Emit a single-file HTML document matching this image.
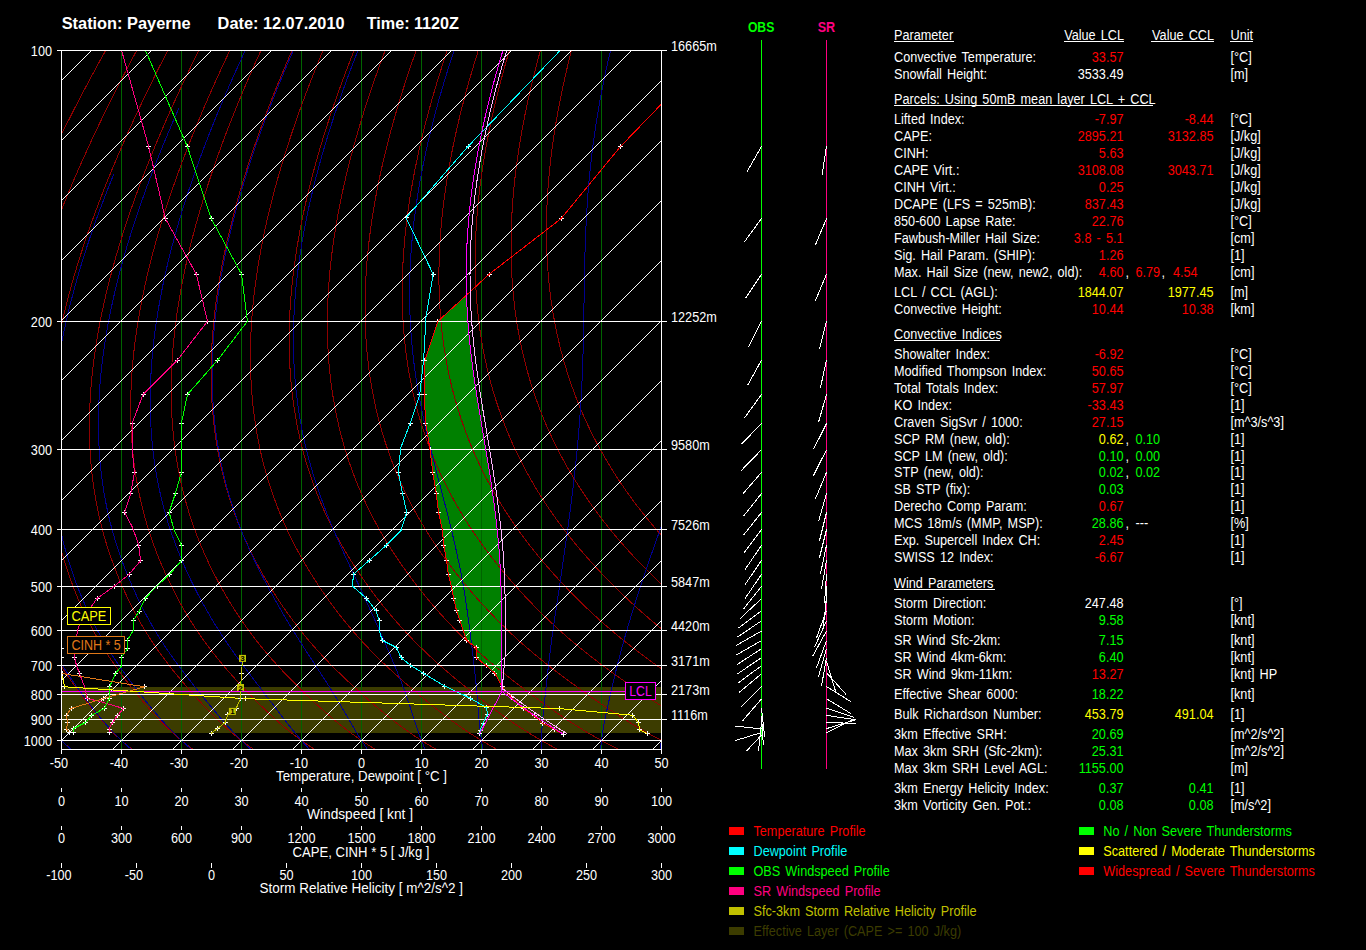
<!DOCTYPE html>
<html><head><meta charset="utf-8"><style>
html,body{margin:0;padding:0;background:#000;width:1366px;height:950px;overflow:hidden}
svg{position:absolute;left:0;top:0}
path{shape-rendering:crispEdges}
text{font-family:"Liberation Sans",sans-serif}
</style></head><body>
<svg width="1366" height="950" viewBox="0 0 1366 950">
<defs><clipPath id="pc"><rect x="62" y="51" width="599" height="698"/></clipPath></defs>

<g clip-path="url(#pc)" fill="none" stroke-width="1">
<rect x="62" y="687" width="599" height="46" fill="#3c3c00" stroke="none"/>
<path d="M466.00 295.50 L464.91 296.50 L463.82 297.50 L462.73 298.50 L461.64 299.50 L460.55 300.50 L459.47 301.50 L458.38 302.50 L457.29 303.50 L456.20 304.50 L455.11 305.50 L454.02 306.50 L452.93 307.50 L451.84 308.50 L450.75 309.50 L449.66 310.50 L448.57 311.50 L447.48 312.50 L446.40 313.50 L445.31 314.50 L444.22 315.50 L443.13 316.50 L442.04 317.50 L440.95 318.50 L439.86 319.50 L438.77 320.50 L437.83 321.50 L437.50 322.50 L437.16 323.50 L436.83 324.50 L436.49 325.50 L436.16 326.50 L435.82 327.50 L435.49 328.50 L435.15 329.50 L434.82 330.50 L434.48 331.50 L434.15 332.50 L433.81 333.50 L433.48 334.50 L433.14 335.50 L432.81 336.50 L432.47 337.50 L432.14 338.50 L431.80 339.50 L431.47 340.50 L431.13 341.50 L430.80 342.50 L430.46 343.50 L430.13 344.50 L429.79 345.50 L429.46 346.50 L429.12 347.50 L428.79 348.50 L428.45 349.50 L428.12 350.50 L427.78 351.50 L427.45 352.50 L427.11 353.50 L426.78 354.50 L426.44 355.50 L426.11 356.50 L425.77 357.50 L425.44 358.50 L425.10 359.50 L424.89 360.50 L424.87 361.50 L424.85 362.50 L424.83 363.50 L424.81 364.50 L424.79 365.50 L424.77 366.50 L424.75 367.50 L424.73 368.50 L424.71 369.50 L424.69 370.50 L424.67 371.50 L424.65 372.50 L424.63 373.50 L424.61 374.50 L424.59 375.50 L424.57 376.50 L424.54 377.50 L424.52 378.50 L424.50 379.50 L424.48 380.50 L424.46 381.50 L424.44 382.50 L424.42 383.50 L424.40 384.50 L424.38 385.50 L424.36 386.50 L424.34 387.50 L424.32 388.50 L424.30 389.50 L424.28 390.50 L424.26 391.50 L424.24 392.50 L424.22 393.50 L424.21 394.50 L424.26 395.50 L424.31 396.50 L424.36 397.50 L424.41 398.50 L424.47 399.50 L424.52 400.50 L424.57 401.50 L424.62 402.50 L424.67 403.50 L424.73 404.50 L424.78 405.50 L424.83 406.50 L424.88 407.50 L424.93 408.50 L424.99 409.50 L425.04 410.50 L425.09 411.50 L425.14 412.50 L425.19 413.50 L425.25 414.50 L425.30 415.50 L425.35 416.50 L425.40 417.50 L425.46 418.50 L425.51 419.50 L425.56 420.50 L425.61 421.50 L425.66 422.50 L425.75 423.50 L425.91 424.50 L426.07 425.50 L426.24 426.50 L426.40 427.50 L426.56 428.50 L426.73 429.50 L426.89 430.50 L427.05 431.50 L427.21 432.50 L427.38 433.50 L427.54 434.50 L427.70 435.50 L427.87 436.50 L428.03 437.50 L428.19 438.50 L428.35 439.50 L428.52 440.50 L428.68 441.50 L428.84 442.50 L429.01 443.50 L429.17 444.50 L429.33 445.50 L429.50 446.50 L429.66 447.50 L429.82 448.50 L429.98 449.50 L430.11 450.50 L430.23 451.50 L430.36 452.50 L430.48 453.50 L430.60 454.50 L430.72 455.50 L430.85 456.50 L430.97 457.50 L431.09 458.50 L431.22 459.50 L431.34 460.50 L431.46 461.50 L431.58 462.50 L431.71 463.50 L431.83 464.50 L431.95 465.50 L432.08 466.50 L432.20 467.50 L432.32 468.50 L432.44 469.50 L432.57 470.50 L432.69 471.50 L432.82 472.50 L432.98 473.50 L433.14 474.50 L433.30 475.50 L433.46 476.50 L433.62 477.50 L433.78 478.50 L433.94 479.50 L434.10 480.50 L434.26 481.50 L434.42 482.50 L434.58 483.50 L434.74 484.50 L434.90 485.50 L435.06 486.50 L435.22 487.50 L435.38 488.50 L435.54 489.50 L435.70 490.50 L435.86 491.50 L436.02 492.50 L436.18 493.50 L436.31 494.50 L436.44 495.50 L436.56 496.50 L436.68 497.50 L436.81 498.50 L436.93 499.50 L437.06 500.50 L437.18 501.50 L437.31 502.50 L437.43 503.50 L437.56 504.50 L437.68 505.50 L437.80 506.50 L437.93 507.50 L438.05 508.50 L438.18 509.50 L438.30 510.50 L438.43 511.50 L438.59 512.50 L438.81 513.50 L439.02 514.50 L439.24 515.50 L439.46 516.50 L439.68 517.50 L439.90 518.50 L440.12 519.50 L440.33 520.50 L440.55 521.50 L440.77 522.50 L440.99 523.50 L441.21 524.50 L441.43 525.50 L441.64 526.50 L441.86 527.50 L442.08 528.50 L442.30 529.50 L442.39 530.50 L442.49 531.50 L442.58 532.50 L442.68 533.50 L442.77 534.50 L442.87 535.50 L442.96 536.50 L443.06 537.50 L443.15 538.50 L443.25 539.50 L443.34 540.50 L443.44 541.50 L443.53 542.50 L443.63 543.50 L443.72 544.50 L443.84 545.50 L444.02 546.50 L444.20 547.50 L444.38 548.50 L444.56 549.50 L444.74 550.50 L444.92 551.50 L445.10 552.50 L445.28 553.50 L445.46 554.50 L445.64 555.50 L445.82 556.50 L446.00 557.50 L446.18 558.50 L446.36 559.50 L446.53 560.50 L446.66 561.50 L446.79 562.50 L446.93 563.50 L447.06 564.50 L447.20 565.50 L447.33 566.50 L447.46 567.50 L447.60 568.50 L447.73 569.50 L447.86 570.50 L448.00 571.50 L448.13 572.50 L448.27 573.50 L448.40 574.50 L448.65 575.50 L448.91 576.50 L449.16 577.50 L449.42 578.50 L449.67 579.50 L449.93 580.50 L450.18 581.50 L450.43 582.50 L450.69 583.50 L450.94 584.50 L451.20 585.50 L451.44 586.50 L451.63 587.50 L451.82 588.50 L452.01 589.50 L452.20 590.50 L452.39 591.50 L452.58 592.50 L452.77 593.50 L452.96 594.50 L453.15 595.50 L453.34 596.50 L453.53 597.50 L453.72 598.50 L453.95 599.50 L454.18 600.50 L454.41 601.50 L454.63 602.50 L454.86 603.50 L455.09 604.50 L455.32 605.50 L455.54 606.50 L455.77 607.50 L456.00 608.50 L456.23 609.50 L456.45 610.50 L456.77 611.50 L457.11 612.50 L457.45 613.50 L457.79 614.50 L458.13 615.50 L458.47 616.50 L458.81 617.50 L459.15 618.50 L459.49 619.50 L459.83 620.50 L460.17 621.50 L460.50 622.50 L460.84 623.50 L461.18 624.50 L461.51 625.50 L461.85 626.50 L462.18 627.50 L462.52 628.50 L462.85 629.50 L463.19 630.50 L463.52 631.50 L463.86 632.50 L464.20 633.50 L464.53 634.50 L464.88 635.50 L465.26 636.50 L465.64 637.50 L466.02 638.50 L466.40 639.50 L466.96 640.50 L468.26 641.50 L469.56 642.50 L470.86 643.50 L472.17 644.50 L473.47 645.50 L474.77 646.50 L476.07 647.50 L476.20 648.50 L476.20 649.50 L476.20 650.50 L476.20 651.50 L476.20 652.50 L476.20 653.50 L476.20 654.50 L476.20 655.50 L476.20 656.50 L476.20 657.50 L477.22 658.50 L478.48 659.50 L479.75 660.50 L481.02 661.50 L482.29 662.50 L483.56 663.50 L484.83 664.50 L486.10 665.50 L487.21 666.50 L488.33 667.50 L489.44 668.50 L490.56 669.50 L491.67 670.50 L492.78 671.50 L493.90 672.50 L494.96 673.50 L495.51 674.50 L496.06 675.50 L496.61 676.50 L497.17 677.50 L497.72 678.50 L498.27 679.50 L498.83 680.50 L499.38 681.50 L499.93 682.50 L500.49 683.50 L501.04 684.50 L501.59 685.50 L501.90 686.00 L501.90 685.00 L501.90 684.00 L501.90 683.00 L501.90 682.00 L501.89 681.00 L501.89 680.00 L501.88 679.00 L501.88 678.00 L501.87 677.00 L501.87 676.00 L501.86 675.00 L501.86 674.00 L501.85 673.00 L501.84 672.00 L501.84 671.00 L501.83 670.00 L501.82 669.00 L501.82 668.00 L501.81 667.00 L501.80 666.00 L501.80 665.00 L501.79 664.00 L501.78 663.00 L501.78 662.00 L501.77 661.00 L501.76 660.00 L501.76 659.00 L501.75 658.00 L501.75 657.00 L501.74 656.00 L501.73 655.00 L501.73 654.00 L501.72 653.00 L501.72 652.00 L501.71 651.00 L501.71 650.00 L501.70 649.00 L501.69 648.00 L501.69 647.00 L501.68 646.00 L501.68 645.00 L501.67 644.00 L501.67 643.00 L501.66 642.00 L501.66 641.00 L501.65 640.00 L501.65 639.00 L501.64 638.00 L501.64 637.00 L501.63 636.00 L501.63 635.00 L501.62 634.00 L501.62 633.00 L501.61 632.00 L501.61 631.00 L501.60 630.00 L501.60 629.00 L501.59 628.00 L501.59 627.00 L501.58 626.00 L501.58 625.00 L501.57 624.00 L501.57 623.00 L501.56 622.00 L501.55 621.00 L501.55 620.00 L501.54 619.00 L501.53 618.00 L501.53 617.00 L501.52 616.00 L501.51 615.00 L501.50 614.00 L501.49 613.00 L501.48 612.00 L501.47 611.00 L501.46 610.00 L501.45 609.00 L501.44 608.00 L501.43 607.00 L501.41 606.00 L501.40 605.00 L501.38 604.00 L501.37 603.00 L501.35 602.00 L501.34 601.00 L501.32 600.00 L501.30 599.00 L501.28 598.00 L501.26 597.00 L501.24 596.00 L501.22 595.00 L501.20 594.00 L501.17 593.00 L501.15 592.00 L501.12 591.00 L501.10 590.00 L501.07 589.00 L501.04 588.00 L501.01 587.00 L500.98 586.00 L500.95 585.00 L500.91 584.00 L500.88 583.00 L500.84 582.00 L500.81 581.00 L500.77 580.00 L500.73 579.00 L500.69 578.00 L500.65 577.00 L500.61 576.00 L500.56 575.00 L500.52 574.00 L500.47 573.00 L500.43 572.00 L500.38 571.00 L500.33 570.00 L500.28 569.00 L500.23 568.00 L500.18 567.00 L500.12 566.00 L500.07 565.00 L500.01 564.00 L499.96 563.00 L499.90 562.00 L499.84 561.00 L499.78 560.00 L499.72 559.00 L499.66 558.00 L499.59 557.00 L499.53 556.00 L499.46 555.00 L499.39 554.00 L499.33 553.00 L499.26 552.00 L499.18 551.00 L499.10 550.00 L499.01 549.00 L498.93 548.00 L498.84 547.00 L498.75 546.00 L498.66 545.00 L498.57 544.00 L498.48 543.00 L498.39 542.00 L498.29 541.00 L498.20 540.00 L498.10 539.00 L498.00 538.00 L497.91 537.00 L497.81 536.00 L497.71 535.00 L497.61 534.00 L497.50 533.00 L497.40 532.00 L497.30 531.00 L497.19 530.00 L497.08 529.00 L496.98 528.00 L496.87 527.00 L496.76 526.00 L496.65 525.00 L496.54 524.00 L496.43 523.00 L496.31 522.00 L496.20 521.00 L496.08 520.00 L495.97 519.00 L495.85 518.00 L495.73 517.00 L495.61 516.00 L495.49 515.00 L495.37 514.00 L495.25 513.00 L495.13 512.00 L495.00 511.00 L494.88 510.00 L494.75 509.00 L494.62 508.00 L494.50 507.00 L494.37 506.00 L494.24 505.00 L494.11 504.00 L493.98 503.00 L493.84 502.00 L493.71 501.00 L493.58 500.00 L493.44 499.00 L493.30 498.00 L493.17 497.00 L493.03 496.00 L492.89 495.00 L492.75 494.00 L492.61 493.00 L492.47 492.00 L492.33 491.00 L492.18 490.00 L492.04 489.00 L491.89 488.00 L491.75 487.00 L491.60 486.00 L491.45 485.00 L491.31 484.00 L491.16 483.00 L491.01 482.00 L490.86 481.00 L490.71 480.00 L490.55 479.00 L490.40 478.00 L490.25 477.00 L490.10 476.00 L489.94 475.00 L489.79 474.00 L489.63 473.00 L489.47 472.00 L489.32 471.00 L489.16 470.00 L489.00 469.00 L488.84 468.00 L488.68 467.00 L488.52 466.00 L488.36 465.00 L488.20 464.00 L488.04 463.00 L487.87 462.00 L487.71 461.00 L487.55 460.00 L487.38 459.00 L487.22 458.00 L487.06 457.00 L486.89 456.00 L486.73 455.00 L486.56 454.00 L486.39 453.00 L486.23 452.00 L486.06 451.00 L485.89 450.00 L485.72 449.00 L485.56 448.00 L485.39 447.00 L485.22 446.00 L485.05 445.00 L484.88 444.00 L484.71 443.00 L484.54 442.00 L484.38 441.00 L484.21 440.00 L484.04 439.00 L483.87 438.00 L483.70 437.00 L483.53 436.00 L483.36 435.00 L483.19 434.00 L483.02 433.00 L482.85 432.00 L482.68 431.00 L482.51 430.00 L482.33 429.00 L482.16 428.00 L482.00 427.00 L481.83 426.00 L481.66 425.00 L481.49 424.00 L481.32 423.00 L481.15 422.00 L480.98 421.00 L480.81 420.00 L480.64 419.00 L480.47 418.00 L480.30 417.00 L480.14 416.00 L479.97 415.00 L479.80 414.00 L479.64 413.00 L479.47 412.00 L479.30 411.00 L479.14 410.00 L478.97 409.00 L478.81 408.00 L478.64 407.00 L478.48 406.00 L478.31 405.00 L478.15 404.00 L477.99 403.00 L477.83 402.00 L477.67 401.00 L477.51 400.00 L477.35 399.00 L477.19 398.00 L477.03 397.00 L476.87 396.00 L476.71 395.00 L476.55 394.00 L476.40 393.00 L476.24 392.00 L476.09 391.00 L475.93 390.00 L475.78 389.00 L475.63 388.00 L475.48 387.00 L475.33 386.00 L475.18 385.00 L475.03 384.00 L474.88 383.00 L474.73 382.00 L474.58 381.00 L474.44 380.00 L474.29 379.00 L474.15 378.00 L474.01 377.00 L473.86 376.00 L473.72 375.00 L473.58 374.00 L473.44 373.00 L473.31 372.00 L473.17 371.00 L473.03 370.00 L472.90 369.00 L472.76 368.00 L472.63 367.00 L472.50 366.00 L472.37 365.00 L472.24 364.00 L472.11 363.00 L471.98 362.00 L471.86 361.00 L471.73 360.00 L471.61 359.00 L471.49 358.00 L471.37 357.00 L471.25 356.00 L471.13 355.00 L471.01 354.00 L470.89 353.00 L470.78 352.00 L470.66 351.00 L470.55 350.00 L470.44 349.00 L470.33 348.00 L470.22 347.00 L470.11 346.00 L470.01 345.00 L469.90 344.00 L469.80 343.00 L469.70 342.00 L469.60 341.00 L469.50 340.00 L469.40 339.00 L469.30 338.00 L469.21 337.00 L469.11 336.00 L469.02 335.00 L468.93 334.00 L468.84 333.00 L468.75 332.00 L468.66 331.00 L468.58 330.00 L468.49 329.00 L468.41 328.00 L468.33 327.00 L468.25 326.00 L468.17 325.00 L468.09 324.00 L468.02 323.00 L467.95 322.00 L467.87 321.00 L467.80 320.00 L467.73 319.00 L467.67 318.00 L467.60 317.00 L467.53 316.00 L467.47 315.00 L467.41 314.00 L467.35 313.00 L467.29 312.00 L467.23 311.00 L467.18 310.00 L467.12 309.00 L467.07 308.00 L467.02 307.00 L466.97 306.00 L466.92 305.00 L466.88 304.00 L466.83 303.00 L466.79 302.00 L466.75 301.00 L466.70 300.00 L466.67 299.00 L466.63 298.00 L466.59 297.00 L466.56 296.00Z" fill="#008000" stroke="none"/>
<g stroke="#006400"><path d="M121.5 50.5 V749.5"/><path d="M181.5 50.5 V749.5"/><path d="M241.5 50.5 V749.5"/><path d="M301.5 50.5 V749.5"/><path d="M361.5 50.5 V749.5"/><path d="M421.5 50.5 V749.5"/><path d="M481.5 50.5 V749.5"/><path d="M541.5 50.5 V749.5"/><path d="M601.5 50.5 V749.5"/></g>
<g stroke="#900000"><path d="M115.95 32.13 L113.87 35.80 L111.81 39.45 L109.76 43.09 L107.73 46.72 L105.71 50.34 L103.71 53.95 L101.72 57.55 L99.75 61.14 L97.79 64.71 L95.85 68.27 L93.92 71.83 L92.01 75.37 L90.11 78.90 L88.23 82.41 L86.36 85.92 L84.51 89.42 L82.67 92.90 L80.85 96.38 L79.04 99.84 L77.25 103.29 L75.47 106.73 L73.71 110.16 L71.96 113.58 L70.23 116.99 L68.51 120.39 L66.80 123.77 L65.11 127.15 L63.44 130.51 L61.78 133.87 L60.13 137.21 L58.50 140.55 L56.88 143.87 L55.28 147.18 L53.69 150.48 L52.12 153.78 L50.56 157.06 L49.01 160.33 L47.48 163.59 L45.97 166.84 L44.47 170.08 L42.98 173.31 L41.51 176.52 L40.05 179.73 L38.60 182.93 L37.17 186.12 L35.75 189.30 L34.35 192.47 L32.96 195.63 L31.59 198.77 L30.23 201.91 L28.88 205.04 L27.55 208.16 L26.23 211.27 L24.93 214.37 L23.64 217.46 L22.36 220.53 L21.10 223.60 L19.85 226.66 L18.62 229.71 L17.40 232.75 L16.19 235.78 L15.00 238.81 L13.82 241.82 L12.66 244.82 L11.51 247.81 L10.37 250.80 L9.24 253.77 L8.13 256.73 L7.04 259.69 L5.95 262.64 L4.88 265.57 L3.83 268.50 L2.78 271.42 L1.76 274.33 L0.74 277.23 L-0.26 280.12 L-1.25 283.00 L-2.23 285.87 L-3.19 288.73 L-4.14 291.59 L-5.07 294.43 L-5.99 297.27 L-6.90 300.10 L-7.80 302.92 L-8.68 305.73 L-9.55 308.53 L-10.40 311.32 L-11.24 314.11 L-12.07 316.88 L-12.89 319.65 L-13.69 322.41 L-14.48 325.16 L-15.26 327.90 L-16.02 330.63 L-16.77 333.35 L-17.51 336.07 L-18.23 338.78 L-18.94 341.48 L-19.64 344.17 L-20.33 346.85 L-21.00 349.52 L-21.66 352.19 L-22.31 354.84 L-22.94 357.49 L-23.56 360.13 L-24.17 362.77 L-24.76 365.39 L-25.35 368.01 L-25.92 370.62 L-26.47 373.22 L-27.02 375.81 L-27.55 378.40 L-28.07 380.97 L-28.58 383.54 L-29.07 386.10 L-29.55 388.66 L-30.02 391.20 L-30.48 393.74 L-30.92 396.27 L-31.36 398.80 L-31.77 401.31 L-32.18 403.82 L-32.58 406.32 L-32.96 408.81 L-33.33 411.30 L-33.68 413.77 L-34.03 416.24 L-34.36 418.71 L-34.68 421.16 L-34.99 423.61 L-35.29 426.05 L-35.57 428.49 L-35.84 430.91 L-36.10 433.33 L-36.35 435.74 L-36.58 438.15 L-36.80 440.55 L-37.02 442.94 L-37.21 445.32 L-37.40 447.70 L-37.57 450.07 L-37.74 452.43 L-37.89 454.79 L-38.03 457.14 L-38.15 459.48 L-38.27 461.82 L-38.37 464.14 L-38.46 466.47 L-38.54 468.78 L-38.61 471.09 L-38.66 473.39 L-38.71 475.69 L-38.74 477.98 L-38.76 480.26 L-38.77 482.53 L-38.76 484.80 L-38.75 487.07 L-38.72 489.32 L-38.68 491.57 L-38.63 493.82 L-38.57 496.05 L-38.49 498.28 L-38.41 500.51 L-38.31 502.73 L-38.20 504.94 L-38.08 507.14 L-37.95 509.34 L-37.80 511.54 L-37.65 513.72 L-37.48 515.90 L-37.30 518.08 L-37.11 520.25 L-36.91 522.41 L-36.70 524.57 L-36.47 526.72 L-36.24 528.86 L-35.99 531.00 L-35.73 533.13 L-35.46 535.26 L-35.18 537.38 L-34.88 539.50 L-34.58 541.61 L-34.26 543.71 L-33.94 545.81 L-33.60 547.90 L-33.25 549.99 L-32.89 552.07 L-32.52 554.15 L-32.14 556.23 L-31.75 558.29 L-31.35 560.36 L-30.94 562.42 L-30.52 564.47 L-30.08 566.52 L-29.64 568.56 L-29.19 570.60 L-28.72 572.64 L-28.25 574.67 L-27.77 576.70 L-27.27 578.72 L-26.77 580.74 L-26.25 582.75 L-25.73 584.76 L-25.20 586.77 L-24.65 588.77 L-24.10 590.77 L-23.54 592.77 L-22.97 594.76 L-22.38 596.75 L-21.79 598.73 L-21.19 600.71 L-20.57 602.68 L-19.95 604.65 L-19.31 606.61 L-18.66 608.57 L-18.01 610.52 L-17.34 612.47 L-16.66 614.42 L-15.96 616.35 L-15.26 618.29 L-14.55 620.21 L-13.82 622.14 L-13.08 624.05 L-12.33 625.96 L-11.57 627.87 L-10.79 629.77 L-10.01 631.66 L-9.21 633.54 L-8.40 635.42 L-7.57 637.30 L-6.74 639.17 L-5.89 641.03 L-5.03 642.88 L-4.16 644.73 L-3.27 646.58 L-2.37 648.42 L-1.47 650.25 L-0.55 652.08 L0.39 653.90 L1.33 655.72 L2.28 657.53 L3.25 659.34 L4.23 661.14 L5.22 662.94 L6.22 664.73 L7.23 666.52 L8.26 668.30 L9.29 670.08 L10.34 671.85 L11.39 673.62 L12.46 675.38 L13.54 677.15 L14.63 678.90 L15.72 680.66 L16.83 682.41 L17.94 684.16 L19.07 685.91 L20.20 687.66 L21.34 689.40 L22.49 691.14 L23.64 692.89 L24.81 694.63 L25.98 696.37 L27.16 698.11 L28.35 699.84 L29.55 701.58 L30.75 703.31 L31.97 705.04 L33.20 706.77 L34.43 708.49 L35.68 710.20 L36.95 711.91 L38.22 713.62 L39.51 715.32 L40.81 717.01 L42.12 718.70 L43.45 720.38 L44.80 722.05 L46.16 723.71 L47.54 725.36 L48.93 727.00 L50.34 728.64 L51.77 730.26 L53.21 731.87 L54.68 733.47 L56.16 735.06 L57.66 736.63 L59.19 738.19 L60.73 739.74 L62.30 741.28 L63.88 742.80 L65.49 744.30 L67.12 745.79 L68.78 747.26 L70.46 748.72 L72.16 750.16 L73.89 751.58 L75.64 752.99 L77.42 754.38"/><path d="M146.65 32.13 L144.64 35.80 L142.65 39.45 L140.67 43.09 L138.71 46.72 L136.76 50.34 L134.83 53.95 L132.92 57.55 L131.02 61.14 L129.13 64.71 L127.26 68.27 L125.41 71.83 L123.57 75.37 L121.75 78.90 L119.94 82.41 L118.14 85.92 L116.37 89.42 L114.60 92.90 L112.85 96.38 L111.12 99.84 L109.40 103.29 L107.70 106.73 L106.01 110.16 L104.34 113.58 L102.68 116.99 L101.03 120.39 L99.40 123.77 L97.79 127.15 L96.19 130.51 L94.61 133.87 L93.04 137.21 L91.48 140.55 L89.94 143.87 L88.41 147.18 L86.90 150.48 L85.41 153.78 L83.92 157.06 L82.46 160.33 L81.00 163.59 L79.56 166.84 L78.14 170.08 L76.73 173.31 L75.34 176.52 L73.96 179.73 L72.59 182.93 L71.24 186.12 L69.90 189.30 L68.58 192.47 L67.27 195.63 L65.97 198.77 L64.69 201.91 L63.43 205.04 L62.18 208.16 L60.94 211.27 L59.71 214.37 L58.51 217.46 L57.31 220.53 L56.13 223.60 L54.96 226.66 L53.81 229.71 L52.67 232.75 L51.55 235.78 L50.43 238.81 L49.34 241.82 L48.26 244.82 L47.19 247.81 L46.13 250.80 L45.09 253.77 L44.06 256.73 L43.05 259.69 L42.05 262.64 L41.06 265.57 L40.09 268.50 L39.13 271.42 L38.19 274.33 L37.26 277.23 L36.34 280.12 L35.44 283.00 L34.55 285.87 L33.67 288.73 L32.81 291.59 L31.96 294.43 L31.12 297.27 L30.30 300.10 L29.49 302.92 L28.69 305.73 L27.91 308.53 L27.14 311.32 L26.39 314.11 L25.65 316.88 L24.92 319.65 L24.20 322.41 L23.50 325.16 L22.81 327.90 L22.14 330.63 L21.48 333.35 L20.83 336.07 L20.19 338.78 L19.57 341.48 L18.96 344.17 L18.37 346.85 L17.78 349.52 L17.21 352.19 L16.66 354.84 L16.11 357.49 L15.58 360.13 L15.06 362.77 L14.56 365.39 L14.07 368.01 L13.59 370.62 L13.12 373.22 L12.67 375.81 L12.23 378.40 L11.80 380.97 L11.39 383.54 L10.99 386.10 L10.60 388.66 L10.22 391.20 L9.86 393.74 L9.51 396.27 L9.17 398.80 L8.85 401.31 L8.53 403.82 L8.23 406.32 L7.95 408.81 L7.67 411.30 L7.41 413.77 L7.16 416.24 L6.92 418.71 L6.70 421.16 L6.49 423.61 L6.29 426.05 L6.10 428.49 L5.92 430.91 L5.76 433.33 L5.61 435.74 L5.47 438.15 L5.35 440.55 L5.24 442.94 L5.13 445.32 L5.05 447.70 L4.97 450.07 L4.91 452.43 L4.85 454.79 L4.81 457.14 L4.79 459.48 L4.77 461.82 L4.77 464.14 L4.78 466.47 L4.80 468.78 L4.83 471.09 L4.88 473.39 L4.94 475.69 L5.01 477.98 L5.09 480.26 L5.18 482.53 L5.29 484.80 L5.40 487.07 L5.53 489.32 L5.68 491.57 L5.83 493.82 L5.99 496.05 L6.17 498.28 L6.36 500.51 L6.56 502.73 L6.78 504.94 L7.00 507.14 L7.24 509.34 L7.49 511.54 L7.75 513.72 L8.02 515.90 L8.30 518.08 L8.60 520.25 L8.91 522.41 L9.23 524.57 L9.56 526.72 L9.90 528.86 L10.26 531.00 L10.62 533.13 L11.00 535.26 L11.39 537.38 L11.79 539.50 L12.20 541.61 L12.63 543.71 L13.06 545.81 L13.51 547.90 L13.96 549.99 L14.43 552.07 L14.91 554.15 L15.40 556.23 L15.90 558.29 L16.41 560.36 L16.94 562.42 L17.47 564.47 L18.01 566.52 L18.57 568.56 L19.13 570.60 L19.71 572.64 L20.30 574.67 L20.89 576.70 L21.50 578.72 L22.12 580.74 L22.74 582.75 L23.38 584.76 L24.03 586.77 L24.69 588.77 L25.35 590.77 L26.03 592.77 L26.72 594.76 L27.42 596.75 L28.13 598.73 L28.84 600.71 L29.58 602.68 L30.32 604.65 L31.07 606.61 L31.83 608.57 L32.61 610.52 L33.39 612.47 L34.19 614.42 L35.00 616.35 L35.82 618.29 L36.66 620.21 L37.50 622.14 L38.36 624.05 L39.23 625.96 L40.11 627.87 L41.00 629.77 L41.91 631.66 L42.83 633.54 L43.76 635.42 L44.71 637.30 L45.66 639.17 L46.63 641.03 L47.62 642.88 L48.61 644.73 L49.62 646.58 L50.64 648.42 L51.67 650.25 L52.71 652.08 L53.77 653.90 L54.83 655.72 L55.91 657.53 L57.00 659.34 L58.11 661.14 L59.22 662.94 L60.35 664.73 L61.49 666.52 L62.64 668.30 L63.80 670.08 L64.97 671.85 L66.15 673.62 L67.35 675.38 L68.55 677.15 L69.76 678.90 L70.99 680.66 L72.22 682.41 L73.47 684.16 L74.72 685.91 L75.98 687.66 L77.25 689.40 L78.53 691.14 L79.81 692.89 L81.11 694.63 L82.41 696.37 L83.72 698.11 L85.04 699.84 L86.37 701.58 L87.71 703.31 L89.06 705.04 L90.42 706.77 L91.79 708.49 L93.17 710.20 L94.56 711.91 L95.97 713.62 L97.39 715.32 L98.83 717.01 L100.28 718.70 L101.74 720.38 L103.22 722.05 L104.72 723.71 L106.23 725.36 L107.76 727.00 L109.31 728.64 L110.87 730.26 L112.45 731.87 L114.06 733.47 L115.68 735.06 L117.32 736.63 L118.98 738.19 L120.66 739.74 L122.37 741.28 L124.09 742.80 L125.84 744.30 L127.61 745.79 L129.41 747.26 L131.23 748.72 L133.07 750.16 L134.94 751.58 L136.84 752.99 L138.76 754.38"/><path d="M177.34 32.13 L175.41 35.80 L173.48 39.45 L171.58 43.09 L169.69 46.72 L167.82 50.34 L165.96 53.95 L164.12 57.55 L162.29 61.14 L160.48 64.71 L158.68 68.27 L156.90 71.83 L155.13 75.37 L153.38 78.90 L151.65 82.41 L149.93 85.92 L148.22 89.42 L146.53 92.90 L144.86 96.38 L143.20 99.84 L141.55 103.29 L139.92 106.73 L138.31 110.16 L136.71 113.58 L135.13 116.99 L133.56 120.39 L132.00 123.77 L130.47 127.15 L128.94 130.51 L127.43 133.87 L125.94 137.21 L124.46 140.55 L123.00 143.87 L121.55 147.18 L120.11 150.48 L118.69 153.78 L117.29 157.06 L115.90 160.33 L114.52 163.59 L113.16 166.84 L111.81 170.08 L110.48 173.31 L109.17 176.52 L107.86 179.73 L106.58 182.93 L105.30 186.12 L104.05 189.30 L102.80 192.47 L101.57 195.63 L100.36 198.77 L99.16 201.91 L97.97 205.04 L96.80 208.16 L95.64 211.27 L94.50 214.37 L93.37 217.46 L92.26 220.53 L91.16 223.60 L90.07 226.66 L89.00 229.71 L87.94 232.75 L86.90 235.78 L85.87 238.81 L84.85 241.82 L83.85 244.82 L82.87 247.81 L81.89 250.80 L80.94 253.77 L79.99 256.73 L79.06 259.69 L78.15 262.64 L77.24 265.57 L76.35 268.50 L75.48 271.42 L74.62 274.33 L73.77 277.23 L72.94 280.12 L72.12 283.00 L71.32 285.87 L70.53 288.73 L69.75 291.59 L68.98 294.43 L68.23 297.27 L67.50 300.10 L66.78 302.92 L66.07 305.73 L65.37 308.53 L64.69 311.32 L64.02 314.11 L63.37 316.88 L62.73 319.65 L62.10 322.41 L61.49 325.16 L60.88 327.90 L60.30 330.63 L59.72 333.35 L59.16 336.07 L58.62 338.78 L58.08 341.48 L57.56 344.17 L57.06 346.85 L56.57 349.52 L56.09 352.19 L55.62 354.84 L55.17 357.49 L54.73 360.13 L54.30 362.77 L53.88 365.39 L53.48 368.01 L53.10 370.62 L52.72 373.22 L52.36 375.81 L52.01 378.40 L51.68 380.97 L51.36 383.54 L51.05 386.10 L50.75 388.66 L50.47 391.20 L50.20 393.74 L49.94 396.27 L49.70 398.80 L49.47 401.31 L49.25 403.82 L49.04 406.32 L48.85 408.81 L48.67 411.30 L48.50 413.77 L48.35 416.24 L48.21 418.71 L48.08 421.16 L47.96 423.61 L47.86 426.05 L47.77 428.49 L47.69 430.91 L47.62 433.33 L47.57 435.74 L47.53 438.15 L47.50 440.55 L47.49 442.94 L47.48 445.32 L47.49 447.70 L47.52 450.07 L47.55 452.43 L47.60 454.79 L47.66 457.14 L47.73 459.48 L47.81 461.82 L47.91 464.14 L48.02 466.47 L48.14 468.78 L48.27 471.09 L48.42 473.39 L48.58 475.69 L48.75 477.98 L48.93 480.26 L49.13 482.53 L49.34 484.80 L49.55 487.07 L49.79 489.32 L50.03 491.57 L50.29 493.82 L50.56 496.05 L50.84 498.28 L51.13 500.51 L51.43 502.73 L51.75 504.94 L52.08 507.14 L52.42 509.34 L52.78 511.54 L53.14 513.72 L53.52 515.90 L53.91 518.08 L54.31 520.25 L54.72 522.41 L55.15 524.57 L55.59 526.72 L56.04 528.86 L56.50 531.00 L56.97 533.13 L57.46 535.26 L57.95 537.38 L58.46 539.50 L58.98 541.61 L59.51 543.71 L60.06 545.81 L60.61 547.90 L61.18 549.99 L61.76 552.07 L62.35 554.15 L62.95 556.23 L63.56 558.29 L64.18 560.36 L64.81 562.42 L65.46 564.47 L66.11 566.52 L66.78 568.56 L67.46 570.60 L68.14 572.64 L68.84 574.67 L69.55 576.70 L70.27 578.72 L71.00 580.74 L71.74 582.75 L72.49 584.76 L73.25 586.77 L74.03 588.77 L74.81 590.77 L75.60 592.77 L76.40 594.76 L77.22 596.75 L78.04 598.73 L78.87 600.71 L79.72 602.68 L80.58 604.65 L81.45 606.61 L82.33 608.57 L83.22 610.52 L84.12 612.47 L85.04 614.42 L85.97 616.35 L86.91 618.29 L87.86 620.21 L88.82 622.14 L89.80 624.05 L90.79 625.96 L91.79 627.87 L92.80 629.77 L93.83 631.66 L94.87 633.54 L95.92 635.42 L96.99 637.30 L98.07 639.17 L99.16 641.03 L100.26 642.88 L101.38 644.73 L102.51 646.58 L103.65 648.42 L104.80 650.25 L105.97 652.08 L107.15 653.90 L108.34 655.72 L109.54 657.53 L110.76 659.34 L111.98 661.14 L113.22 662.94 L114.47 664.73 L115.74 666.52 L117.01 668.30 L118.30 670.08 L119.60 671.85 L120.91 673.62 L122.23 675.38 L123.56 677.15 L124.90 678.90 L126.26 680.66 L127.62 682.41 L128.99 684.16 L130.37 685.91 L131.76 687.66 L133.16 689.40 L134.57 691.14 L135.98 692.89 L137.41 694.63 L138.84 696.37 L140.28 698.11 L141.73 699.84 L143.19 701.58 L144.66 703.31 L146.14 705.04 L147.64 706.77 L149.14 708.49 L150.66 710.20 L152.18 711.91 L153.73 713.62 L155.28 715.32 L156.85 717.01 L158.43 718.70 L160.03 720.38 L161.65 722.05 L163.28 723.71 L164.93 725.36 L166.59 727.00 L168.28 728.64 L169.98 730.26 L171.70 731.87 L173.44 733.47 L175.19 735.06 L176.97 736.63 L178.77 738.19 L180.59 739.74 L182.44 741.28 L184.30 742.80 L186.19 744.30 L188.10 745.79 L190.04 747.26 L192.00 748.72 L193.98 750.16 L195.99 751.58 L198.03 752.99 L200.09 754.38"/><path d="M208.04 32.13 L206.17 35.80 L204.32 39.45 L202.49 43.09 L200.67 46.72 L198.87 50.34 L197.08 53.95 L195.31 57.55 L193.56 61.14 L191.82 64.71 L190.09 68.27 L188.39 71.83 L186.69 75.37 L185.01 78.90 L183.35 82.41 L181.71 85.92 L180.07 89.42 L178.46 92.90 L176.86 96.38 L175.27 99.84 L173.70 103.29 L172.15 106.73 L170.61 110.16 L169.09 113.58 L167.58 116.99 L166.08 120.39 L164.60 123.77 L163.14 127.15 L161.69 130.51 L160.26 133.87 L158.84 137.21 L157.44 140.55 L156.05 143.87 L154.68 147.18 L153.32 150.48 L151.98 153.78 L150.65 157.06 L149.34 160.33 L148.04 163.59 L146.76 166.84 L145.49 170.08 L144.24 173.31 L143.00 176.52 L141.77 179.73 L140.56 182.93 L139.37 186.12 L138.19 189.30 L137.03 192.47 L135.88 195.63 L134.74 198.77 L133.62 201.91 L132.51 205.04 L131.42 208.16 L130.34 211.27 L129.28 214.37 L128.23 217.46 L127.20 220.53 L126.18 223.60 L125.18 226.66 L124.19 229.71 L123.21 232.75 L122.25 235.78 L121.30 238.81 L120.37 241.82 L119.45 244.82 L118.55 247.81 L117.66 250.80 L116.78 253.77 L115.92 256.73 L115.07 259.69 L114.24 262.64 L113.42 265.57 L112.62 268.50 L111.83 271.42 L111.05 274.33 L110.29 277.23 L109.54 280.12 L108.81 283.00 L108.09 285.87 L107.38 288.73 L106.69 291.59 L106.01 294.43 L105.35 297.27 L104.70 300.10 L104.06 302.92 L103.44 305.73 L102.83 308.53 L102.24 311.32 L101.65 314.11 L101.09 316.88 L100.53 319.65 L99.99 322.41 L99.47 325.16 L98.96 327.90 L98.46 330.63 L97.97 333.35 L97.50 336.07 L97.04 338.78 L96.60 341.48 L96.17 344.17 L95.75 346.85 L95.35 349.52 L94.96 352.19 L94.58 354.84 L94.22 357.49 L93.87 360.13 L93.53 362.77 L93.21 365.39 L92.90 368.01 L92.60 370.62 L92.32 373.22 L92.05 375.81 L91.80 378.40 L91.55 380.97 L91.32 383.54 L91.11 386.10 L90.90 388.66 L90.71 391.20 L90.54 393.74 L90.37 396.27 L90.22 398.80 L90.09 401.31 L89.96 403.82 L89.85 406.32 L89.75 408.81 L89.67 411.30 L89.59 413.77 L89.54 416.24 L89.49 418.71 L89.46 421.16 L89.44 423.61 L89.43 426.05 L89.43 428.49 L89.45 430.91 L89.48 433.33 L89.53 435.74 L89.58 438.15 L89.65 440.55 L89.74 442.94 L89.83 445.32 L89.94 447.70 L90.06 450.07 L90.19 452.43 L90.34 454.79 L90.50 457.14 L90.67 459.48 L90.85 461.82 L91.05 464.14 L91.26 466.47 L91.48 468.78 L91.71 471.09 L91.96 473.39 L92.22 475.69 L92.49 477.98 L92.78 480.26 L93.07 482.53 L93.38 484.80 L93.71 487.07 L94.04 489.32 L94.39 491.57 L94.75 493.82 L95.12 496.05 L95.50 498.28 L95.90 500.51 L96.31 502.73 L96.73 504.94 L97.16 507.14 L97.61 509.34 L98.07 511.54 L98.54 513.72 L99.02 515.90 L99.51 518.08 L100.02 520.25 L100.54 522.41 L101.07 524.57 L101.62 526.72 L102.17 528.86 L102.74 531.00 L103.32 533.13 L103.91 535.26 L104.52 537.38 L105.14 539.50 L105.76 541.61 L106.40 543.71 L107.06 545.81 L107.72 547.90 L108.40 549.99 L109.08 552.07 L109.78 554.15 L110.49 556.23 L111.21 558.29 L111.95 560.36 L112.69 562.42 L113.45 564.47 L114.21 566.52 L114.99 568.56 L115.78 570.60 L116.58 572.64 L117.39 574.67 L118.21 576.70 L119.04 578.72 L119.89 580.74 L120.74 582.75 L121.60 584.76 L122.48 586.77 L123.36 588.77 L124.26 590.77 L125.17 592.77 L126.09 594.76 L127.01 596.75 L127.95 598.73 L128.90 600.71 L129.87 602.68 L130.84 604.65 L131.83 606.61 L132.82 608.57 L133.83 610.52 L134.85 612.47 L135.89 614.42 L136.93 616.35 L137.99 618.29 L139.06 620.21 L140.14 622.14 L141.24 624.05 L142.34 625.96 L143.47 627.87 L144.60 629.77 L145.75 631.66 L146.91 633.54 L148.08 635.42 L149.27 637.30 L150.47 639.17 L151.68 641.03 L152.90 642.88 L154.14 644.73 L155.39 646.58 L156.66 648.42 L157.94 650.25 L159.22 652.08 L160.53 653.90 L161.84 655.72 L163.17 657.53 L164.51 659.34 L165.86 661.14 L167.23 662.94 L168.60 664.73 L169.99 666.52 L171.39 668.30 L172.81 670.08 L174.23 671.85 L175.67 673.62 L177.11 675.38 L178.57 677.15 L180.04 678.90 L181.52 680.66 L183.01 682.41 L184.51 684.16 L186.02 685.91 L187.54 687.66 L189.07 689.40 L190.61 691.14 L192.15 692.89 L193.71 694.63 L195.27 696.37 L196.84 698.11 L198.43 699.84 L200.02 701.58 L201.62 703.31 L203.23 705.04 L204.86 706.77 L206.49 708.49 L208.14 710.20 L209.80 711.91 L211.48 713.62 L213.17 715.32 L214.87 717.01 L216.59 718.70 L218.32 720.38 L220.07 722.05 L221.84 723.71 L223.62 725.36 L225.42 727.00 L227.24 728.64 L229.08 730.26 L230.94 731.87 L232.81 733.47 L234.71 735.06 L236.63 736.63 L238.57 738.19 L240.53 739.74 L242.51 741.28 L244.51 742.80 L246.54 744.30 L248.59 745.79 L250.67 747.26 L252.77 748.72 L254.89 750.16 L257.05 751.58 L259.22 752.99 L261.43 754.38"/><path d="M238.73 32.13 L236.94 35.80 L235.16 39.45 L233.40 43.09 L231.65 46.72 L229.92 50.34 L228.21 53.95 L226.51 57.55 L224.83 61.14 L223.16 64.71 L221.51 68.27 L219.87 71.83 L218.25 75.37 L216.65 78.90 L215.06 82.41 L213.49 85.92 L211.93 89.42 L210.39 92.90 L208.86 96.38 L207.35 99.84 L205.85 103.29 L204.37 106.73 L202.91 110.16 L201.46 113.58 L200.03 116.99 L198.61 120.39 L197.21 123.77 L195.82 127.15 L194.45 130.51 L193.09 133.87 L191.75 137.21 L190.42 140.55 L189.11 143.87 L187.81 147.18 L186.53 150.48 L185.27 153.78 L184.02 157.06 L182.78 160.33 L181.56 163.59 L180.35 166.84 L179.16 170.08 L177.99 173.31 L176.83 176.52 L175.68 179.73 L174.55 182.93 L173.44 186.12 L172.34 189.30 L171.25 192.47 L170.18 195.63 L169.12 198.77 L168.08 201.91 L167.06 205.04 L166.04 208.16 L165.05 211.27 L164.07 214.37 L163.10 217.46 L162.15 220.53 L161.21 223.60 L160.28 226.66 L159.38 229.71 L158.48 232.75 L157.60 235.78 L156.74 238.81 L155.89 241.82 L155.05 244.82 L154.23 247.81 L153.42 250.80 L152.63 253.77 L151.85 256.73 L151.09 259.69 L150.34 262.64 L149.60 265.57 L148.88 268.50 L148.18 271.42 L147.48 274.33 L146.81 277.23 L146.14 280.12 L145.49 283.00 L144.86 285.87 L144.24 288.73 L143.63 291.59 L143.04 294.43 L142.46 297.27 L141.90 300.10 L141.35 302.92 L140.81 305.73 L140.29 308.53 L139.78 311.32 L139.29 314.11 L138.81 316.88 L138.34 319.65 L137.89 322.41 L137.45 325.16 L137.03 327.90 L136.62 330.63 L136.22 333.35 L135.84 336.07 L135.47 338.78 L135.11 341.48 L134.77 344.17 L134.44 346.85 L134.13 349.52 L133.83 352.19 L133.54 354.84 L133.27 357.49 L133.01 360.13 L132.77 362.77 L132.53 365.39 L132.32 368.01 L132.11 370.62 L131.92 373.22 L131.74 375.81 L131.58 378.40 L131.43 380.97 L131.29 383.54 L131.17 386.10 L131.06 388.66 L130.96 391.20 L130.88 393.74 L130.81 396.27 L130.75 398.80 L130.71 401.31 L130.68 403.82 L130.66 406.32 L130.66 408.81 L130.66 411.30 L130.69 413.77 L130.72 416.24 L130.77 418.71 L130.84 421.16 L130.91 423.61 L131.00 426.05 L131.10 428.49 L131.22 430.91 L131.34 433.33 L131.49 435.74 L131.64 438.15 L131.81 440.55 L131.99 442.94 L132.18 445.32 L132.39 447.70 L132.61 450.07 L132.84 452.43 L133.08 454.79 L133.34 457.14 L133.61 459.48 L133.89 461.82 L134.19 464.14 L134.50 466.47 L134.82 468.78 L135.16 471.09 L135.50 473.39 L135.86 475.69 L136.24 477.98 L136.62 480.26 L137.02 482.53 L137.43 484.80 L137.86 487.07 L138.29 489.32 L138.74 491.57 L139.20 493.82 L139.68 496.05 L140.17 498.28 L140.67 500.51 L141.18 502.73 L141.70 504.94 L142.24 507.14 L142.79 509.34 L143.35 511.54 L143.93 513.72 L144.52 515.90 L145.12 518.08 L145.73 520.25 L146.36 522.41 L147.00 524.57 L147.65 526.72 L148.31 528.86 L148.98 531.00 L149.67 533.13 L150.37 535.26 L151.08 537.38 L151.81 539.50 L152.55 541.61 L153.29 543.71 L154.06 545.81 L154.83 547.90 L155.61 549.99 L156.41 552.07 L157.22 554.15 L158.04 556.23 L158.87 558.29 L159.71 560.36 L160.57 562.42 L161.43 564.47 L162.31 566.52 L163.20 568.56 L164.10 570.60 L165.01 572.64 L165.94 574.67 L166.87 576.70 L167.82 578.72 L168.77 580.74 L169.74 582.75 L170.72 584.76 L171.71 586.77 L172.70 588.77 L173.72 590.77 L174.74 592.77 L175.77 594.76 L176.81 596.75 L177.87 598.73 L178.93 600.71 L180.01 602.68 L181.10 604.65 L182.21 606.61 L183.32 608.57 L184.44 610.52 L185.58 612.47 L186.73 614.42 L187.90 616.35 L189.07 618.29 L190.26 620.21 L191.46 622.14 L192.68 624.05 L193.90 625.96 L195.14 627.87 L196.40 629.77 L197.66 631.66 L198.95 633.54 L200.24 635.42 L201.55 637.30 L202.87 639.17 L204.20 641.03 L205.55 642.88 L206.91 644.73 L208.28 646.58 L209.67 648.42 L211.07 650.25 L212.48 652.08 L213.91 653.90 L215.35 655.72 L216.80 657.53 L218.26 659.34 L219.74 661.14 L221.23 662.94 L222.73 664.73 L224.24 666.52 L225.77 668.30 L227.31 670.08 L228.86 671.85 L230.42 673.62 L232.00 675.38 L233.59 677.15 L235.18 678.90 L236.79 680.66 L238.41 682.41 L240.04 684.16 L241.67 685.91 L243.32 687.66 L244.98 689.40 L246.65 691.14 L248.32 692.89 L250.01 694.63 L251.70 696.37 L253.40 698.11 L255.12 699.84 L256.84 701.58 L258.57 703.31 L260.32 705.04 L262.08 706.77 L263.84 708.49 L265.63 710.20 L267.42 711.91 L269.23 713.62 L271.05 715.32 L272.89 717.01 L274.74 718.70 L276.61 720.38 L278.50 722.05 L280.40 723.71 L282.32 725.36 L284.26 727.00 L286.21 728.64 L288.19 730.26 L290.18 731.87 L292.19 733.47 L294.23 735.06 L296.28 736.63 L298.36 738.19 L300.46 739.74 L302.58 741.28 L304.72 742.80 L306.89 744.30 L309.08 745.79 L311.30 747.26 L313.54 748.72 L315.80 750.16 L318.10 751.58 L320.42 752.99 L322.76 754.38"/><path d="M269.43 32.13 L267.71 35.80 L266.00 39.45 L264.31 43.09 L262.64 46.72 L260.98 50.34 L259.33 53.95 L257.71 57.55 L256.10 61.14 L254.50 64.71 L252.92 68.27 L251.36 71.83 L249.81 75.37 L248.28 78.90 L246.77 82.41 L245.27 85.92 L243.78 89.42 L242.32 92.90 L240.86 96.38 L239.43 99.84 L238.00 103.29 L236.60 106.73 L235.21 110.16 L233.84 113.58 L232.48 116.99 L231.13 120.39 L229.81 123.77 L228.49 127.15 L227.20 130.51 L225.92 133.87 L224.65 137.21 L223.40 140.55 L222.16 143.87 L220.95 147.18 L219.74 150.48 L218.55 153.78 L217.38 157.06 L216.22 160.33 L215.08 163.59 L213.95 166.84 L212.84 170.08 L211.74 173.31 L210.66 176.52 L209.59 179.73 L208.54 182.93 L207.50 186.12 L206.48 189.30 L205.47 192.47 L204.48 195.63 L203.51 198.77 L202.55 201.91 L201.60 205.04 L200.67 208.16 L199.75 211.27 L198.85 214.37 L197.96 217.46 L197.09 220.53 L196.23 223.60 L195.39 226.66 L194.56 229.71 L193.75 232.75 L192.95 235.78 L192.17 238.81 L191.40 241.82 L190.65 244.82 L189.91 247.81 L189.19 250.80 L188.48 253.77 L187.78 256.73 L187.10 259.69 L186.43 262.64 L185.78 265.57 L185.15 268.50 L184.52 271.42 L183.92 274.33 L183.32 277.23 L182.74 280.12 L182.18 283.00 L181.63 285.87 L181.09 288.73 L180.57 291.59 L180.07 294.43 L179.57 297.27 L179.10 300.10 L178.63 302.92 L178.18 305.73 L177.75 308.53 L177.33 311.32 L176.92 314.11 L176.53 316.88 L176.15 319.65 L175.78 322.41 L175.43 325.16 L175.10 327.90 L174.77 330.63 L174.47 333.35 L174.17 336.07 L173.89 338.78 L173.63 341.48 L173.37 344.17 L173.14 346.85 L172.91 349.52 L172.70 352.19 L172.51 354.84 L172.32 357.49 L172.15 360.13 L172.00 362.77 L171.86 365.39 L171.73 368.01 L171.62 370.62 L171.52 373.22 L171.43 375.81 L171.36 378.40 L171.30 380.97 L171.26 383.54 L171.23 386.10 L171.21 388.66 L171.20 391.20 L171.21 393.74 L171.24 396.27 L171.28 398.80 L171.33 401.31 L171.39 403.82 L171.47 406.32 L171.56 408.81 L171.66 411.30 L171.78 413.77 L171.91 416.24 L172.06 418.71 L172.21 421.16 L172.39 423.61 L172.57 426.05 L172.77 428.49 L172.98 430.91 L173.21 433.33 L173.44 435.74 L173.70 438.15 L173.96 440.55 L174.24 442.94 L174.53 445.32 L174.83 447.70 L175.15 450.07 L175.48 452.43 L175.82 454.79 L176.18 457.14 L176.55 459.48 L176.93 461.82 L177.33 464.14 L177.74 466.47 L178.16 468.78 L178.60 471.09 L179.04 473.39 L179.51 475.69 L179.98 477.98 L180.47 480.26 L180.97 482.53 L181.48 484.80 L182.01 487.07 L182.55 489.32 L183.10 491.57 L183.66 493.82 L184.24 496.05 L184.83 498.28 L185.43 500.51 L186.05 502.73 L186.68 504.94 L187.32 507.14 L187.98 509.34 L188.64 511.54 L189.32 513.72 L190.02 515.90 L190.72 518.08 L191.44 520.25 L192.17 522.41 L192.92 524.57 L193.68 526.72 L194.44 528.86 L195.23 531.00 L196.02 533.13 L196.83 535.26 L197.65 537.38 L198.48 539.50 L199.33 541.61 L200.18 543.71 L201.05 545.81 L201.94 547.90 L202.83 549.99 L203.74 552.07 L204.65 554.15 L205.58 556.23 L206.53 558.29 L207.48 560.36 L208.45 562.42 L209.42 564.47 L210.41 566.52 L211.41 568.56 L212.42 570.60 L213.45 572.64 L214.48 574.67 L215.53 576.70 L216.59 578.72 L217.66 580.74 L218.74 582.75 L219.83 584.76 L220.93 586.77 L222.04 588.77 L223.17 590.77 L224.31 592.77 L225.45 594.76 L226.61 596.75 L227.78 598.73 L228.96 600.71 L230.16 602.68 L231.37 604.65 L232.58 606.61 L233.81 608.57 L235.06 610.52 L236.31 612.47 L237.58 614.42 L238.86 616.35 L240.16 618.29 L241.46 620.21 L242.78 622.14 L244.12 624.05 L245.46 625.96 L246.82 627.87 L248.20 629.77 L249.58 631.66 L250.98 633.54 L252.40 635.42 L253.83 637.30 L255.27 639.17 L256.72 641.03 L258.19 642.88 L259.68 644.73 L261.17 646.58 L262.68 648.42 L264.20 650.25 L265.74 652.08 L267.29 653.90 L268.85 655.72 L270.43 657.53 L272.01 659.34 L273.62 661.14 L275.23 662.94 L276.86 664.73 L278.50 666.52 L280.15 668.30 L281.82 670.08 L283.49 671.85 L285.18 673.62 L286.88 675.38 L288.60 677.15 L290.32 678.90 L292.06 680.66 L293.80 682.41 L295.56 684.16 L297.33 685.91 L299.10 687.66 L300.89 689.40 L302.69 691.14 L304.49 692.89 L306.31 694.63 L308.13 696.37 L309.97 698.11 L311.81 699.84 L313.66 701.58 L315.53 703.31 L317.41 705.04 L319.30 706.77 L321.20 708.49 L323.11 710.20 L325.04 711.91 L326.98 713.62 L328.94 715.32 L330.91 717.01 L332.90 718.70 L334.90 720.38 L336.92 722.05 L338.96 723.71 L341.01 725.36 L343.09 727.00 L345.18 728.64 L347.29 730.26 L349.42 731.87 L351.57 733.47 L353.74 735.06 L355.94 736.63 L358.15 738.19 L360.39 739.74 L362.65 741.28 L364.93 742.80 L367.24 744.30 L369.57 745.79 L371.93 747.26 L374.31 748.72 L376.72 750.16 L379.15 751.58 L381.61 752.99 L384.10 754.38"/><path d="M300.13 32.13 L298.47 35.80 L296.84 39.45 L295.22 43.09 L293.62 46.72 L292.03 50.34 L290.46 53.95 L288.91 57.55 L287.37 61.14 L285.84 64.71 L284.34 68.27 L282.85 71.83 L281.37 75.37 L279.92 78.90 L278.47 82.41 L277.05 85.92 L275.64 89.42 L274.24 92.90 L272.86 96.38 L271.50 99.84 L270.16 103.29 L268.82 106.73 L267.51 110.16 L266.21 113.58 L264.93 116.99 L263.66 120.39 L262.41 123.77 L261.17 127.15 L259.95 130.51 L258.74 133.87 L257.55 137.21 L256.38 140.55 L255.22 143.87 L254.08 147.18 L252.95 150.48 L251.84 153.78 L250.74 157.06 L249.66 160.33 L248.60 163.59 L247.55 166.84 L246.51 170.08 L245.49 173.31 L244.49 176.52 L243.50 179.73 L242.53 182.93 L241.57 186.12 L240.63 189.30 L239.70 192.47 L238.79 195.63 L237.89 198.77 L237.01 201.91 L236.14 205.04 L235.29 208.16 L234.45 211.27 L233.63 214.37 L232.83 217.46 L232.04 220.53 L231.26 223.60 L230.50 226.66 L229.75 229.71 L229.02 232.75 L228.31 235.78 L227.60 238.81 L226.92 241.82 L226.25 244.82 L225.59 247.81 L224.95 250.80 L224.32 253.77 L223.71 256.73 L223.11 259.69 L222.53 262.64 L221.96 265.57 L221.41 268.50 L220.87 271.42 L220.35 274.33 L219.84 277.23 L219.35 280.12 L218.87 283.00 L218.40 285.87 L217.95 288.73 L217.51 291.59 L217.09 294.43 L216.69 297.27 L216.29 300.10 L215.92 302.92 L215.55 305.73 L215.21 308.53 L214.87 311.32 L214.55 314.11 L214.25 316.88 L213.95 319.65 L213.68 322.41 L213.41 325.16 L213.17 327.90 L212.93 330.63 L212.71 333.35 L212.51 336.07 L212.32 338.78 L212.14 341.48 L211.98 344.17 L211.83 346.85 L211.69 349.52 L211.57 352.19 L211.47 354.84 L211.37 357.49 L211.30 360.13 L211.23 362.77 L211.18 365.39 L211.15 368.01 L211.12 370.62 L211.12 373.22 L211.12 375.81 L211.14 378.40 L211.18 380.97 L211.22 383.54 L211.29 386.10 L211.36 388.66 L211.45 391.20 L211.55 393.74 L211.67 396.27 L211.80 398.80 L211.95 401.31 L212.10 403.82 L212.28 406.32 L212.46 408.81 L212.66 411.30 L212.87 413.77 L213.10 416.24 L213.34 418.71 L213.59 421.16 L213.86 423.61 L214.14 426.05 L214.44 428.49 L214.75 430.91 L215.07 433.33 L215.40 435.74 L215.75 438.15 L216.11 440.55 L216.49 442.94 L216.88 445.32 L217.28 447.70 L217.70 450.07 L218.12 452.43 L218.57 454.79 L219.02 457.14 L219.49 459.48 L219.97 461.82 L220.47 464.14 L220.98 466.47 L221.50 468.78 L222.04 471.09 L222.59 473.39 L223.15 475.69 L223.72 477.98 L224.31 480.26 L224.91 482.53 L225.53 484.80 L226.16 487.07 L226.80 489.32 L227.45 491.57 L228.12 493.82 L228.80 496.05 L229.50 498.28 L230.20 500.51 L230.92 502.73 L231.66 504.94 L232.40 507.14 L233.16 509.34 L233.93 511.54 L234.72 513.72 L235.52 515.90 L236.33 518.08 L237.15 520.25 L237.99 522.41 L238.84 524.57 L239.70 526.72 L240.58 528.86 L241.47 531.00 L242.37 533.13 L243.29 535.26 L244.21 537.38 L245.16 539.50 L246.11 541.61 L247.07 543.71 L248.05 545.81 L249.04 547.90 L250.05 549.99 L251.06 552.07 L252.09 554.15 L253.13 556.23 L254.18 558.29 L255.25 560.36 L256.32 562.42 L257.41 564.47 L258.51 566.52 L259.62 568.56 L260.75 570.60 L261.88 572.64 L263.03 574.67 L264.19 576.70 L265.36 578.72 L266.54 580.74 L267.74 582.75 L268.94 584.76 L270.16 586.77 L271.38 588.77 L272.62 590.77 L273.87 592.77 L275.14 594.76 L276.41 596.75 L277.70 598.73 L278.99 600.71 L280.31 602.68 L281.63 604.65 L282.96 606.61 L284.31 608.57 L285.67 610.52 L287.04 612.47 L288.43 614.42 L289.83 616.35 L291.24 618.29 L292.66 620.21 L294.10 622.14 L295.56 624.05 L297.02 625.96 L298.50 627.87 L299.99 629.77 L301.50 631.66 L303.02 633.54 L304.56 635.42 L306.11 637.30 L307.67 639.17 L309.25 641.03 L310.84 642.88 L312.44 644.73 L314.06 646.58 L315.69 648.42 L317.34 650.25 L319.00 652.08 L320.67 653.90 L322.35 655.72 L324.05 657.53 L325.77 659.34 L327.49 661.14 L329.23 662.94 L330.98 664.73 L332.75 666.52 L334.53 668.30 L336.32 670.08 L338.12 671.85 L339.94 673.62 L341.77 675.38 L343.61 677.15 L345.46 678.90 L347.32 680.66 L349.20 682.41 L351.08 684.16 L352.98 685.91 L354.88 687.66 L356.80 689.40 L358.73 691.14 L360.66 692.89 L362.61 694.63 L364.56 696.37 L366.53 698.11 L368.50 699.84 L370.49 701.58 L372.49 703.31 L374.49 705.04 L376.52 706.77 L378.55 708.49 L380.60 710.20 L382.66 711.91 L384.73 713.62 L386.82 715.32 L388.93 717.01 L391.05 718.70 L393.19 720.38 L395.35 722.05 L397.52 723.71 L399.71 725.36 L401.92 727.00 L404.15 728.64 L406.40 730.26 L408.66 731.87 L410.95 733.47 L413.26 735.06 L415.59 736.63 L417.95 738.19 L420.32 739.74 L422.72 741.28 L425.14 742.80 L427.59 744.30 L430.06 745.79 L432.56 747.26 L435.08 748.72 L437.63 750.16 L440.20 751.58 L442.80 752.99 L445.43 754.38"/><path d="M330.82 32.13 L329.24 35.80 L327.68 39.45 L326.13 43.09 L324.60 46.72 L323.08 50.34 L321.58 53.95 L320.10 57.55 L318.64 61.14 L317.19 64.71 L315.75 68.27 L314.34 71.83 L312.93 75.37 L311.55 78.90 L310.18 82.41 L308.83 85.92 L307.49 89.42 L306.17 92.90 L304.87 96.38 L303.58 99.84 L302.31 103.29 L301.05 106.73 L299.81 110.16 L298.58 113.58 L297.38 116.99 L296.18 120.39 L295.01 123.77 L293.85 127.15 L292.70 130.51 L291.57 133.87 L290.46 137.21 L289.36 140.55 L288.28 143.87 L287.21 147.18 L286.16 150.48 L285.13 153.78 L284.11 157.06 L283.10 160.33 L282.12 163.59 L281.14 166.84 L280.19 170.08 L279.25 173.31 L278.32 176.52 L277.41 179.73 L276.51 182.93 L275.64 186.12 L274.77 189.30 L273.92 192.47 L273.09 195.63 L272.27 198.77 L271.47 201.91 L270.68 205.04 L269.91 208.16 L269.16 211.27 L268.42 214.37 L267.69 217.46 L266.98 220.53 L266.29 223.60 L265.61 226.66 L264.94 229.71 L264.29 232.75 L263.66 235.78 L263.04 238.81 L262.43 241.82 L261.85 244.82 L261.27 247.81 L260.71 250.80 L260.17 253.77 L259.64 256.73 L259.13 259.69 L258.63 262.64 L258.14 265.57 L257.67 268.50 L257.22 271.42 L256.78 274.33 L256.36 277.23 L255.95 280.12 L255.55 283.00 L255.17 285.87 L254.81 288.73 L254.46 291.59 L254.12 294.43 L253.80 297.27 L253.49 300.10 L253.20 302.92 L252.93 305.73 L252.66 308.53 L252.42 311.32 L252.18 314.11 L251.96 316.88 L251.76 319.65 L251.57 322.41 L251.40 325.16 L251.24 327.90 L251.09 330.63 L250.96 333.35 L250.84 336.07 L250.74 338.78 L250.65 341.48 L250.58 344.17 L250.52 346.85 L250.48 349.52 L250.45 352.19 L250.43 354.84 L250.43 357.49 L250.44 360.13 L250.47 362.77 L250.51 365.39 L250.56 368.01 L250.63 370.62 L250.72 373.22 L250.81 375.81 L250.93 378.40 L251.05 380.97 L251.19 383.54 L251.35 386.10 L251.51 388.66 L251.70 391.20 L251.89 393.74 L252.10 396.27 L252.33 398.80 L252.57 401.31 L252.82 403.82 L253.08 406.32 L253.36 408.81 L253.66 411.30 L253.97 413.77 L254.29 416.24 L254.62 418.71 L254.97 421.16 L255.34 423.61 L255.71 426.05 L256.11 428.49 L256.51 430.91 L256.93 433.33 L257.36 435.74 L257.81 438.15 L258.27 440.55 L258.74 442.94 L259.23 445.32 L259.73 447.70 L260.24 450.07 L260.77 452.43 L261.31 454.79 L261.86 457.14 L262.43 459.48 L263.01 461.82 L263.61 464.14 L264.22 466.47 L264.84 468.78 L265.48 471.09 L266.13 473.39 L266.79 475.69 L267.47 477.98 L268.16 480.26 L268.86 482.53 L269.58 484.80 L270.31 487.07 L271.05 489.32 L271.81 491.57 L272.58 493.82 L273.36 496.05 L274.16 498.28 L274.97 500.51 L275.79 502.73 L276.63 504.94 L277.48 507.14 L278.35 509.34 L279.22 511.54 L280.11 513.72 L281.02 515.90 L281.93 518.08 L282.86 520.25 L283.81 522.41 L284.76 524.57 L285.73 526.72 L286.72 528.86 L287.71 531.00 L288.72 533.13 L289.74 535.26 L290.78 537.38 L291.83 539.50 L292.89 541.61 L293.96 543.71 L295.05 545.81 L296.15 547.90 L297.26 549.99 L298.39 552.07 L299.53 554.15 L300.68 556.23 L301.84 558.29 L303.01 560.36 L304.20 562.42 L305.40 564.47 L306.61 566.52 L307.83 568.56 L309.07 570.60 L310.32 572.64 L311.58 574.67 L312.85 576.70 L314.13 578.72 L315.43 580.74 L316.73 582.75 L318.05 584.76 L319.38 586.77 L320.72 588.77 L322.08 590.77 L323.44 592.77 L324.82 594.76 L326.21 596.75 L327.61 598.73 L329.02 600.71 L330.45 602.68 L331.89 604.65 L333.34 606.61 L334.81 608.57 L336.28 610.52 L337.77 612.47 L339.28 614.42 L340.79 616.35 L342.32 618.29 L343.87 620.21 L345.42 622.14 L346.99 624.05 L348.58 625.96 L350.18 627.87 L351.79 629.77 L353.42 631.66 L355.06 633.54 L356.72 635.42 L358.39 637.30 L360.07 639.17 L361.77 641.03 L363.48 642.88 L365.21 644.73 L366.95 646.58 L368.70 648.42 L370.47 650.25 L372.25 652.08 L374.05 653.90 L375.86 655.72 L377.68 657.53 L379.52 659.34 L381.37 661.14 L383.23 662.94 L385.11 664.73 L387.00 666.52 L388.91 668.30 L390.82 670.08 L392.75 671.85 L394.70 673.62 L396.65 675.38 L398.62 677.15 L400.60 678.90 L402.59 680.66 L404.59 682.41 L406.61 684.16 L408.63 685.91 L410.67 687.66 L412.71 689.40 L414.77 691.14 L416.83 692.89 L418.91 694.63 L420.99 696.37 L423.09 698.11 L425.19 699.84 L427.31 701.58 L429.44 703.31 L431.58 705.04 L433.74 706.77 L435.90 708.49 L438.08 710.20 L440.28 711.91 L442.49 713.62 L444.71 715.32 L446.95 717.01 L449.21 718.70 L451.48 720.38 L453.77 722.05 L456.08 723.71 L458.41 725.36 L460.75 727.00 L463.12 728.64 L465.50 730.26 L467.91 731.87 L470.33 733.47 L472.78 735.06 L475.25 736.63 L477.74 738.19 L480.25 739.74 L482.79 741.28 L485.35 742.80 L487.94 744.30 L490.55 745.79 L493.19 747.26 L495.85 748.72 L498.54 750.16 L501.25 751.58 L504.00 752.99 L506.77 754.38"/><path d="M361.52 32.13 L360.01 35.80 L358.52 39.45 L357.04 43.09 L355.58 46.72 L354.14 50.34 L352.71 53.95 L351.30 57.55 L349.91 61.14 L348.53 64.71 L347.17 68.27 L345.82 71.83 L344.50 75.37 L343.18 78.90 L341.89 82.41 L340.61 85.92 L339.35 89.42 L338.10 92.90 L336.87 96.38 L335.65 99.84 L334.46 103.29 L333.27 106.73 L332.11 110.16 L330.96 113.58 L329.83 116.99 L328.71 120.39 L327.61 123.77 L326.52 127.15 L325.45 130.51 L324.40 133.87 L323.36 137.21 L322.34 140.55 L321.33 143.87 L320.34 147.18 L319.37 150.48 L318.41 153.78 L317.47 157.06 L316.54 160.33 L315.63 163.59 L314.74 166.84 L313.86 170.08 L313.00 173.31 L312.15 176.52 L311.32 179.73 L310.50 182.93 L309.70 186.12 L308.92 189.30 L308.15 192.47 L307.39 195.63 L306.66 198.77 L305.93 201.91 L305.23 205.04 L304.54 208.16 L303.86 211.27 L303.20 214.37 L302.56 217.46 L301.93 220.53 L301.31 223.60 L300.71 226.66 L300.13 229.71 L299.56 232.75 L299.01 235.78 L298.47 238.81 L297.95 241.82 L297.44 244.82 L296.95 247.81 L296.48 250.80 L296.01 253.77 L295.57 256.73 L295.14 259.69 L294.72 262.64 L294.32 265.57 L293.94 268.50 L293.57 271.42 L293.21 274.33 L292.87 277.23 L292.55 280.12 L292.24 283.00 L291.94 285.87 L291.66 288.73 L291.40 291.59 L291.15 294.43 L290.91 297.27 L290.69 300.10 L290.49 302.92 L290.30 305.73 L290.12 308.53 L289.96 311.32 L289.82 314.11 L289.68 316.88 L289.57 319.65 L289.47 322.41 L289.38 325.16 L289.31 327.90 L289.25 330.63 L289.21 333.35 L289.18 336.07 L289.17 338.78 L289.17 341.48 L289.18 344.17 L289.21 346.85 L289.26 349.52 L289.32 352.19 L289.39 354.84 L289.48 357.49 L289.58 360.13 L289.70 362.77 L289.83 365.39 L289.98 368.01 L290.14 370.62 L290.31 373.22 L290.50 375.81 L290.71 378.40 L290.93 380.97 L291.16 383.54 L291.41 386.10 L291.67 388.66 L291.94 391.20 L292.23 393.74 L292.54 396.27 L292.85 398.80 L293.19 401.31 L293.53 403.82 L293.89 406.32 L294.27 408.81 L294.66 411.30 L295.06 413.77 L295.48 416.24 L295.91 418.71 L296.35 421.16 L296.81 423.61 L297.29 426.05 L297.77 428.49 L298.27 430.91 L298.79 433.33 L299.32 435.74 L299.86 438.15 L300.42 440.55 L300.99 442.94 L301.57 445.32 L302.17 447.70 L302.79 450.07 L303.41 452.43 L304.05 454.79 L304.71 457.14 L305.37 459.48 L306.06 461.82 L306.75 464.14 L307.46 466.47 L308.18 468.78 L308.92 471.09 L309.67 473.39 L310.43 475.69 L311.21 477.98 L312.00 480.26 L312.81 482.53 L313.63 484.80 L314.46 487.07 L315.30 489.32 L316.16 491.57 L317.04 493.82 L317.92 496.05 L318.82 498.28 L319.74 500.51 L320.67 502.73 L321.61 504.94 L322.56 507.14 L323.53 509.34 L324.51 511.54 L325.51 513.72 L326.52 515.90 L327.54 518.08 L328.57 520.25 L329.62 522.41 L330.69 524.57 L331.76 526.72 L332.85 528.86 L333.96 531.00 L335.07 533.13 L336.20 535.26 L337.35 537.38 L338.50 539.50 L339.67 541.61 L340.85 543.71 L342.05 545.81 L343.26 547.90 L344.48 549.99 L345.71 552.07 L346.96 554.15 L348.22 556.23 L349.49 558.29 L350.78 560.36 L352.08 562.42 L353.39 564.47 L354.71 566.52 L356.04 568.56 L357.39 570.60 L358.75 572.64 L360.12 574.67 L361.51 576.70 L362.90 578.72 L364.31 580.74 L365.73 582.75 L367.16 584.76 L368.61 586.77 L370.06 588.77 L371.53 590.77 L373.01 592.77 L374.50 594.76 L376.01 596.75 L377.53 598.73 L379.05 600.71 L380.60 602.68 L382.15 604.65 L383.72 606.61 L385.30 608.57 L386.90 610.52 L388.50 612.47 L390.12 614.42 L391.76 616.35 L393.41 618.29 L395.07 620.21 L396.74 622.14 L398.43 624.05 L400.14 625.96 L401.86 627.87 L403.59 629.77 L405.34 631.66 L407.10 633.54 L408.88 635.42 L410.67 637.30 L412.47 639.17 L414.29 641.03 L416.13 642.88 L417.97 644.73 L419.84 646.58 L421.71 648.42 L423.61 650.25 L425.51 652.08 L427.43 653.90 L429.36 655.72 L431.31 657.53 L433.27 659.34 L435.25 661.14 L437.24 662.94 L439.24 664.73 L441.26 666.52 L443.29 668.30 L445.33 670.08 L447.39 671.85 L449.45 673.62 L451.54 675.38 L453.63 677.15 L455.74 678.90 L457.86 680.66 L459.99 682.41 L462.13 684.16 L464.28 685.91 L466.45 687.66 L468.62 689.40 L470.81 691.14 L473.00 692.89 L475.21 694.63 L477.42 696.37 L479.65 698.11 L481.89 699.84 L484.14 701.58 L486.40 703.31 L488.67 705.04 L490.96 706.77 L493.25 708.49 L495.57 710.20 L497.90 711.91 L500.24 713.62 L502.60 715.32 L504.97 717.01 L507.36 718.70 L509.77 720.38 L512.20 722.05 L514.64 723.71 L517.10 725.36 L519.58 727.00 L522.08 728.64 L524.61 730.26 L527.15 731.87 L529.71 733.47 L532.30 735.06 L534.90 736.63 L537.53 738.19 L540.18 739.74 L542.86 741.28 L545.56 742.80 L548.29 744.30 L551.04 745.79 L553.82 747.26 L556.62 748.72 L559.45 750.16 L562.31 751.58 L565.19 752.99 L568.10 754.38"/><path d="M392.21 32.13 L390.78 35.80 L389.35 39.45 L387.95 43.09 L386.56 46.72 L385.19 50.34 L383.84 53.95 L382.50 57.55 L381.18 61.14 L379.87 64.71 L378.58 68.27 L377.31 71.83 L376.06 75.37 L374.82 78.90 L373.60 82.41 L372.39 85.92 L371.20 89.42 L370.03 92.90 L368.87 96.38 L367.73 99.84 L366.61 103.29 L365.50 106.73 L364.41 110.16 L363.33 113.58 L362.28 116.99 L361.23 120.39 L360.21 123.77 L359.20 127.15 L358.20 130.51 L357.23 133.87 L356.26 137.21 L355.32 140.55 L354.39 143.87 L353.48 147.18 L352.58 150.48 L351.70 153.78 L350.83 157.06 L349.99 160.33 L349.15 163.59 L348.34 166.84 L347.53 170.08 L346.75 173.31 L345.98 176.52 L345.23 179.73 L344.49 182.93 L343.77 186.12 L343.06 189.30 L342.37 192.47 L341.70 195.63 L341.04 198.77 L340.40 201.91 L339.77 205.04 L339.16 208.16 L338.56 211.27 L337.98 214.37 L337.42 217.46 L336.87 220.53 L336.34 223.60 L335.82 226.66 L335.32 229.71 L334.83 232.75 L334.36 235.78 L333.91 238.81 L333.47 241.82 L333.04 244.82 L332.63 247.81 L332.24 250.80 L331.86 253.77 L331.50 256.73 L331.15 259.69 L330.82 262.64 L330.50 265.57 L330.20 268.50 L329.92 271.42 L329.64 274.33 L329.39 277.23 L329.15 280.12 L328.92 283.00 L328.71 285.87 L328.52 288.73 L328.34 291.59 L328.18 294.43 L328.03 297.27 L327.89 300.10 L327.77 302.92 L327.67 305.73 L327.58 308.53 L327.51 311.32 L327.45 314.11 L327.40 316.88 L327.37 319.65 L327.36 322.41 L327.36 325.16 L327.38 327.90 L327.41 330.63 L327.45 333.35 L327.51 336.07 L327.59 338.78 L327.68 341.48 L327.79 344.17 L327.91 346.85 L328.04 349.52 L328.19 352.19 L328.35 354.84 L328.53 357.49 L328.73 360.13 L328.93 362.77 L329.16 365.39 L329.39 368.01 L329.65 370.62 L329.91 373.22 L330.19 375.81 L330.49 378.40 L330.80 380.97 L331.13 383.54 L331.46 386.10 L331.82 388.66 L332.19 391.20 L332.57 393.74 L332.97 396.27 L333.38 398.80 L333.81 401.31 L334.25 403.82 L334.70 406.32 L335.17 408.81 L335.65 411.30 L336.15 413.77 L336.66 416.24 L337.19 418.71 L337.73 421.16 L338.29 423.61 L338.86 426.05 L339.44 428.49 L340.04 430.91 L340.65 433.33 L341.28 435.74 L341.92 438.15 L342.57 440.55 L343.24 442.94 L343.92 445.32 L344.62 447.70 L345.33 450.07 L346.06 452.43 L346.79 454.79 L347.55 457.14 L348.31 459.48 L349.10 461.82 L349.89 464.14 L350.70 466.47 L351.52 468.78 L352.36 471.09 L353.21 473.39 L354.08 475.69 L354.95 477.98 L355.85 480.26 L356.75 482.53 L357.67 484.80 L358.61 487.07 L359.56 489.32 L360.52 491.57 L361.50 493.82 L362.49 496.05 L363.49 498.28 L364.51 500.51 L365.54 502.73 L366.58 504.94 L367.64 507.14 L368.72 509.34 L369.80 511.54 L370.90 513.72 L372.02 515.90 L373.14 518.08 L374.29 520.25 L375.44 522.41 L376.61 524.57 L377.79 526.72 L378.99 528.86 L380.20 531.00 L381.42 533.13 L382.66 535.26 L383.91 537.38 L385.17 539.50 L386.45 541.61 L387.74 543.71 L389.05 545.81 L390.37 547.90 L391.70 549.99 L393.04 552.07 L394.40 554.15 L395.77 556.23 L397.15 558.29 L398.54 560.36 L399.95 562.42 L401.37 564.47 L402.81 566.52 L404.26 568.56 L405.71 570.60 L407.19 572.64 L408.67 574.67 L410.17 576.70 L411.68 578.72 L413.20 580.74 L414.73 582.75 L416.28 584.76 L417.83 586.77 L419.40 588.77 L420.99 590.77 L422.58 592.77 L424.19 594.76 L425.81 596.75 L427.44 598.73 L429.08 600.71 L430.74 602.68 L432.41 604.65 L434.10 606.61 L435.80 608.57 L437.51 610.52 L439.23 612.47 L440.97 614.42 L442.72 616.35 L444.49 618.29 L446.27 620.21 L448.06 622.14 L449.87 624.05 L451.70 625.96 L453.53 627.87 L455.39 629.77 L457.25 631.66 L459.14 633.54 L461.03 635.42 L462.95 637.30 L464.87 639.17 L466.81 641.03 L468.77 642.88 L470.74 644.73 L472.73 646.58 L474.73 648.42 L476.74 650.25 L478.77 652.08 L480.81 653.90 L482.87 655.72 L484.94 657.53 L487.02 659.34 L489.12 661.14 L491.24 662.94 L493.37 664.73 L495.51 666.52 L497.66 668.30 L499.83 670.08 L502.02 671.85 L504.21 673.62 L506.42 675.38 L508.64 677.15 L510.88 678.90 L513.12 680.66 L515.38 682.41 L517.65 684.16 L519.93 685.91 L522.23 687.66 L524.53 689.40 L526.85 691.14 L529.17 692.89 L531.51 694.63 L533.85 696.37 L536.21 698.11 L538.58 699.84 L540.96 701.58 L543.35 703.31 L545.76 705.04 L548.17 706.77 L550.61 708.49 L553.05 710.20 L555.51 711.91 L557.99 713.62 L560.48 715.32 L562.99 717.01 L565.52 718.70 L568.06 720.38 L570.62 722.05 L573.20 723.71 L575.80 725.36 L578.42 727.00 L581.05 728.64 L583.71 730.26 L586.39 731.87 L589.09 733.47 L591.81 735.06 L594.56 736.63 L597.32 738.19 L600.12 739.74 L602.93 741.28 L605.77 742.80 L608.64 744.30 L611.53 745.79 L614.44 747.26 L617.39 748.72 L620.36 750.16 L623.36 751.58 L626.38 752.99 L629.44 754.38"/><path d="M422.91 32.13 L421.54 35.80 L420.19 39.45 L418.86 43.09 L417.54 46.72 L416.24 50.34 L414.96 53.95 L413.69 57.55 L412.45 61.14 L411.21 64.71 L410.00 68.27 L408.80 71.83 L407.62 75.37 L406.45 78.90 L405.30 82.41 L404.17 85.92 L403.05 89.42 L401.96 92.90 L400.87 96.38 L399.81 99.84 L398.76 103.29 L397.73 106.73 L396.71 110.16 L395.71 113.58 L394.73 116.99 L393.76 120.39 L392.81 123.77 L391.87 127.15 L390.96 130.51 L390.05 133.87 L389.17 137.21 L388.30 140.55 L387.45 143.87 L386.61 147.18 L385.79 150.48 L384.99 153.78 L384.20 157.06 L383.43 160.33 L382.67 163.59 L381.93 166.84 L381.21 170.08 L380.50 173.31 L379.81 176.52 L379.14 179.73 L378.48 182.93 L377.83 186.12 L377.21 189.30 L376.60 192.47 L376.00 195.63 L375.42 198.77 L374.86 201.91 L374.31 205.04 L373.78 208.16 L373.27 211.27 L372.77 214.37 L372.28 217.46 L371.82 220.53 L371.36 223.60 L370.93 226.66 L370.51 229.71 L370.10 232.75 L369.71 235.78 L369.34 238.81 L368.98 241.82 L368.64 244.82 L368.31 247.81 L368.00 250.80 L367.71 253.77 L367.43 256.73 L367.16 259.69 L366.92 262.64 L366.68 265.57 L366.47 268.50 L366.26 271.42 L366.08 274.33 L365.91 277.23 L365.75 280.12 L365.61 283.00 L365.49 285.87 L365.38 288.73 L365.28 291.59 L365.20 294.43 L365.14 297.27 L365.09 300.10 L365.06 302.92 L365.04 305.73 L365.04 308.53 L365.05 311.32 L365.08 314.11 L365.12 316.88 L365.18 319.65 L365.26 322.41 L365.34 325.16 L365.45 327.90 L365.57 330.63 L365.70 333.35 L365.85 336.07 L366.01 338.78 L366.19 341.48 L366.39 344.17 L366.60 346.85 L366.82 349.52 L367.06 352.19 L367.32 354.84 L367.58 357.49 L367.87 360.13 L368.17 362.77 L368.48 365.39 L368.81 368.01 L369.15 370.62 L369.51 373.22 L369.88 375.81 L370.27 378.40 L370.68 380.97 L371.09 383.54 L371.52 386.10 L371.97 388.66 L372.43 391.20 L372.91 393.74 L373.40 396.27 L373.91 398.80 L374.43 401.31 L374.96 403.82 L375.51 406.32 L376.07 408.81 L376.65 411.30 L377.25 413.77 L377.85 416.24 L378.48 418.71 L379.11 421.16 L379.76 423.61 L380.43 426.05 L381.11 428.49 L381.80 430.91 L382.51 433.33 L383.23 435.74 L383.97 438.15 L384.72 440.55 L385.49 442.94 L386.27 445.32 L387.07 447.70 L387.88 450.07 L388.70 452.43 L389.54 454.79 L390.39 457.14 L391.26 459.48 L392.14 461.82 L393.03 464.14 L393.94 466.47 L394.86 468.78 L395.80 471.09 L396.75 473.39 L397.72 475.69 L398.70 477.98 L399.69 480.26 L400.70 482.53 L401.72 484.80 L402.76 487.07 L403.81 489.32 L404.88 491.57 L405.95 493.82 L407.05 496.05 L408.15 498.28 L409.28 500.51 L410.41 502.73 L411.56 504.94 L412.72 507.14 L413.90 509.34 L415.09 511.54 L416.30 513.72 L417.52 515.90 L418.75 518.08 L420.00 520.25 L421.26 522.41 L422.53 524.57 L423.82 526.72 L425.12 528.86 L426.44 531.00 L427.77 533.13 L429.12 535.26 L430.48 537.38 L431.85 539.50 L433.23 541.61 L434.63 543.71 L436.05 545.81 L437.47 547.90 L438.91 549.99 L440.37 552.07 L441.83 554.15 L443.31 556.23 L444.81 558.29 L446.31 560.36 L447.83 562.42 L449.36 564.47 L450.91 566.52 L452.47 568.56 L454.04 570.60 L455.62 572.64 L457.22 574.67 L458.83 576.70 L460.45 578.72 L462.08 580.74 L463.73 582.75 L465.39 584.76 L467.06 586.77 L468.74 588.77 L470.44 590.77 L472.15 592.77 L473.87 594.76 L475.61 596.75 L477.35 598.73 L479.11 600.71 L480.89 602.68 L482.68 604.65 L484.48 606.61 L486.29 608.57 L488.12 610.52 L489.96 612.47 L491.82 614.42 L493.69 616.35 L495.57 618.29 L497.47 620.21 L499.38 622.14 L501.31 624.05 L503.26 625.96 L505.21 627.87 L507.19 629.77 L509.17 631.66 L511.18 633.54 L513.19 635.42 L515.23 637.30 L517.27 639.17 L519.34 641.03 L521.41 642.88 L523.51 644.73 L525.61 646.58 L527.74 648.42 L529.87 650.25 L532.02 652.08 L534.19 653.90 L536.37 655.72 L538.57 657.53 L540.78 659.34 L543.00 661.14 L545.24 662.94 L547.49 664.73 L549.76 666.52 L552.04 668.30 L554.34 670.08 L556.65 671.85 L558.97 673.62 L561.31 675.38 L563.65 677.15 L566.02 678.90 L568.39 680.66 L570.78 682.41 L573.18 684.16 L575.59 685.91 L578.01 687.66 L580.44 689.40 L582.89 691.14 L585.34 692.89 L587.81 694.63 L590.29 696.37 L592.77 698.11 L595.27 699.84 L597.78 701.58 L600.31 703.31 L602.84 705.04 L605.39 706.77 L607.96 708.49 L610.54 710.20 L613.13 711.91 L615.74 713.62 L618.37 715.32 L621.01 717.01 L623.67 718.70 L626.35 720.38 L629.05 722.05 L631.76 723.71 L634.49 725.36 L637.25 727.00 L640.02 728.64 L642.82 730.26 L645.63 731.87 L648.47 733.47 L651.33 735.06 L654.21 736.63 L657.12 738.19 L660.05 739.74 L663.00 741.28 L665.98 742.80 L668.99 744.30 L672.02 745.79 L675.07 747.26 L678.16 748.72 L681.27 750.16 L684.41 751.58 L687.58 752.99 L690.77 754.38"/><path d="M453.60 32.13 L452.31 35.80 L451.03 39.45 L449.77 43.09 L448.52 46.72 L447.30 50.34 L446.09 53.95 L444.89 57.55 L443.72 61.14 L442.56 64.71 L441.41 68.27 L440.29 71.83 L439.18 75.37 L438.09 78.90 L437.01 82.41 L435.95 85.92 L434.91 89.42 L433.88 92.90 L432.88 96.38 L431.88 99.84 L430.91 103.29 L429.95 106.73 L429.01 110.16 L428.08 113.58 L427.17 116.99 L426.28 120.39 L425.41 123.77 L424.55 127.15 L423.71 130.51 L422.88 133.87 L422.07 137.21 L421.28 140.55 L420.50 143.87 L419.74 147.18 L419.00 150.48 L418.27 153.78 L417.56 157.06 L416.87 160.33 L416.19 163.59 L415.53 166.84 L414.88 170.08 L414.25 173.31 L413.64 176.52 L413.05 179.73 L412.47 182.93 L411.90 186.12 L411.35 189.30 L410.82 192.47 L410.31 195.63 L409.81 198.77 L409.32 201.91 L408.86 205.04 L408.40 208.16 L407.97 211.27 L407.55 214.37 L407.15 217.46 L406.76 220.53 L406.39 223.60 L406.03 226.66 L405.70 229.71 L405.37 232.75 L405.07 235.78 L404.77 238.81 L404.50 241.82 L404.24 244.82 L403.99 247.81 L403.77 250.80 L403.55 253.77 L403.36 256.73 L403.18 259.69 L403.01 262.64 L402.86 265.57 L402.73 268.50 L402.61 271.42 L402.51 274.33 L402.42 277.23 L402.35 280.12 L402.30 283.00 L402.26 285.87 L402.23 288.73 L402.22 291.59 L402.23 294.43 L402.25 297.27 L402.29 300.10 L402.34 302.92 L402.41 305.73 L402.50 308.53 L402.60 311.32 L402.71 314.11 L402.84 316.88 L402.99 319.65 L403.15 322.41 L403.33 325.16 L403.52 327.90 L403.73 330.63 L403.95 333.35 L404.19 336.07 L404.44 338.78 L404.71 341.48 L404.99 344.17 L405.29 346.85 L405.60 349.52 L405.93 352.19 L406.28 354.84 L406.64 357.49 L407.01 360.13 L407.40 362.77 L407.81 365.39 L408.23 368.01 L408.66 370.62 L409.11 373.22 L409.58 375.81 L410.05 378.40 L410.55 380.97 L411.06 383.54 L411.58 386.10 L412.12 388.66 L412.68 391.20 L413.25 393.74 L413.83 396.27 L414.43 398.80 L415.05 401.31 L415.67 403.82 L416.32 406.32 L416.98 408.81 L417.65 411.30 L418.34 413.77 L419.04 416.24 L419.76 418.71 L420.49 421.16 L421.24 423.61 L422.00 426.05 L422.78 428.49 L423.57 430.91 L424.37 433.33 L425.19 435.74 L426.03 438.15 L426.88 440.55 L427.74 442.94 L428.62 445.32 L429.51 447.70 L430.42 450.07 L431.34 452.43 L432.28 454.79 L433.23 457.14 L434.20 459.48 L435.18 461.82 L436.17 464.14 L437.18 466.47 L438.20 468.78 L439.24 471.09 L440.29 473.39 L441.36 475.69 L442.44 477.98 L443.54 480.26 L444.65 482.53 L445.77 484.80 L446.91 487.07 L448.06 489.32 L449.23 491.57 L450.41 493.82 L451.61 496.05 L452.82 498.28 L454.04 500.51 L455.28 502.73 L456.54 504.94 L457.80 507.14 L459.08 509.34 L460.38 511.54 L461.69 513.72 L463.02 515.90 L464.35 518.08 L465.71 520.25 L467.07 522.41 L468.46 524.57 L469.85 526.72 L471.26 528.86 L472.68 531.00 L474.12 533.13 L475.57 535.26 L477.04 537.38 L478.52 539.50 L480.02 541.61 L481.52 543.71 L483.04 545.81 L484.58 547.90 L486.13 549.99 L487.69 552.07 L489.27 554.15 L490.86 556.23 L492.46 558.29 L494.08 560.36 L495.71 562.42 L497.35 564.47 L499.01 566.52 L500.68 568.56 L502.36 570.60 L504.06 572.64 L505.76 574.67 L507.49 576.70 L509.22 578.72 L510.97 580.74 L512.73 582.75 L514.50 584.76 L516.29 586.77 L518.08 588.77 L519.89 590.77 L521.72 592.77 L523.56 594.76 L525.41 596.75 L527.27 598.73 L529.15 600.71 L531.04 602.68 L532.94 604.65 L534.86 606.61 L536.79 608.57 L538.73 610.52 L540.69 612.47 L542.67 614.42 L544.65 616.35 L546.66 618.29 L548.67 620.21 L550.71 622.14 L552.75 624.05 L554.81 625.96 L556.89 627.87 L558.98 629.77 L561.09 631.66 L563.21 633.54 L565.35 635.42 L567.51 637.30 L569.67 639.17 L571.86 641.03 L574.06 642.88 L576.27 644.73 L578.50 646.58 L580.75 648.42 L583.01 650.25 L585.28 652.08 L587.57 653.90 L589.88 655.72 L592.20 657.53 L594.53 659.34 L596.88 661.14 L599.24 662.94 L601.62 664.73 L604.01 666.52 L606.42 668.30 L608.84 670.08 L611.28 671.85 L613.73 673.62 L616.19 675.38 L618.67 677.15 L621.16 678.90 L623.66 680.66 L626.17 682.41 L628.70 684.16 L631.24 685.91 L633.79 687.66 L636.35 689.40 L638.93 691.14 L641.51 692.89 L644.11 694.63 L646.72 696.37 L649.33 698.11 L651.96 699.84 L654.61 701.58 L657.26 703.31 L659.93 705.04 L662.61 706.77 L665.31 708.49 L668.02 710.20 L670.75 711.91 L673.50 713.62 L676.26 715.32 L679.03 717.01 L681.83 718.70 L684.64 720.38 L687.47 722.05 L690.32 723.71 L693.19 725.36 L696.08 727.00 L698.99 728.64 L701.92 730.26 L704.87 731.87 L707.85 733.47 L710.85 735.06 L713.87 736.63 L716.91 738.19 L719.98 739.74 L723.07 741.28 L726.19 742.80 L729.34 744.30 L732.51 745.79 L735.70 747.26 L738.93 748.72 L742.18 750.16 L745.46 751.58 L748.77 752.99 L752.11 754.38"/><path d="M484.30 32.13 L483.08 35.80 L481.87 39.45 L480.68 43.09 L479.51 46.72 L478.35 50.34 L477.21 53.95 L476.09 57.55 L474.99 61.14 L473.90 64.71 L472.83 68.27 L471.77 71.83 L470.74 75.37 L469.72 78.90 L468.72 82.41 L467.73 85.92 L466.76 89.42 L465.81 92.90 L464.88 96.38 L463.96 99.84 L463.06 103.29 L462.18 106.73 L461.31 110.16 L460.46 113.58 L459.62 116.99 L458.81 120.39 L458.01 123.77 L457.23 127.15 L456.46 130.51 L455.71 133.87 L454.98 137.21 L454.26 140.55 L453.56 143.87 L452.88 147.18 L452.21 150.48 L451.56 153.78 L450.93 157.06 L450.31 160.33 L449.71 163.59 L449.13 166.84 L448.56 170.08 L448.01 173.31 L447.47 176.52 L446.95 179.73 L446.45 182.93 L445.97 186.12 L445.50 189.30 L445.05 192.47 L444.61 195.63 L444.19 198.77 L443.79 201.91 L443.40 205.04 L443.03 208.16 L442.67 211.27 L442.33 214.37 L442.01 217.46 L441.71 220.53 L441.42 223.60 L441.14 226.66 L440.88 229.71 L440.64 232.75 L440.42 235.78 L440.21 238.81 L440.01 241.82 L439.84 244.82 L439.68 247.81 L439.53 250.80 L439.40 253.77 L439.29 256.73 L439.19 259.69 L439.11 262.64 L439.04 265.57 L438.99 268.50 L438.96 271.42 L438.94 274.33 L438.94 277.23 L438.95 280.12 L438.98 283.00 L439.03 285.87 L439.09 288.73 L439.17 291.59 L439.26 294.43 L439.37 297.27 L439.49 300.10 L439.63 302.92 L439.78 305.73 L439.96 308.53 L440.14 311.32 L440.34 314.11 L440.56 316.88 L440.80 319.65 L441.04 322.41 L441.31 325.16 L441.59 327.90 L441.88 330.63 L442.20 333.35 L442.52 336.07 L442.86 338.78 L443.22 341.48 L443.59 344.17 L443.98 346.85 L444.39 349.52 L444.81 352.19 L445.24 354.84 L445.69 357.49 L446.15 360.13 L446.63 362.77 L447.13 365.39 L447.64 368.01 L448.17 370.62 L448.71 373.22 L449.27 375.81 L449.84 378.40 L450.42 380.97 L451.03 383.54 L451.64 386.10 L452.28 388.66 L452.92 391.20 L453.59 393.74 L454.26 396.27 L454.96 398.80 L455.67 401.31 L456.39 403.82 L457.13 406.32 L457.88 408.81 L458.65 411.30 L459.43 413.77 L460.23 416.24 L461.04 418.71 L461.87 421.16 L462.71 423.61 L463.57 426.05 L464.44 428.49 L465.33 430.91 L466.23 433.33 L467.15 435.74 L468.08 438.15 L469.03 440.55 L469.99 442.94 L470.97 445.32 L471.96 447.70 L472.97 450.07 L473.99 452.43 L475.02 454.79 L476.07 457.14 L477.14 459.48 L478.22 461.82 L479.31 464.14 L480.42 466.47 L481.54 468.78 L482.68 471.09 L483.84 473.39 L485.00 475.69 L486.19 477.98 L487.38 480.26 L488.59 482.53 L489.82 484.80 L491.06 487.07 L492.32 489.32 L493.59 491.57 L494.87 493.82 L496.17 496.05 L497.48 498.28 L498.81 500.51 L500.15 502.73 L501.51 504.94 L502.88 507.14 L504.27 509.34 L505.67 511.54 L507.09 513.72 L508.51 515.90 L509.96 518.08 L511.42 520.25 L512.89 522.41 L514.38 524.57 L515.88 526.72 L517.40 528.86 L518.93 531.00 L520.47 533.13 L522.03 535.26 L523.61 537.38 L525.19 539.50 L526.80 541.61 L528.41 543.71 L530.04 545.81 L531.69 547.90 L533.35 549.99 L535.02 552.07 L536.70 554.15 L538.40 556.23 L540.12 558.29 L541.84 560.36 L543.58 562.42 L545.34 564.47 L547.11 566.52 L548.89 568.56 L550.68 570.60 L552.49 572.64 L554.31 574.67 L556.14 576.70 L557.99 578.72 L559.85 580.74 L561.73 582.75 L563.61 584.76 L565.51 586.77 L567.42 588.77 L569.35 590.77 L571.29 592.77 L573.24 594.76 L575.20 596.75 L577.18 598.73 L579.18 600.71 L581.18 602.68 L583.20 604.65 L585.23 606.61 L587.28 608.57 L589.35 610.52 L591.42 612.47 L593.51 614.42 L595.62 616.35 L597.74 618.29 L599.88 620.21 L602.03 622.14 L604.19 624.05 L606.37 625.96 L608.57 627.87 L610.78 629.77 L613.01 631.66 L615.25 633.54 L617.51 635.42 L619.79 637.30 L622.08 639.17 L624.38 641.03 L626.70 642.88 L629.04 644.73 L631.39 646.58 L633.76 648.42 L636.14 650.25 L638.54 652.08 L640.95 653.90 L643.38 655.72 L645.82 657.53 L648.28 659.34 L650.76 661.14 L653.24 662.94 L655.75 664.73 L658.27 666.52 L660.80 668.30 L663.35 670.08 L665.91 671.85 L668.48 673.62 L671.07 675.38 L673.68 677.15 L676.29 678.90 L678.92 680.66 L681.57 682.41 L684.22 684.16 L686.89 685.91 L689.57 687.66 L692.26 689.40 L694.97 691.14 L697.68 692.89 L700.41 694.63 L703.15 696.37 L705.90 698.11 L708.66 699.84 L711.43 701.58 L714.22 703.31 L717.02 705.04 L719.83 706.77 L722.66 708.49 L725.51 710.20 L728.37 711.91 L731.25 713.62 L734.14 715.32 L737.05 717.01 L739.98 718.70 L742.93 720.38 L745.89 722.05 L748.88 723.71 L751.88 725.36 L754.91 727.00 L757.96 728.64 L761.02 730.26 L764.11 731.87 L767.23 733.47 L770.36 735.06 L773.52 736.63 L776.70 738.19 L779.91 739.74 L783.14 741.28 L786.40 742.80 L789.68 744.30 L793.00 745.79 L796.33 747.26 L799.70 748.72 L803.09 750.16 L806.51 751.58 L809.96 752.99 L813.44 754.38"/><path d="M515.00 32.13 L513.84 35.80 L512.71 39.45 L511.59 43.09 L510.49 46.72 L509.40 50.34 L508.34 53.95 L507.29 57.55 L506.26 61.14 L505.24 64.71 L504.24 68.27 L503.26 71.83 L502.30 75.37 L501.35 78.90 L500.42 82.41 L499.51 85.92 L498.62 89.42 L497.74 92.90 L496.88 96.38 L496.04 99.84 L495.21 103.29 L494.40 106.73 L493.61 110.16 L492.83 113.58 L492.07 116.99 L491.33 120.39 L490.61 123.77 L489.90 127.15 L489.21 130.51 L488.54 133.87 L487.88 137.21 L487.24 140.55 L486.62 143.87 L486.01 147.18 L485.42 150.48 L484.85 153.78 L484.29 157.06 L483.75 160.33 L483.23 163.59 L482.72 166.84 L482.23 170.08 L481.76 173.31 L481.30 176.52 L480.86 179.73 L480.44 182.93 L480.03 186.12 L479.64 189.30 L479.27 192.47 L478.91 195.63 L478.57 198.77 L478.25 201.91 L477.94 205.04 L477.65 208.16 L477.38 211.27 L477.12 214.37 L476.88 217.46 L476.65 220.53 L476.44 223.60 L476.25 226.66 L476.07 229.71 L475.91 232.75 L475.77 235.78 L475.64 238.81 L475.53 241.82 L475.44 244.82 L475.36 247.81 L475.29 250.80 L475.25 253.77 L475.22 256.73 L475.20 259.69 L475.20 262.64 L475.22 265.57 L475.26 268.50 L475.31 271.42 L475.37 274.33 L475.46 277.23 L475.55 280.12 L475.67 283.00 L475.80 285.87 L475.94 288.73 L476.11 291.59 L476.29 294.43 L476.48 297.27 L476.69 300.10 L476.91 302.92 L477.16 305.73 L477.41 308.53 L477.69 311.32 L477.98 314.11 L478.28 316.88 L478.60 319.65 L478.94 322.41 L479.29 325.16 L479.66 327.90 L480.04 330.63 L480.44 333.35 L480.86 336.07 L481.29 338.78 L481.74 341.48 L482.20 344.17 L482.68 346.85 L483.17 349.52 L483.68 352.19 L484.20 354.84 L484.74 357.49 L485.30 360.13 L485.87 362.77 L486.45 365.39 L487.06 368.01 L487.67 370.62 L488.31 373.22 L488.96 375.81 L489.62 378.40 L490.30 380.97 L490.99 383.54 L491.70 386.10 L492.43 388.66 L493.17 391.20 L493.93 393.74 L494.70 396.27 L495.48 398.80 L496.29 401.31 L497.10 403.82 L497.94 406.32 L498.78 408.81 L499.65 411.30 L500.52 413.77 L501.42 416.24 L502.33 418.71 L503.25 421.16 L504.19 423.61 L505.14 426.05 L506.11 428.49 L507.10 430.91 L508.10 433.33 L509.11 435.74 L510.14 438.15 L511.18 440.55 L512.24 442.94 L513.32 445.32 L514.41 447.70 L515.51 450.07 L516.63 452.43 L517.76 454.79 L518.91 457.14 L520.08 459.48 L521.26 461.82 L522.45 464.14 L523.66 466.47 L524.88 468.78 L526.12 471.09 L527.38 473.39 L528.65 475.69 L529.93 477.98 L531.23 480.26 L532.54 482.53 L533.87 484.80 L535.21 487.07 L536.57 489.32 L537.94 491.57 L539.33 493.82 L540.73 496.05 L542.15 498.28 L543.58 500.51 L545.03 502.73 L546.49 504.94 L547.96 507.14 L549.45 509.34 L550.96 511.54 L552.48 513.72 L554.01 515.90 L555.56 518.08 L557.13 520.25 L558.71 522.41 L560.30 524.57 L561.91 526.72 L563.53 528.86 L565.17 531.00 L566.82 533.13 L568.49 535.26 L570.17 537.38 L571.87 539.50 L573.58 541.61 L575.30 543.71 L577.04 545.81 L578.79 547.90 L580.56 549.99 L582.34 552.07 L584.14 554.15 L585.95 556.23 L587.77 558.29 L589.61 560.36 L591.46 562.42 L593.33 564.47 L595.21 566.52 L597.10 568.56 L599.00 570.60 L600.92 572.64 L602.86 574.67 L604.80 576.70 L606.76 578.72 L608.74 580.74 L610.72 582.75 L612.72 584.76 L614.74 586.77 L616.76 588.77 L618.80 590.77 L620.86 592.77 L622.92 594.76 L625.00 596.75 L627.10 598.73 L629.21 600.71 L631.33 602.68 L633.46 604.65 L635.61 606.61 L637.78 608.57 L639.96 610.52 L642.15 612.47 L644.36 614.42 L646.58 616.35 L648.82 618.29 L651.08 620.21 L653.35 622.14 L655.63 624.05 L657.93 625.96 L660.25 627.87 L662.58 629.77 L664.93 631.66 L667.29 633.54 L669.67 635.42 L672.07 637.30 L674.48 639.17 L676.90 641.03 L679.35 642.88 L681.81 644.73 L684.28 646.58 L686.77 648.42 L689.28 650.25 L691.80 652.08 L694.33 653.90 L696.88 655.72 L699.45 657.53 L702.03 659.34 L704.63 661.14 L707.25 662.94 L709.87 664.73 L712.52 666.52 L715.18 668.30 L717.85 670.08 L720.54 671.85 L723.24 673.62 L725.96 675.38 L728.69 677.15 L731.43 678.90 L734.19 680.66 L736.96 682.41 L739.75 684.16 L742.54 685.91 L745.35 687.66 L748.17 689.40 L751.01 691.14 L753.85 692.89 L756.71 694.63 L759.58 696.37 L762.46 698.11 L765.35 699.84 L768.26 701.58 L771.17 703.31 L774.11 705.04 L777.05 706.77 L780.02 708.49 L782.99 710.20 L785.99 711.91 L789.00 713.62 L792.03 715.32 L795.07 717.01 L798.14 718.70 L801.22 720.38 L804.32 722.05 L807.44 723.71 L810.58 725.36 L813.74 727.00 L816.93 728.64 L820.13 730.26 L823.36 731.87 L826.61 733.47 L829.88 735.06 L833.18 736.63 L836.50 738.19 L839.84 739.74 L843.21 741.28 L846.61 742.80 L850.03 744.30 L853.48 745.79 L856.96 747.26 L860.47 748.72 L864.00 750.16 L867.56 751.58 L871.16 752.99 L874.78 754.38"/><path d="M545.69 32.13 L544.61 35.80 L543.55 39.45 L542.50 43.09 L541.47 46.72 L540.46 50.34 L539.46 53.95 L538.48 57.55 L537.52 61.14 L536.58 64.71 L535.66 68.27 L534.75 71.83 L533.86 75.37 L532.99 78.90 L532.13 82.41 L531.29 85.92 L530.47 89.42 L529.67 92.90 L528.88 96.38 L528.11 99.84 L527.36 103.29 L526.63 106.73 L525.91 110.16 L525.21 113.58 L524.52 116.99 L523.86 120.39 L523.21 123.77 L522.58 127.15 L521.96 130.51 L521.36 133.87 L520.78 137.21 L520.22 140.55 L519.67 143.87 L519.14 147.18 L518.63 150.48 L518.13 153.78 L517.65 157.06 L517.19 160.33 L516.75 163.59 L516.32 166.84 L515.91 170.08 L515.51 173.31 L515.13 176.52 L514.77 179.73 L514.43 182.93 L514.10 186.12 L513.79 189.30 L513.49 192.47 L513.22 195.63 L512.96 198.77 L512.71 201.91 L512.48 205.04 L512.27 208.16 L512.08 211.27 L511.90 214.37 L511.74 217.46 L511.60 220.53 L511.47 223.60 L511.36 226.66 L511.26 229.71 L511.18 232.75 L511.12 235.78 L511.08 238.81 L511.05 241.82 L511.03 244.82 L511.04 247.81 L511.06 250.80 L511.09 253.77 L511.15 256.73 L511.22 259.69 L511.30 262.64 L511.40 265.57 L511.52 268.50 L511.65 271.42 L511.81 274.33 L511.97 277.23 L512.15 280.12 L512.35 283.00 L512.57 285.87 L512.80 288.73 L513.05 291.59 L513.31 294.43 L513.59 297.27 L513.89 300.10 L514.20 302.92 L514.53 305.73 L514.87 308.53 L515.23 311.32 L515.61 314.11 L516.00 316.88 L516.41 319.65 L516.83 322.41 L517.27 325.16 L517.73 327.90 L518.20 330.63 L518.69 333.35 L519.19 336.07 L519.71 338.78 L520.25 341.48 L520.80 344.17 L521.37 346.85 L521.95 349.52 L522.55 352.19 L523.16 354.84 L523.79 357.49 L524.44 360.13 L525.10 362.77 L525.78 365.39 L526.47 368.01 L527.18 370.62 L527.91 373.22 L528.65 375.81 L529.40 378.40 L530.17 380.97 L530.96 383.54 L531.76 386.10 L532.58 388.66 L533.42 391.20 L534.26 393.74 L535.13 396.27 L536.01 398.80 L536.91 401.31 L537.82 403.82 L538.74 406.32 L539.69 408.81 L540.64 411.30 L541.62 413.77 L542.61 416.24 L543.61 418.71 L544.63 421.16 L545.66 423.61 L546.71 426.05 L547.78 428.49 L548.86 430.91 L549.96 433.33 L551.07 435.74 L552.19 438.15 L553.34 440.55 L554.49 442.94 L555.67 445.32 L556.85 447.70 L558.06 450.07 L559.27 452.43 L560.51 454.79 L561.76 457.14 L563.02 459.48 L564.30 461.82 L565.59 464.14 L566.90 466.47 L568.22 468.78 L569.56 471.09 L570.92 473.39 L572.29 475.69 L573.67 477.98 L575.07 480.26 L576.49 482.53 L577.92 484.80 L579.36 487.07 L580.82 489.32 L582.30 491.57 L583.79 493.82 L585.29 496.05 L586.81 498.28 L588.35 500.51 L589.90 502.73 L591.46 504.94 L593.04 507.14 L594.64 509.34 L596.25 511.54 L597.87 513.72 L599.51 515.90 L601.17 518.08 L602.84 520.25 L604.52 522.41 L606.22 524.57 L607.94 526.72 L609.67 528.86 L611.41 531.00 L613.17 533.13 L614.95 535.26 L616.74 537.38 L618.54 539.50 L620.36 541.61 L622.19 543.71 L624.04 545.81 L625.90 547.90 L627.78 549.99 L629.67 552.07 L631.58 554.15 L633.49 556.23 L635.43 558.29 L637.38 560.36 L639.34 562.42 L641.31 564.47 L643.30 566.52 L645.31 568.56 L647.33 570.60 L649.36 572.64 L651.40 574.67 L653.46 576.70 L655.54 578.72 L657.62 580.74 L659.72 582.75 L661.84 584.76 L663.96 586.77 L666.10 588.77 L668.26 590.77 L670.43 592.77 L672.61 594.76 L674.80 596.75 L677.01 598.73 L679.24 600.71 L681.47 602.68 L683.73 604.65 L685.99 606.61 L688.27 608.57 L690.57 610.52 L692.88 612.47 L695.21 614.42 L697.55 616.35 L699.91 618.29 L702.28 620.21 L704.67 622.14 L707.07 624.05 L709.49 625.96 L711.93 627.87 L714.38 629.77 L716.84 631.66 L719.33 633.54 L721.83 635.42 L724.35 637.30 L726.88 639.17 L729.43 641.03 L731.99 642.88 L734.57 644.73 L737.17 646.58 L739.78 648.42 L742.41 650.25 L745.05 652.08 L747.71 653.90 L750.39 655.72 L753.08 657.53 L755.79 659.34 L758.51 661.14 L761.25 662.94 L764.00 664.73 L766.77 666.52 L769.56 668.30 L772.36 670.08 L775.17 671.85 L778.00 673.62 L780.84 675.38 L783.70 677.15 L786.57 678.90 L789.46 680.66 L792.36 682.41 L795.27 684.16 L798.19 685.91 L801.13 687.66 L804.08 689.40 L807.05 691.14 L810.02 692.89 L813.01 694.63 L816.01 696.37 L819.02 698.11 L822.04 699.84 L825.08 701.58 L828.13 703.31 L831.19 705.04 L834.27 706.77 L837.37 708.49 L840.48 710.20 L843.61 711.91 L846.75 713.62 L849.91 715.32 L853.09 717.01 L856.29 718.70 L859.51 720.38 L862.74 722.05 L866.00 723.71 L869.28 725.36 L872.57 727.00 L875.89 728.64 L879.23 730.26 L882.60 731.87 L885.99 733.47 L889.40 735.06 L892.83 736.63 L896.29 738.19 L899.77 739.74 L903.28 741.28 L906.82 742.80 L910.38 744.30 L913.97 745.79 L917.59 747.26 L921.24 748.72 L924.91 750.16 L928.62 751.58 L932.35 752.99 L936.12 754.38"/><path d="M576.39 32.13 L575.38 35.80 L574.38 39.45 L573.41 43.09 L572.45 46.72 L571.51 50.34 L570.59 53.95 L569.68 57.55 L568.79 61.14 L567.92 64.71 L567.07 68.27 L566.24 71.83 L565.42 75.37 L564.62 78.90 L563.84 82.41 L563.07 85.92 L562.33 89.42 L561.60 92.90 L560.88 96.38 L560.19 99.84 L559.51 103.29 L558.85 106.73 L558.21 110.16 L557.58 113.58 L556.97 116.99 L556.38 120.39 L555.81 123.77 L555.25 127.15 L554.71 130.51 L554.19 133.87 L553.69 137.21 L553.20 140.55 L552.73 143.87 L552.28 147.18 L551.84 150.48 L551.42 153.78 L551.02 157.06 L550.63 160.33 L550.27 163.59 L549.91 166.84 L549.58 170.08 L549.26 173.31 L548.96 176.52 L548.68 179.73 L548.42 182.93 L548.17 186.12 L547.93 189.30 L547.72 192.47 L547.52 195.63 L547.34 198.77 L547.18 201.91 L547.03 205.04 L546.90 208.16 L546.78 211.27 L546.69 214.37 L546.60 217.46 L546.54 220.53 L546.49 223.60 L546.46 226.66 L546.45 229.71 L546.45 232.75 L546.47 235.78 L546.51 238.81 L546.56 241.82 L546.63 244.82 L546.72 247.81 L546.82 250.80 L546.94 253.77 L547.08 256.73 L547.23 259.69 L547.40 262.64 L547.58 265.57 L547.78 268.50 L548.00 271.42 L548.24 274.33 L548.49 277.23 L548.76 280.12 L549.04 283.00 L549.34 285.87 L549.66 288.73 L549.99 291.59 L550.34 294.43 L550.71 297.27 L551.09 300.10 L551.49 302.92 L551.90 305.73 L552.33 308.53 L552.78 311.32 L553.24 314.11 L553.72 316.88 L554.22 319.65 L554.73 322.41 L555.26 325.16 L555.80 327.90 L556.36 330.63 L556.94 333.35 L557.53 336.07 L558.14 338.78 L558.76 341.48 L559.40 344.17 L560.06 346.85 L560.73 349.52 L561.42 352.19 L562.13 354.84 L562.85 357.49 L563.58 360.13 L564.34 362.77 L565.10 365.39 L565.89 368.01 L566.69 370.62 L567.50 373.22 L568.34 375.81 L569.18 378.40 L570.05 380.97 L570.93 383.54 L571.82 386.10 L572.73 388.66 L573.66 391.20 L574.60 393.74 L575.56 396.27 L576.54 398.80 L577.53 401.31 L578.53 403.82 L579.55 406.32 L580.59 408.81 L581.64 411.30 L582.71 413.77 L583.79 416.24 L584.89 418.71 L586.01 421.16 L587.14 423.61 L588.29 426.05 L589.45 428.49 L590.62 430.91 L591.82 433.33 L593.03 435.74 L594.25 438.15 L595.49 440.55 L596.74 442.94 L598.01 445.32 L599.30 447.70 L600.60 450.07 L601.92 452.43 L603.25 454.79 L604.60 457.14 L605.96 459.48 L607.34 461.82 L608.73 464.14 L610.14 466.47 L611.57 468.78 L613.01 471.09 L614.46 473.39 L615.93 475.69 L617.42 477.98 L618.92 480.26 L620.43 482.53 L621.97 484.80 L623.51 487.07 L625.07 489.32 L626.65 491.57 L628.25 493.82 L629.85 496.05 L631.48 498.28 L633.12 500.51 L634.77 502.73 L636.44 504.94 L638.12 507.14 L639.82 509.34 L641.54 511.54 L643.27 513.72 L645.01 515.90 L646.77 518.08 L648.55 520.25 L650.34 522.41 L652.15 524.57 L653.97 526.72 L655.80 528.86 L657.66 531.00 L659.52 533.13 L661.41 535.26 L663.30 537.38 L665.21 539.50 L667.14 541.61 L669.08 543.71 L671.04 545.81 L673.01 547.90 L675.00 549.99 L677.00 552.07 L679.01 554.15 L681.04 556.23 L683.08 558.29 L685.14 560.36 L687.22 562.42 L689.30 564.47 L691.40 566.52 L693.52 568.56 L695.65 570.60 L697.79 572.64 L699.95 574.67 L702.12 576.70 L704.31 578.72 L706.51 580.74 L708.72 582.75 L710.95 584.76 L713.19 586.77 L715.44 588.77 L717.71 590.77 L719.99 592.77 L722.29 594.76 L724.60 596.75 L726.93 598.73 L729.27 600.71 L731.62 602.68 L733.99 604.65 L736.37 606.61 L738.77 608.57 L741.18 610.52 L743.61 612.47 L746.06 614.42 L748.51 616.35 L750.99 618.29 L753.48 620.21 L755.99 622.14 L758.51 624.05 L761.05 625.96 L763.60 627.87 L766.18 629.77 L768.76 631.66 L771.37 633.54 L773.99 635.42 L776.63 637.30 L779.28 639.17 L781.95 641.03 L784.64 642.88 L787.34 644.73 L790.06 646.58 L792.79 648.42 L795.54 650.25 L798.31 652.08 L801.09 653.90 L803.89 655.72 L806.71 657.53 L809.54 659.34 L812.39 661.14 L815.25 662.94 L818.13 664.73 L821.02 666.52 L823.93 668.30 L826.86 670.08 L829.80 671.85 L832.76 673.62 L835.73 675.38 L838.71 677.15 L841.71 678.90 L844.73 680.66 L847.75 682.41 L850.79 684.16 L853.85 685.91 L856.91 687.66 L859.99 689.40 L863.09 691.14 L866.19 692.89 L869.31 694.63 L872.44 696.37 L875.58 698.11 L878.73 699.84 L881.90 701.58 L885.09 703.31 L888.28 705.04 L891.49 706.77 L894.72 708.49 L897.97 710.20 L901.23 711.91 L904.50 713.62 L907.80 715.32 L911.11 717.01 L914.45 718.70 L917.80 720.38 L921.17 722.05 L924.56 723.71 L927.97 725.36 L931.41 727.00 L934.86 728.64 L938.34 730.26 L941.84 731.87 L945.36 733.47 L948.91 735.06 L952.49 736.63 L956.08 738.19 L959.71 739.74 L963.35 741.28 L967.03 742.80 L970.73 744.30 L974.46 745.79 L978.22 747.26 L982.01 748.72 L985.82 750.16 L989.67 751.58 L993.54 752.99 L997.45 754.38"/></g>
<g stroke="#000090"><path d="M-2.03 288.79 L-4.55 296.44 L-6.93 303.86 L-9.16 311.07 L-11.26 318.07 L-13.24 324.88 L-15.11 331.51 L-16.86 337.96 L-18.51 344.24 L-20.07 350.37 L-21.52 356.34 L-22.89 362.16 L-24.18 367.84 L-25.38 373.39 L-26.51 378.81 L-27.56 384.10 L-28.55 389.28 L-29.47 394.34 L-30.33 399.29 L-31.12 404.14 L-31.86 408.88 L-32.55 413.53 L-33.18 418.08 L-33.76 422.54 L-34.29 426.91 L-34.78 431.19 L-35.23 435.40 L-35.63 439.52 L-35.99 443.57 L-36.31 447.54 L-36.60 451.44 L-36.85 455.27 L-37.06 459.04 L-37.25 462.73 L-37.40 466.37 L-37.52 469.94 L-37.61 473.46 L-37.68 476.91 L-37.71 480.31 L-37.72 483.65 L-37.71 486.95 L-37.67 490.19 L-37.61 493.37 L-37.52 496.51 L-37.42 499.61 L-37.29 502.65 L-37.14 505.66 L-36.98 508.61 L-36.79 511.53 L-36.59 514.40 L-36.37 517.23 L-36.13 520.02 L-35.87 522.78 L-35.60 525.49 L-35.32 528.17 L-35.02 530.82 L-34.71 533.43 L-34.38 536.00 L-34.04 538.54 L-33.68 541.05 L-33.32 543.53 L-32.94 545.97 L-32.55 548.39 L-32.16 550.78 L-31.75 553.14 L-31.33 555.47 L-30.90 557.77 L-30.46 560.05 L-30.02 562.30 L-29.56 564.52 L-29.10 566.72 L-28.63 568.90 L-28.15 571.05 L-27.67 573.18 L-27.17 575.29 L-26.68 577.38 L-26.17 579.44 L-25.66 581.48 L-25.15 583.50 L-24.62 585.51 L-24.10 587.49 L-23.56 589.45 L-23.03 591.39 L-22.48 593.32 L-21.93 595.22 L-21.38 597.11 L-20.82 598.98 L-20.26 600.83 L-19.69 602.66 L-19.12 604.48 L-18.54 606.28 L-17.96 608.06 L-17.38 609.82 L-16.78 611.57 L-16.19 613.30 L-15.59 615.01 L-14.98 616.71 L-14.37 618.39 L-13.76 620.05 L-13.14 621.70 L-12.52 623.33 L-11.89 624.95 L-11.26 626.56 L-10.63 628.15 L-9.99 629.72 L-9.34 631.28 L-8.70 632.82 L-8.05 634.35 L-7.39 635.87 L-6.73 637.37 L-6.07 638.86 L-5.41 640.34 L-4.74 641.80 L-4.07 643.25 L-3.39 644.69 L-2.71 646.11 L-2.03 647.52 L-1.35 648.92 L-0.67 650.31 L0.02 651.69 L0.71 653.06 L1.41 654.41 L2.10 655.76 L2.80 657.09 L3.50 658.41 L4.20 659.72 L4.90 661.02 L5.61 662.32 L6.31 663.60 L7.02 664.87 L7.73 666.13 L8.44 667.38 L9.15 668.62 L9.87 669.86 L10.58 671.08 L11.30 672.30 L12.01 673.51 L12.73 674.70 L13.45 675.89 L14.17 677.08 L14.88 678.25 L15.60 679.42 L16.32 680.58 L17.04 681.73 L17.76 682.88 L18.48 684.01 L19.20 685.14 L19.92 686.27 L20.64 687.39 L21.35 688.50 L22.07 689.60 L22.79 690.70 L23.51 691.79 L24.22 692.88 L24.94 693.96 L25.65 695.04 L26.36 696.11 L27.08 697.17 L27.79 698.23 L28.50 699.28 L29.21 700.33 L29.92 701.37 L30.63 702.40 L31.34 703.43 L32.05 704.45 L32.76 705.47 L33.47 706.48 L34.18 707.48 L34.89 708.48 L35.60 709.47 L36.31 710.46 L37.03 711.44 L37.74 712.41 L38.45 713.37 L39.16 714.33 L39.88 715.29 L40.59 716.24 L41.31 717.18 L42.03 718.11 L42.74 719.04 L43.46 719.96 L44.18 720.87 L44.90 721.78 L45.63 722.69 L46.35 723.58 L47.07 724.47 L47.80 725.35 L48.53 726.23 L49.25 727.10 L49.98 727.96 L50.72 728.82 L51.45 729.67 L52.18 730.51 L52.92 731.35 L53.66 732.18 L54.39 733.00 L55.14 733.82 L55.88 734.63 L56.62 735.43 L57.37 736.23 L58.11 737.02 L58.86 737.81 L59.61 738.58 L60.37 739.36 L61.12 740.12 L61.88 740.88 L62.64 741.63 L63.40 742.38 L64.16 743.11 L64.92 743.85 L65.69 744.57 L66.46 745.29 L67.23 746.00 L68.00 746.71 L68.77 747.41 L69.55 748.10 L70.33 748.79 L71.11 749.47 L71.89 750.15 L72.67 750.82 L73.46 751.48 L74.25 752.13 L75.04 752.78 L75.83 753.42 L76.62 754.06"/><path d="M54.61 232.68 L51.14 242.13 L47.88 251.26 L44.83 260.08 L41.97 268.61 L39.29 276.88 L36.77 284.88 L34.41 292.64 L32.20 300.18 L30.13 307.49 L28.18 314.59 L26.36 321.50 L24.66 328.22 L23.07 334.76 L21.58 341.12 L20.19 347.32 L18.89 353.37 L17.68 359.27 L16.56 365.02 L15.51 370.63 L14.55 376.12 L13.65 381.47 L12.82 386.71 L12.06 391.83 L11.36 396.83 L10.72 401.73 L10.14 406.52 L9.61 411.22 L9.13 415.81 L8.70 420.32 L8.32 424.73 L7.98 429.06 L7.69 433.31 L7.44 437.47 L7.23 441.55 L7.05 445.56 L6.91 449.50 L6.81 453.37 L6.74 457.16 L6.70 460.89 L6.69 464.56 L6.72 468.16 L6.77 471.71 L6.84 475.19 L6.95 478.62 L7.08 481.99 L7.23 485.31 L7.41 488.57 L7.61 491.79 L7.83 494.95 L8.07 498.07 L8.33 501.14 L8.61 504.16 L8.91 507.14 L9.23 510.07 L9.57 512.97 L9.92 515.82 L10.29 518.63 L10.67 521.41 L11.07 524.14 L11.48 526.84 L11.91 529.50 L12.35 532.13 L12.81 534.72 L13.27 537.27 L13.75 539.80 L14.24 542.29 L14.74 544.75 L15.25 547.19 L15.77 549.59 L16.30 551.96 L16.84 554.30 L17.39 556.62 L17.95 558.91 L18.51 561.18 L19.08 563.41 L19.66 565.63 L20.25 567.82 L20.84 569.98 L21.45 572.12 L22.05 574.24 L22.66 576.34 L23.28 578.41 L23.91 580.46 L24.54 582.50 L25.17 584.51 L25.81 586.50 L26.45 588.47 L27.10 590.42 L27.75 592.36 L28.41 594.27 L29.07 596.17 L29.74 598.05 L30.41 599.91 L31.08 601.75 L31.76 603.57 L32.44 605.38 L33.13 607.17 L33.82 608.94 L34.51 610.69 L35.21 612.43 L35.92 614.15 L36.62 615.86 L37.33 617.55 L38.05 619.22 L38.77 620.88 L39.49 622.52 L40.21 624.15 L40.94 625.76 L41.68 627.35 L42.41 628.93 L43.15 630.50 L43.90 632.05 L44.64 633.59 L45.39 635.11 L46.15 636.62 L46.90 638.12 L47.66 639.60 L48.42 641.07 L49.19 642.53 L49.95 643.97 L50.72 645.40 L51.49 646.82 L52.27 648.23 L53.04 649.62 L53.82 651.00 L54.60 652.38 L55.38 653.74 L56.17 655.09 L56.95 656.42 L57.74 657.75 L58.53 659.07 L59.32 660.38 L60.11 661.67 L60.90 662.96 L61.69 664.23 L62.49 665.50 L63.28 666.76 L64.08 668.00 L64.87 669.24 L65.67 670.47 L66.47 671.69 L67.27 672.90 L68.07 674.11 L68.87 675.30 L69.66 676.49 L70.46 677.67 L71.26 678.84 L72.06 680.00 L72.86 681.16 L73.66 682.30 L74.45 683.45 L75.25 684.58 L76.04 685.71 L76.84 686.83 L77.63 687.94 L78.43 689.05 L79.22 690.15 L80.01 691.25 L80.80 692.34 L81.59 693.42 L82.37 694.50 L83.16 695.57 L83.94 696.64 L84.73 697.70 L85.51 698.75 L86.29 699.80 L87.07 700.85 L87.85 701.88 L88.63 702.92 L89.40 703.94 L90.18 704.96 L90.96 705.97 L91.73 706.98 L92.51 707.98 L93.29 708.98 L94.06 709.96 L94.84 710.95 L95.61 711.92 L96.39 712.89 L97.16 713.86 L97.94 714.81 L98.71 715.76 L99.49 716.71 L100.27 717.64 L101.04 718.58 L101.82 719.50 L102.60 720.42 L103.38 721.33 L104.15 722.24 L104.93 723.13 L105.71 724.03 L106.49 724.91 L107.28 725.79 L108.06 726.66 L108.84 727.53 L109.62 728.39 L110.41 729.24 L111.19 730.09 L111.98 730.93 L112.77 731.76 L113.56 732.59 L114.35 733.41 L115.14 734.22 L115.93 735.03 L116.72 735.83 L117.51 736.63 L118.31 737.41 L119.10 738.20 L119.90 738.97 L120.70 739.74 L121.50 740.50 L122.30 741.26 L123.10 742.00 L123.91 742.75 L124.71 743.48 L125.52 744.21 L126.32 744.93 L127.13 745.65 L127.94 746.36 L128.75 747.06 L129.57 747.76 L130.38 748.45 L131.20 749.13 L132.01 749.81 L132.83 750.48 L133.65 751.15 L134.47 751.81 L135.30 752.46 L136.12 753.10 L136.95 753.74 L137.77 754.38"/><path d="M113.86 173.94 L109.17 185.58 L104.80 196.76 L100.72 207.51 L96.92 217.86 L93.37 227.83 L90.05 237.45 L86.96 246.73 L84.07 255.71 L81.37 264.38 L78.86 272.78 L76.51 280.91 L74.31 288.79 L72.27 296.44 L70.37 303.86 L68.59 311.07 L66.94 318.07 L65.41 324.88 L63.99 331.51 L62.67 337.96 L61.45 344.24 L60.32 350.37 L59.28 356.34 L58.32 362.16 L57.44 367.84 L56.64 373.39 L55.91 378.81 L55.25 384.10 L54.65 389.28 L54.12 394.34 L53.64 399.29 L53.22 404.14 L52.85 408.88 L52.53 413.53 L52.27 418.08 L52.04 422.54 L51.87 426.91 L51.73 431.19 L51.63 435.40 L51.58 439.52 L51.56 443.57 L51.57 447.54 L51.62 451.44 L51.70 455.27 L51.82 459.04 L51.96 462.73 L52.13 466.37 L52.33 469.94 L52.55 473.46 L52.80 476.91 L53.08 480.31 L53.38 483.65 L53.70 486.95 L54.04 490.19 L54.40 493.37 L54.79 496.51 L55.19 499.61 L55.61 502.65 L56.05 505.66 L56.50 508.61 L56.98 511.53 L57.46 514.40 L57.97 517.23 L58.49 520.02 L59.02 522.78 L59.56 525.49 L60.12 528.17 L60.70 530.82 L61.28 533.43 L61.88 536.00 L62.48 538.54 L63.10 541.05 L63.73 543.53 L64.37 545.97 L65.01 548.39 L65.67 550.78 L66.33 553.14 L67.00 555.47 L67.68 557.77 L68.37 560.05 L69.07 562.30 L69.77 564.52 L70.47 566.72 L71.19 568.90 L71.91 571.05 L72.63 573.18 L73.36 575.29 L74.10 577.38 L74.84 579.44 L75.58 581.48 L76.33 583.50 L77.09 585.51 L77.84 587.49 L78.60 589.45 L79.37 591.39 L80.13 593.32 L80.91 595.22 L81.68 597.11 L82.46 598.98 L83.24 600.83 L84.03 602.66 L84.82 604.48 L85.61 606.28 L86.41 608.06 L87.21 609.82 L88.01 611.57 L88.81 613.30 L89.62 615.01 L90.43 616.71 L91.25 618.39 L92.07 620.05 L92.89 621.70 L93.71 623.33 L94.54 624.95 L95.37 626.56 L96.21 628.15 L97.04 629.72 L97.88 631.28 L98.72 632.82 L99.57 634.35 L100.41 635.87 L101.26 637.37 L102.11 638.86 L102.96 640.34 L103.82 641.80 L104.68 643.25 L105.53 644.69 L106.40 646.11 L107.26 647.52 L108.12 648.92 L108.98 650.31 L109.85 651.69 L110.72 653.06 L111.58 654.41 L112.45 655.76 L113.32 657.09 L114.19 658.41 L115.06 659.72 L115.94 661.02 L116.81 662.32 L117.68 663.60 L118.55 664.87 L119.43 666.13 L120.30 667.38 L121.17 668.62 L122.05 669.86 L122.92 671.08 L123.79 672.30 L124.66 673.51 L125.54 674.70 L126.41 675.89 L127.28 677.08 L128.15 678.25 L129.02 679.42 L129.88 680.58 L130.75 681.73 L131.61 682.88 L132.48 684.01 L133.34 685.14 L134.20 686.27 L135.06 687.39 L135.91 688.50 L136.77 689.60 L137.62 690.70 L138.47 691.79 L139.32 692.88 L140.17 693.96 L141.01 695.04 L141.85 696.11 L142.69 697.17 L143.53 698.23 L144.37 699.28 L145.20 700.33 L146.03 701.37 L146.87 702.40 L147.69 703.43 L148.52 704.45 L149.35 705.47 L150.17 706.48 L151.00 707.48 L151.82 708.48 L152.64 709.47 L153.46 710.46 L154.28 711.44 L155.10 712.41 L155.92 713.37 L156.74 714.33 L157.55 715.29 L158.37 716.24 L159.18 717.18 L160.00 718.11 L160.81 719.04 L161.62 719.96 L162.44 720.87 L163.25 721.78 L164.06 722.69 L164.87 723.58 L165.68 724.47 L166.49 725.35 L167.31 726.23 L168.12 727.10 L168.93 727.96 L169.74 728.82 L170.55 729.67 L171.36 730.51 L172.17 731.35 L172.98 732.18 L173.79 733.00 L174.60 733.82 L175.41 734.63 L176.22 735.43 L177.03 736.23 L177.85 737.02 L178.66 737.81 L179.47 738.58 L180.28 739.36 L181.09 740.12 L181.91 740.88 L182.72 741.63 L183.53 742.38 L184.35 743.11 L185.16 743.85 L185.97 744.57 L186.79 745.29 L187.60 746.00 L188.42 746.71 L189.24 747.41 L190.05 748.10 L190.87 748.79 L191.69 749.47 L192.50 750.15 L193.32 750.82 L194.14 751.48 L194.96 752.13 L195.78 752.78 L196.60 753.42 L197.42 754.06"/><path d="M179.21 107.52 L172.83 122.05 L166.93 135.90 L161.46 149.14 L156.39 161.81 L151.68 173.94 L147.31 185.58 L143.25 196.76 L139.48 207.51 L135.98 217.86 L132.72 227.83 L129.70 237.45 L126.89 246.73 L124.28 255.71 L121.86 264.38 L119.61 272.78 L117.52 280.91 L115.59 288.79 L113.81 296.44 L112.15 303.86 L110.63 311.07 L109.23 318.07 L107.93 324.88 L106.75 331.51 L105.67 337.96 L104.68 344.24 L103.78 350.37 L102.96 356.34 L102.23 362.16 L101.57 367.84 L100.99 373.39 L100.48 378.81 L100.03 384.10 L99.64 389.28 L99.31 394.34 L99.04 399.29 L98.82 404.14 L98.65 408.88 L98.53 413.53 L98.46 418.08 L98.43 422.54 L98.45 426.91 L98.50 431.19 L98.59 435.40 L98.72 439.52 L98.89 443.57 L99.09 447.54 L99.32 451.44 L99.58 455.27 L99.87 459.04 L100.18 462.73 L100.53 466.37 L100.90 469.94 L101.30 473.46 L101.72 476.91 L102.16 480.31 L102.62 483.65 L103.11 486.95 L103.62 490.19 L104.14 493.37 L104.69 496.51 L105.25 499.61 L105.83 502.65 L106.42 505.66 L107.03 508.61 L107.66 511.53 L108.30 514.40 L108.95 517.23 L109.62 520.02 L110.30 522.78 L111.00 525.49 L111.70 528.17 L112.42 530.82 L113.15 533.43 L113.89 536.00 L114.64 538.54 L115.39 541.05 L116.16 543.53 L116.94 545.97 L117.72 548.39 L118.51 550.78 L119.31 553.14 L120.12 555.47 L120.93 557.77 L121.75 560.05 L122.57 562.30 L123.41 564.52 L124.24 566.72 L125.08 568.90 L125.93 571.05 L126.78 573.18 L127.63 575.29 L128.49 577.38 L129.35 579.44 L130.22 581.48 L131.09 583.50 L131.96 585.51 L132.83 587.49 L133.71 589.45 L134.59 591.39 L135.47 593.32 L136.36 595.22 L137.25 597.11 L138.14 598.98 L139.03 600.83 L139.92 602.66 L140.82 604.48 L141.72 606.28 L142.62 608.06 L143.53 609.82 L144.43 611.57 L145.34 613.30 L146.25 615.01 L147.17 616.71 L148.08 618.39 L149.00 620.05 L149.92 621.70 L150.84 623.33 L151.76 624.95 L152.68 626.56 L153.61 628.15 L154.54 629.72 L155.47 631.28 L156.40 632.82 L157.33 634.35 L158.26 635.87 L159.20 637.37 L160.13 638.86 L161.07 640.34 L162.00 641.80 L162.94 643.25 L163.88 644.69 L164.82 646.11 L165.76 647.52 L166.70 648.92 L167.64 650.31 L168.58 651.69 L169.51 653.06 L170.45 654.41 L171.39 655.76 L172.33 657.09 L173.27 658.41 L174.20 659.72 L175.14 661.02 L176.08 662.32 L177.01 663.60 L177.94 664.87 L178.88 666.13 L179.81 667.38 L180.74 668.62 L181.67 669.86 L182.59 671.08 L183.52 672.30 L184.44 673.51 L185.36 674.70 L186.28 675.89 L187.20 677.08 L188.12 678.25 L189.03 679.42 L189.94 680.58 L190.85 681.73 L191.75 682.88 L192.65 684.01 L193.55 685.14 L194.45 686.27 L195.34 687.39 L196.23 688.50 L197.12 689.60 L198.00 690.70 L198.88 691.79 L199.76 692.88 L200.63 693.96 L201.50 695.04 L202.37 696.11 L203.23 697.17 L204.09 698.23 L204.94 699.28 L205.80 700.33 L206.64 701.37 L207.49 702.40 L208.33 703.43 L209.17 704.45 L210.01 705.47 L210.84 706.48 L211.68 707.48 L212.51 708.48 L213.33 709.47 L214.16 710.46 L214.98 711.44 L215.80 712.41 L216.61 713.37 L217.43 714.33 L218.24 715.29 L219.05 716.24 L219.86 717.18 L220.67 718.11 L221.47 719.04 L222.28 719.96 L223.08 720.87 L223.88 721.78 L224.67 722.69 L225.47 723.58 L226.27 724.47 L227.06 725.35 L227.85 726.23 L228.64 727.10 L229.43 727.96 L230.22 728.82 L231.00 729.67 L231.79 730.51 L232.57 731.35 L233.35 732.18 L234.13 733.00 L234.91 733.82 L235.69 734.63 L236.47 735.43 L237.25 736.23 L238.02 737.02 L238.80 737.81 L239.57 738.58 L240.34 739.36 L241.11 740.12 L241.89 740.88 L242.66 741.63 L243.43 742.38 L244.19 743.11 L244.96 743.85 L245.73 744.57 L246.50 745.29 L247.26 746.00 L248.03 746.71 L248.79 747.41 L249.56 748.10 L250.32 748.79 L251.08 749.47 L251.85 750.15 L252.61 750.82 L253.37 751.48 L254.13 752.13 L254.89 752.78 L255.65 753.42 L256.41 754.06"/><path d="M253.97 32.13 L245.25 50.50 L237.25 67.88 L229.89 84.35 L223.13 99.99 L216.91 114.87 L211.17 129.06 L205.87 142.60 L200.99 155.54 L196.47 167.94 L192.30 179.82 L188.45 191.23 L184.88 202.19 L181.59 212.74 L178.55 222.89 L175.74 232.68 L173.15 242.13 L170.76 251.26 L168.56 260.08 L166.53 268.61 L164.66 276.88 L162.95 284.88 L161.39 292.64 L159.96 300.18 L158.65 307.49 L157.47 314.59 L156.40 321.50 L155.43 328.22 L154.56 334.76 L153.79 341.12 L153.11 347.32 L152.51 353.37 L151.99 359.27 L151.55 365.02 L151.17 370.63 L150.87 376.12 L150.63 381.47 L150.45 386.71 L150.33 391.83 L150.26 396.83 L150.24 401.73 L150.28 406.52 L150.36 411.22 L150.49 415.81 L150.65 420.32 L150.87 424.73 L151.11 429.06 L151.40 433.31 L151.72 437.47 L152.08 441.55 L152.46 445.56 L152.88 449.50 L153.33 453.37 L153.81 457.16 L154.31 460.89 L154.84 464.56 L155.39 468.16 L155.96 471.71 L156.56 475.19 L157.18 478.62 L157.82 481.99 L158.48 485.31 L159.16 488.57 L159.86 491.79 L160.57 494.95 L161.30 498.07 L162.05 501.14 L162.81 504.16 L163.58 507.14 L164.37 510.07 L165.17 512.97 L165.99 515.82 L166.81 518.63 L167.65 521.41 L168.50 524.14 L169.36 526.84 L170.23 529.50 L171.11 532.13 L172.00 534.72 L172.90 537.27 L173.80 539.80 L174.72 542.29 L175.64 544.75 L176.56 547.19 L177.50 549.59 L178.44 551.96 L179.38 554.30 L180.33 556.62 L181.28 558.91 L182.24 561.18 L183.21 563.41 L184.17 565.63 L185.14 567.82 L186.12 569.98 L187.09 572.12 L188.07 574.24 L189.05 576.34 L190.03 578.41 L191.02 580.46 L192.01 582.50 L192.99 584.51 L193.98 586.50 L194.97 588.47 L195.96 590.42 L196.95 592.36 L197.95 594.27 L198.94 596.17 L199.93 598.05 L200.92 599.91 L201.92 601.75 L202.91 603.57 L203.91 605.38 L204.90 607.17 L205.90 608.94 L206.89 610.69 L207.89 612.43 L208.88 614.15 L209.88 615.86 L210.88 617.55 L211.87 619.22 L212.87 620.88 L213.86 622.52 L214.86 624.15 L215.85 625.76 L216.85 627.35 L217.84 628.93 L218.83 630.50 L219.83 632.05 L220.82 633.59 L221.81 635.11 L222.80 636.62 L223.79 638.12 L224.78 639.60 L225.76 641.07 L226.75 642.53 L227.73 643.97 L228.71 645.40 L229.69 646.82 L230.67 648.23 L231.64 649.62 L232.62 651.00 L233.59 652.38 L234.56 653.74 L235.52 655.09 L236.48 656.42 L237.44 657.75 L238.40 659.07 L239.36 660.38 L240.31 661.67 L241.26 662.96 L242.20 664.23 L243.14 665.50 L244.08 666.76 L245.02 668.00 L245.95 669.24 L246.87 670.47 L247.80 671.69 L248.72 672.90 L249.63 674.11 L250.54 675.30 L251.45 676.49 L252.35 677.67 L253.25 678.84 L254.14 680.00 L255.03 681.16 L255.92 682.30 L256.80 683.45 L257.67 684.58 L258.54 685.71 L259.40 686.83 L260.26 687.94 L261.11 689.05 L261.96 690.15 L262.80 691.25 L263.64 692.34 L264.47 693.42 L265.30 694.50 L266.12 695.57 L266.93 696.64 L267.74 697.70 L268.55 698.75 L269.35 699.80 L270.14 700.85 L270.93 701.88 L271.71 702.92 L272.49 703.94 L273.27 704.96 L274.04 705.97 L274.80 706.98 L275.56 707.98 L276.32 708.98 L277.08 709.96 L277.82 710.95 L278.57 711.92 L279.31 712.89 L280.05 713.86 L280.78 714.81 L281.51 715.76 L282.24 716.71 L282.97 717.64 L283.69 718.58 L284.40 719.50 L285.12 720.42 L285.83 721.33 L286.54 722.24 L287.24 723.13 L287.94 724.03 L288.64 724.91 L289.34 725.79 L290.03 726.66 L290.73 727.53 L291.41 728.39 L292.10 729.24 L292.79 730.09 L293.47 730.93 L294.15 731.76 L294.83 732.59 L295.50 733.41 L296.18 734.22 L296.85 735.03 L297.52 735.83 L298.19 736.63 L298.85 737.41 L299.52 738.20 L300.18 738.97 L300.84 739.74 L301.50 740.50 L302.16 741.26 L302.82 742.00 L303.47 742.75 L304.12 743.48 L304.78 744.21 L305.43 744.93 L306.08 745.65 L306.73 746.36 L307.38 747.06 L308.02 747.76 L308.67 748.45 L309.32 749.13 L309.96 749.81 L310.60 750.48 L311.25 751.15 L311.89 751.81 L312.53 752.46 L313.17 753.10 L313.81 753.74 L314.45 754.38"/><path d="M301.44 32.13 L293.27 50.50 L285.81 67.88 L278.98 84.35 L272.73 99.99 L267.01 114.87 L261.75 129.06 L256.93 142.60 L252.51 155.54 L248.45 167.94 L244.73 179.82 L241.31 191.23 L238.17 202.19 L235.30 212.74 L232.67 222.89 L230.26 232.68 L228.06 242.13 L226.06 251.26 L224.24 260.08 L222.59 268.61 L221.09 276.88 L219.74 284.88 L218.54 292.64 L217.46 300.18 L216.50 307.49 L215.66 314.59 L214.92 321.50 L214.28 328.22 L213.74 334.76 L213.29 341.12 L212.93 347.32 L212.64 353.37 L212.43 359.27 L212.29 365.02 L212.22 370.63 L212.21 376.12 L212.27 381.47 L212.37 386.71 L212.54 391.83 L212.75 396.83 L213.02 401.73 L213.33 406.52 L213.68 411.22 L214.07 415.81 L214.51 420.32 L214.98 424.73 L215.49 429.06 L216.03 433.31 L216.61 437.47 L217.21 441.55 L217.85 445.56 L218.51 449.50 L219.19 453.37 L219.91 457.16 L220.64 460.89 L221.40 464.56 L222.18 468.16 L222.99 471.71 L223.81 475.19 L224.65 478.62 L225.50 481.99 L226.38 485.31 L227.26 488.57 L228.17 491.79 L229.09 494.95 L230.02 498.07 L230.96 501.14 L231.92 504.16 L232.89 507.14 L233.87 510.07 L234.85 512.97 L235.85 515.82 L236.86 518.63 L237.87 521.41 L238.90 524.14 L239.93 526.84 L240.97 529.50 L242.01 532.13 L243.06 534.72 L244.11 537.27 L245.17 539.80 L246.23 542.29 L247.30 544.75 L248.37 547.19 L249.44 549.59 L250.52 551.96 L251.60 554.30 L252.68 556.62 L253.75 558.91 L254.84 561.18 L255.92 563.41 L257.00 565.63 L258.08 567.82 L259.16 569.98 L260.24 572.12 L261.31 574.24 L262.39 576.34 L263.46 578.41 L264.53 580.46 L265.60 582.50 L266.67 584.51 L267.73 586.50 L268.79 588.47 L269.85 590.42 L270.90 592.36 L271.96 594.27 L273.00 596.17 L274.05 598.05 L275.08 599.91 L276.12 601.75 L277.15 603.57 L278.18 605.38 L279.21 607.17 L280.23 608.94 L281.24 610.69 L282.26 612.43 L283.26 614.15 L284.27 615.86 L285.27 617.55 L286.27 619.22 L287.26 620.88 L288.24 622.52 L289.23 624.15 L290.21 625.76 L291.18 627.35 L292.15 628.93 L293.12 630.50 L294.08 632.05 L295.03 633.59 L295.98 635.11 L296.93 636.62 L297.87 638.12 L298.81 639.60 L299.74 641.07 L300.67 642.53 L301.59 643.97 L302.50 645.40 L303.41 646.82 L304.32 648.23 L305.21 649.62 L306.11 651.00 L306.99 652.38 L307.88 653.74 L308.75 655.09 L309.62 656.42 L310.48 657.75 L311.34 659.07 L312.19 660.38 L313.04 661.67 L313.88 662.96 L314.71 664.23 L315.54 665.50 L316.36 666.76 L317.18 668.00 L317.99 669.24 L318.79 670.47 L319.58 671.69 L320.37 672.90 L321.16 674.11 L321.93 675.30 L322.70 676.49 L323.47 677.67 L324.22 678.84 L324.98 680.00 L325.72 681.16 L326.46 682.30 L327.19 683.45 L327.91 684.58 L328.63 685.71 L329.33 686.83 L330.04 687.94 L330.73 689.05 L331.42 690.15 L332.10 691.25 L332.78 692.34 L333.45 693.42 L334.11 694.50 L334.76 695.57 L335.41 696.64 L336.05 697.70 L336.69 698.75 L337.32 699.80 L337.94 700.85 L338.56 701.88 L339.17 702.92 L339.78 703.94 L340.38 704.96 L340.97 705.97 L341.56 706.98 L342.15 707.98 L342.73 708.98 L343.31 709.96 L343.88 710.95 L344.45 711.92 L345.01 712.89 L345.57 713.86 L346.12 714.81 L346.68 715.76 L347.22 716.71 L347.77 717.64 L348.31 718.58 L348.85 719.50 L349.38 720.42 L349.91 721.33 L350.44 722.24 L350.97 723.13 L351.49 724.03 L352.01 724.91 L352.52 725.79 L353.04 726.66 L353.55 727.53 L354.06 728.39 L354.57 729.24 L355.08 730.09 L355.58 730.93 L356.08 731.76 L356.58 732.59 L357.08 733.41 L357.58 734.22 L358.07 735.03 L358.56 735.83 L359.06 736.63 L359.55 737.41 L360.04 738.20 L360.53 738.97 L361.01 739.74 L361.50 740.50 L361.99 741.26 L362.47 742.00 L362.95 742.75 L363.44 743.48 L363.92 744.21 L364.40 744.93 L364.88 745.65 L365.36 746.36 L365.84 747.06 L366.32 747.76 L366.80 748.45 L367.28 749.13 L367.76 749.81 L368.24 750.48 L368.72 751.15 L369.19 751.81 L369.67 752.46 L370.15 753.10 L370.63 753.74 L371.11 754.38"/><path d="M365.40 32.13 L357.98 50.50 L351.25 67.88 L345.13 84.35 L339.57 99.99 L334.52 114.87 L329.92 129.06 L325.74 142.60 L321.94 155.54 L318.50 167.94 L315.37 179.82 L312.54 191.23 L309.98 202.19 L307.67 212.74 L305.59 222.89 L303.72 232.68 L302.06 242.13 L300.58 251.26 L299.27 260.08 L298.12 268.61 L297.12 276.88 L296.26 284.88 L295.53 292.64 L294.92 300.18 L294.43 307.49 L294.04 314.59 L293.75 321.50 L293.56 328.22 L293.45 334.76 L293.43 341.12 L293.48 347.32 L293.61 353.37 L293.81 359.27 L294.07 365.02 L294.39 370.63 L294.77 376.12 L295.21 381.47 L295.69 386.71 L296.22 391.83 L296.80 396.83 L297.42 401.73 L298.08 406.52 L298.78 411.22 L299.51 415.81 L300.27 420.32 L301.07 424.73 L301.90 429.06 L302.75 433.31 L303.63 437.47 L304.53 441.55 L305.46 445.56 L306.40 449.50 L307.37 453.37 L308.35 457.16 L309.35 460.89 L310.36 464.56 L311.39 468.16 L312.43 471.71 L313.49 475.19 L314.55 478.62 L315.63 481.99 L316.71 485.31 L317.80 488.57 L318.90 491.79 L320.00 494.95 L321.11 498.07 L322.23 501.14 L323.34 504.16 L324.47 507.14 L325.59 510.07 L326.71 512.97 L327.84 515.82 L328.96 518.63 L330.08 521.41 L331.21 524.14 L332.33 526.84 L333.45 529.50 L334.56 532.13 L335.68 534.72 L336.79 537.27 L337.89 539.80 L338.99 542.29 L340.08 544.75 L341.17 547.19 L342.26 549.59 L343.33 551.96 L344.40 554.30 L345.46 556.62 L346.51 558.91 L347.56 561.18 L348.60 563.41 L349.62 565.63 L350.64 567.82 L351.65 569.98 L352.65 572.12 L353.65 574.24 L354.63 576.34 L355.60 578.41 L356.56 580.46 L357.51 582.50 L358.45 584.51 L359.38 586.50 L360.30 588.47 L361.21 590.42 L362.11 592.36 L363.00 594.27 L363.88 596.17 L364.74 598.05 L365.60 599.91 L366.45 601.75 L367.29 603.57 L368.12 605.38 L368.93 607.17 L369.74 608.94 L370.54 610.69 L371.34 612.43 L372.12 614.15 L372.89 615.86 L373.65 617.55 L374.41 619.22 L375.16 620.88 L375.90 622.52 L376.63 624.15 L377.35 625.76 L378.06 627.35 L378.77 628.93 L379.47 630.50 L380.16 632.05 L380.84 633.59 L381.52 635.11 L382.18 636.62 L382.85 638.12 L383.50 639.60 L384.14 641.07 L384.78 642.53 L385.42 643.97 L386.04 645.40 L386.66 646.82 L387.27 648.23 L387.87 649.62 L388.47 651.00 L389.06 652.38 L389.64 653.74 L390.22 655.09 L390.79 656.42 L391.36 657.75 L391.91 659.07 L392.46 660.38 L393.01 661.67 L393.55 662.96 L394.08 664.23 L394.61 665.50 L395.13 666.76 L395.64 668.00 L396.15 669.24 L396.66 670.47 L397.15 671.69 L397.65 672.90 L398.13 674.11 L398.61 675.30 L399.08 676.49 L399.55 677.67 L400.01 678.84 L400.47 680.00 L400.92 681.16 L401.37 682.30 L401.81 683.45 L402.24 684.58 L402.67 685.71 L403.09 686.83 L403.51 687.94 L403.92 689.05 L404.32 690.15 L404.72 691.25 L405.12 692.34 L405.51 693.42 L405.89 694.50 L406.27 695.57 L406.65 696.64 L407.01 697.70 L407.38 698.75 L407.74 699.80 L408.09 700.85 L408.44 701.88 L408.79 702.92 L409.13 703.94 L409.47 704.96 L409.81 705.97 L410.14 706.98 L410.47 707.98 L410.79 708.98 L411.12 709.96 L411.44 710.95 L411.75 711.92 L412.07 712.89 L412.38 713.86 L412.69 714.81 L413.00 715.76 L413.31 716.71 L413.61 717.64 L413.91 718.58 L414.21 719.50 L414.51 720.42 L414.81 721.33 L415.11 722.24 L415.40 723.13 L415.70 724.03 L415.99 724.91 L416.29 725.79 L416.58 726.66 L416.87 727.53 L417.16 728.39 L417.45 729.24 L417.74 730.09 L418.03 730.93 L418.32 731.76 L418.61 732.59 L418.89 733.41 L419.18 734.22 L419.47 735.03 L419.76 735.83 L420.05 736.63 L420.34 737.41 L420.63 738.20 L420.92 738.97 L421.21 739.74 L421.50 740.50 L421.79 741.26 L422.08 742.00 L422.38 742.75 L422.67 743.48 L422.96 744.21 L423.26 744.93 L423.55 745.65 L423.85 746.36 L424.15 747.06 L424.45 747.76 L424.75 748.45 L425.05 749.13 L425.35 749.81 L425.66 750.48 L425.96 751.15 L426.27 751.81 L426.57 752.46 L426.88 753.10 L427.19 753.74 L427.50 754.38"/><path d="M460.41 32.13 L454.11 50.50 L448.45 67.88 L443.39 84.35 L438.85 99.99 L434.80 114.87 L431.17 129.06 L427.94 142.60 L425.07 155.54 L422.53 167.94 L420.28 179.82 L418.31 191.23 L416.59 202.19 L415.11 212.74 L413.83 222.89 L412.76 232.68 L411.86 242.13 L411.13 251.26 L410.56 260.08 L410.13 268.61 L409.83 276.88 L409.65 284.88 L409.58 292.64 L409.62 300.18 L409.75 307.49 L409.98 314.59 L410.28 321.50 L410.66 328.22 L411.11 334.76 L411.62 341.12 L412.20 347.32 L412.82 353.37 L413.49 359.27 L414.21 365.02 L414.97 370.63 L415.76 376.12 L416.58 381.47 L417.43 386.71 L418.31 391.83 L419.21 396.83 L420.13 401.73 L421.06 406.52 L422.01 411.22 L422.97 415.81 L423.93 420.32 L424.91 424.73 L425.88 429.06 L426.86 433.31 L427.84 437.47 L428.82 441.55 L429.79 445.56 L430.76 449.50 L431.73 453.37 L432.69 457.16 L433.64 460.89 L434.58 464.56 L435.51 468.16 L436.43 471.71 L437.34 475.19 L438.24 478.62 L439.12 481.99 L439.99 485.31 L440.85 488.57 L441.70 491.79 L442.53 494.95 L443.34 498.07 L444.14 501.14 L444.93 504.16 L445.70 507.14 L446.45 510.07 L447.19 512.97 L447.92 515.82 L448.63 518.63 L449.32 521.41 L450.01 524.14 L450.67 526.84 L451.32 529.50 L451.96 532.13 L452.59 534.72 L453.19 537.27 L453.79 539.80 L454.37 542.29 L454.94 544.75 L455.49 547.19 L456.03 549.59 L456.56 551.96 L457.08 554.30 L457.58 556.62 L458.07 558.91 L458.55 561.18 L459.01 563.41 L459.47 565.63 L459.91 567.82 L460.34 569.98 L460.76 572.12 L461.17 574.24 L461.56 576.34 L461.95 578.41 L462.33 580.46 L462.70 582.50 L463.05 584.51 L463.40 586.50 L463.74 588.47 L464.07 590.42 L464.39 592.36 L464.70 594.27 L465.00 596.17 L465.30 598.05 L465.59 599.91 L465.87 601.75 L466.15 603.57 L466.41 605.38 L466.68 607.17 L466.93 608.94 L467.18 610.69 L467.43 612.43 L467.67 614.15 L467.91 615.86 L468.14 617.55 L468.36 619.22 L468.58 620.88 L468.80 622.52 L469.02 624.15 L469.23 625.76 L469.43 627.35 L469.64 628.93 L469.84 630.50 L470.04 632.05 L470.23 633.59 L470.42 635.11 L470.61 636.62 L470.80 638.12 L470.98 639.60 L471.17 641.07 L471.35 642.53 L471.52 643.97 L471.70 645.40 L471.87 646.82 L472.04 648.23 L472.21 649.62 L472.37 651.00 L472.53 652.38 L472.70 653.74 L472.86 655.09 L473.01 656.42 L473.17 657.75 L473.32 659.07 L473.47 660.38 L473.62 661.67 L473.77 662.96 L473.92 664.23 L474.06 665.50 L474.20 666.76 L474.35 668.00 L474.48 669.24 L474.62 670.47 L474.76 671.69 L474.89 672.90 L475.02 674.11 L475.15 675.30 L475.28 676.49 L475.41 677.67 L475.53 678.84 L475.66 680.00 L475.78 681.16 L475.89 682.30 L476.01 683.45 L476.13 684.58 L476.24 685.71 L476.35 686.83 L476.46 687.94 L476.56 689.05 L476.67 690.15 L476.77 691.25 L476.87 692.34 L476.96 693.42 L477.06 694.50 L477.15 695.57 L477.24 696.64 L477.33 697.70 L477.42 698.75 L477.50 699.80 L477.59 700.85 L477.67 701.88 L477.75 702.92 L477.84 703.94 L477.91 704.96 L477.99 705.97 L478.07 706.98 L478.15 707.98 L478.23 708.98 L478.31 709.96 L478.38 710.95 L478.46 711.92 L478.54 712.89 L478.61 713.86 L478.69 714.81 L478.77 715.76 L478.85 716.71 L478.93 717.64 L479.01 718.58 L479.08 719.50 L479.17 720.42 L479.25 721.33 L479.33 722.24 L479.41 723.13 L479.50 724.03 L479.58 724.91 L479.67 725.79 L479.76 726.66 L479.85 727.53 L479.94 728.39 L480.03 729.24 L480.12 730.09 L480.22 730.93 L480.31 731.76 L480.41 732.59 L480.51 733.41 L480.61 734.22 L480.72 735.03 L480.82 735.83 L480.93 736.63 L481.04 737.41 L481.15 738.20 L481.27 738.97 L481.38 739.74 L481.50 740.50 L481.62 741.26 L481.74 742.00 L481.87 742.75 L481.99 743.48 L482.12 744.21 L482.25 744.93 L482.39 745.65 L482.52 746.36 L482.66 747.06 L482.80 747.76 L482.95 748.45 L483.09 749.13 L483.24 749.81 L483.39 750.48 L483.55 751.15 L483.70 751.81 L483.86 752.46 L484.02 753.10 L484.19 753.74 L484.36 754.38"/><path d="M615.04 32.13 L610.49 50.50 L606.51 67.88 L603.06 84.35 L600.06 99.99 L597.47 114.87 L595.24 129.06 L593.33 142.60 L591.70 155.54 L590.32 167.94 L589.15 179.82 L588.18 191.23 L587.36 202.19 L586.69 212.74 L586.14 222.89 L585.69 232.68 L585.33 242.13 L585.03 251.26 L584.79 260.08 L584.59 268.61 L584.43 276.88 L584.29 284.88 L584.17 292.64 L584.06 300.18 L583.96 307.49 L583.85 314.59 L583.74 321.50 L583.62 328.22 L583.50 334.76 L583.36 341.12 L583.21 347.32 L583.04 353.37 L582.86 359.27 L582.67 365.02 L582.46 370.63 L582.24 376.12 L582.00 381.47 L581.75 386.71 L581.48 391.83 L581.20 396.83 L580.91 401.73 L580.61 406.52 L580.30 411.22 L579.98 415.81 L579.65 420.32 L579.31 424.73 L578.96 429.06 L578.61 433.31 L578.25 437.47 L577.89 441.55 L577.52 445.56 L577.14 449.50 L576.77 453.37 L576.39 457.16 L576.00 460.89 L575.62 464.56 L575.23 468.16 L574.84 471.71 L574.46 475.19 L574.07 478.62 L573.68 481.99 L573.29 485.31 L572.90 488.57 L572.51 491.79 L572.12 494.95 L571.74 498.07 L571.35 501.14 L570.97 504.16 L570.59 507.14 L570.21 510.07 L569.84 512.97 L569.46 515.82 L569.09 518.63 L568.72 521.41 L568.35 524.14 L567.99 526.84 L567.63 529.50 L567.27 532.13 L566.92 534.72 L566.57 537.27 L566.22 539.80 L565.87 542.29 L565.53 544.75 L565.19 547.19 L564.85 549.59 L564.51 551.96 L564.18 554.30 L563.85 556.62 L563.53 558.91 L563.20 561.18 L562.88 563.41 L562.56 565.63 L562.24 567.82 L561.93 569.98 L561.61 572.12 L561.30 574.24 L561.00 576.34 L560.69 578.41 L560.39 580.46 L560.09 582.50 L559.79 584.51 L559.49 586.50 L559.19 588.47 L558.90 590.42 L558.61 592.36 L558.32 594.27 L558.04 596.17 L557.75 598.05 L557.47 599.91 L557.19 601.75 L556.92 603.57 L556.65 605.38 L556.38 607.17 L556.11 608.94 L555.85 610.69 L555.59 612.43 L555.33 614.15 L555.08 615.86 L554.83 617.55 L554.59 619.22 L554.34 620.88 L554.11 622.52 L553.87 624.15 L553.64 625.76 L553.41 627.35 L553.19 628.93 L552.96 630.50 L552.75 632.05 L552.53 633.59 L552.32 635.11 L552.12 636.62 L551.91 638.12 L551.71 639.60 L551.52 641.07 L551.32 642.53 L551.13 643.97 L550.95 645.40 L550.76 646.82 L550.58 648.23 L550.40 649.62 L550.23 651.00 L550.05 652.38 L549.88 653.74 L549.72 655.09 L549.55 656.42 L549.39 657.75 L549.23 659.07 L549.07 660.38 L548.92 661.67 L548.77 662.96 L548.62 664.23 L548.47 665.50 L548.32 666.76 L548.18 668.00 L548.04 669.24 L547.90 670.47 L547.76 671.69 L547.63 672.90 L547.49 674.11 L547.36 675.30 L547.23 676.49 L547.10 677.67 L546.97 678.84 L546.84 680.00 L546.72 681.16 L546.59 682.30 L546.47 683.45 L546.35 684.58 L546.22 685.71 L546.10 686.83 L545.98 687.94 L545.86 689.05 L545.74 690.15 L545.62 691.25 L545.50 692.34 L545.38 693.42 L545.27 694.50 L545.15 695.57 L545.03 696.64 L544.91 697.70 L544.80 698.75 L544.68 699.80 L544.57 700.85 L544.45 701.88 L544.34 702.92 L544.23 703.94 L544.12 704.96 L544.01 705.97 L543.90 706.98 L543.80 707.98 L543.69 708.98 L543.59 709.96 L543.49 710.95 L543.39 711.92 L543.29 712.89 L543.20 713.86 L543.10 714.81 L543.01 715.76 L542.92 716.71 L542.83 717.64 L542.75 718.58 L542.67 719.50 L542.59 720.42 L542.51 721.33 L542.43 722.24 L542.36 723.13 L542.29 724.03 L542.23 724.91 L542.16 725.79 L542.10 726.66 L542.04 727.53 L541.98 728.39 L541.93 729.24 L541.88 730.09 L541.83 730.93 L541.79 731.76 L541.74 732.59 L541.71 733.41 L541.67 734.22 L541.64 735.03 L541.61 735.83 L541.58 736.63 L541.56 737.41 L541.54 738.20 L541.52 738.97 L541.51 739.74 L541.50 740.50 L541.49 741.26 L541.49 742.00 L541.49 742.75 L541.49 743.48 L541.50 744.21 L541.51 744.93 L541.52 745.65 L541.54 746.36 L541.56 747.06 L541.59 747.76 L541.61 748.45 L541.64 749.13 L541.68 749.81 L541.72 750.48 L541.76 751.15 L541.80 751.81 L541.85 752.46 L541.90 753.10 L541.96 753.74 L542.02 754.38"/><path d="M861.51 32.13 L854.97 50.50 L848.64 67.88 L842.53 84.35 L836.61 99.99 L830.88 114.87 L825.33 129.06 L819.95 142.60 L814.75 155.54 L809.71 167.94 L804.83 179.82 L800.11 191.23 L795.53 202.19 L791.10 212.74 L786.81 222.89 L782.66 232.68 L778.63 242.13 L774.73 251.26 L770.95 260.08 L767.28 268.61 L763.73 276.88 L760.28 284.88 L756.93 292.64 L753.68 300.18 L750.53 307.49 L747.47 314.59 L744.49 321.50 L741.60 328.22 L738.79 334.76 L736.06 341.12 L733.40 347.32 L730.81 353.37 L728.29 359.27 L725.84 365.02 L723.46 370.63 L721.13 376.12 L718.87 381.47 L716.66 386.71 L714.51 391.83 L712.41 396.83 L710.36 401.73 L708.36 406.52 L706.41 411.22 L704.51 415.81 L702.65 420.32 L700.84 424.73 L699.06 429.06 L697.33 433.31 L695.64 437.47 L693.98 441.55 L692.36 445.56 L690.78 449.50 L689.23 453.37 L687.71 457.16 L686.23 460.89 L684.78 464.56 L683.36 468.16 L681.96 471.71 L680.60 475.19 L679.26 478.62 L677.95 481.99 L676.67 485.31 L675.42 488.57 L674.18 491.79 L672.98 494.95 L671.79 498.07 L670.63 501.14 L669.49 504.16 L668.37 507.14 L667.28 510.07 L666.20 512.97 L665.14 515.82 L664.11 518.63 L663.09 521.41 L662.09 524.14 L661.11 526.84 L660.14 529.50 L659.20 532.13 L658.27 534.72 L657.35 537.27 L656.45 539.80 L655.57 542.29 L654.70 544.75 L653.85 547.19 L653.01 549.59 L652.18 551.96 L651.37 554.30 L650.57 556.62 L649.78 558.91 L649.00 561.18 L648.24 563.41 L647.48 565.63 L646.74 567.82 L646.01 569.98 L645.29 572.12 L644.58 574.24 L643.87 576.34 L643.18 578.41 L642.50 580.46 L641.83 582.50 L641.17 584.51 L640.51 586.50 L639.86 588.47 L639.23 590.42 L638.60 592.36 L637.97 594.27 L637.36 596.17 L636.76 598.05 L636.16 599.91 L635.57 601.75 L634.99 603.57 L634.42 605.38 L633.85 607.17 L633.30 608.94 L632.75 610.69 L632.21 612.43 L631.67 614.15 L631.15 615.86 L630.63 617.55 L630.12 619.22 L629.62 620.88 L629.12 622.52 L628.63 624.15 L628.15 625.76 L627.68 627.35 L627.22 628.93 L626.76 630.50 L626.30 632.05 L625.86 633.59 L625.42 635.11 L624.99 636.62 L624.57 638.12 L624.15 639.60 L623.74 641.07 L623.33 642.53 L622.93 643.97 L622.54 645.40 L622.15 646.82 L621.77 648.23 L621.39 649.62 L621.02 651.00 L620.65 652.38 L620.29 653.74 L619.94 655.09 L619.58 656.42 L619.24 657.75 L618.90 659.07 L618.56 660.38 L618.23 661.67 L617.90 662.96 L617.58 664.23 L617.26 665.50 L616.95 666.76 L616.64 668.00 L616.33 669.24 L616.03 670.47 L615.73 671.69 L615.44 672.90 L615.15 674.11 L614.86 675.30 L614.58 676.49 L614.30 677.67 L614.02 678.84 L613.74 680.00 L613.47 681.16 L613.20 682.30 L612.93 683.45 L612.67 684.58 L612.40 685.71 L612.14 686.83 L611.89 687.94 L611.63 689.05 L611.38 690.15 L611.12 691.25 L610.87 692.34 L610.62 693.42 L610.38 694.50 L610.13 695.57 L609.89 696.64 L609.65 697.70 L609.41 698.75 L609.17 699.80 L608.93 700.85 L608.70 701.88 L608.47 702.92 L608.24 703.94 L608.01 704.96 L607.79 705.97 L607.56 706.98 L607.35 707.98 L607.13 708.98 L606.91 709.96 L606.70 710.95 L606.49 711.92 L606.29 712.89 L606.09 713.86 L605.89 714.81 L605.69 715.76 L605.50 716.71 L605.31 717.64 L605.12 718.58 L604.94 719.50 L604.76 720.42 L604.58 721.33 L604.41 722.24 L604.23 723.13 L604.07 724.03 L603.90 724.91 L603.74 725.79 L603.59 726.66 L603.44 727.53 L603.29 728.39 L603.14 729.24 L603.00 730.09 L602.86 730.93 L602.73 731.76 L602.60 732.59 L602.47 733.41 L602.35 734.22 L602.23 735.03 L602.11 735.83 L602.00 736.63 L601.89 737.41 L601.79 738.20 L601.69 738.97 L601.59 739.74 L601.50 740.50 L601.41 741.26 L601.33 742.00 L601.25 742.75 L601.17 743.48 L601.10 744.21 L601.03 744.93 L600.97 745.65 L600.91 746.36 L600.85 747.06 L600.80 747.76 L600.75 748.45 L600.71 749.13 L600.67 749.81 L600.63 750.48 L600.60 751.15 L600.57 751.81 L600.55 752.46 L600.53 753.10 L600.52 753.74 L600.50 754.38"/><path d="M1030.16 32.13 L1017.75 50.50 L1006.08 67.88 L995.07 84.35 L984.67 99.99 L974.83 114.87 L965.50 129.06 L956.64 142.60 L948.22 155.54 L940.21 167.94 L932.56 179.82 L925.27 191.23 L918.30 202.19 L911.63 212.74 L905.24 222.89 L899.12 232.68 L893.24 242.13 L887.60 251.26 L882.17 260.08 L876.95 268.61 L871.93 276.88 L867.09 284.88 L862.42 292.64 L857.91 300.18 L853.56 307.49 L849.36 314.59 L845.29 321.50 L841.36 328.22 L837.55 334.76 L833.87 341.12 L830.30 347.32 L826.83 353.37 L823.48 359.27 L820.22 365.02 L817.05 370.63 L813.98 376.12 L810.99 381.47 L808.09 386.71 L805.26 391.83 L802.52 396.83 L799.84 401.73 L797.24 406.52 L794.70 411.22 L792.23 415.81 L789.82 420.32 L787.48 424.73 L785.19 429.06 L782.95 433.31 L780.77 437.47 L778.64 441.55 L776.56 445.56 L774.53 449.50 L772.55 453.37 L770.61 457.16 L768.71 460.89 L766.86 464.56 L765.05 468.16 L763.27 471.71 L761.54 475.19 L759.84 478.62 L758.18 481.99 L756.55 485.31 L754.95 488.57 L753.39 491.79 L751.86 494.95 L750.36 498.07 L748.89 501.14 L747.45 504.16 L746.04 507.14 L744.66 510.07 L743.30 512.97 L741.97 515.82 L740.66 518.63 L739.38 521.41 L738.12 524.14 L736.88 526.84 L735.67 529.50 L734.48 532.13 L733.31 534.72 L732.16 537.27 L731.03 539.80 L729.92 542.29 L728.83 544.75 L727.76 547.19 L726.70 549.59 L725.66 551.96 L724.64 554.30 L723.64 556.62 L722.65 558.91 L721.68 561.18 L720.72 563.41 L719.77 565.63 L718.85 567.82 L717.93 569.98 L717.03 572.12 L716.14 574.24 L715.26 576.34 L714.40 578.41 L713.55 580.46 L712.71 582.50 L711.88 584.51 L711.06 586.50 L710.26 588.47 L709.46 590.42 L708.68 592.36 L707.90 594.27 L707.14 596.17 L706.39 598.05 L705.65 599.91 L704.91 601.75 L704.19 603.57 L703.48 605.38 L702.78 607.17 L702.08 608.94 L701.40 610.69 L700.73 612.43 L700.06 614.15 L699.41 615.86 L698.76 617.55 L698.13 619.22 L697.50 620.88 L696.88 622.52 L696.27 624.15 L695.67 625.76 L695.08 627.35 L694.50 628.93 L693.93 630.50 L693.36 632.05 L692.80 633.59 L692.25 635.11 L691.71 636.62 L691.18 638.12 L690.66 639.60 L690.14 641.07 L689.63 642.53 L689.13 643.97 L688.63 645.40 L688.14 646.82 L687.66 648.23 L687.18 649.62 L686.71 651.00 L686.25 652.38 L685.79 653.74 L685.34 655.09 L684.90 656.42 L684.46 657.75 L684.03 659.07 L683.60 660.38 L683.18 661.67 L682.77 662.96 L682.36 664.23 L681.95 665.50 L681.55 666.76 L681.16 668.00 L680.77 669.24 L680.38 670.47 L680.00 671.69 L679.63 672.90 L679.26 674.11 L678.89 675.30 L678.52 676.49 L678.16 677.67 L677.81 678.84 L677.46 680.00 L677.11 681.16 L676.76 682.30 L676.42 683.45 L676.08 684.58 L675.75 685.71 L675.41 686.83 L675.08 687.94 L674.75 689.05 L674.43 690.15 L674.11 691.25 L673.79 692.34 L673.47 693.42 L673.16 694.50 L672.84 695.57 L672.53 696.64 L672.22 697.70 L671.92 698.75 L671.62 699.80 L671.32 700.85 L671.02 701.88 L670.72 702.92 L670.43 703.94 L670.14 704.96 L669.85 705.97 L669.57 706.98 L669.29 707.98 L669.01 708.98 L668.74 709.96 L668.47 710.95 L668.20 711.92 L667.94 712.89 L667.68 713.86 L667.42 714.81 L667.17 715.76 L666.92 716.71 L666.67 717.64 L666.43 718.58 L666.19 719.50 L665.95 720.42 L665.72 721.33 L665.49 722.24 L665.27 723.13 L665.05 724.03 L664.83 724.91 L664.62 725.79 L664.41 726.66 L664.21 727.53 L664.01 728.39 L663.81 729.24 L663.62 730.09 L663.43 730.93 L663.25 731.76 L663.07 732.59 L662.89 733.41 L662.72 734.22 L662.55 735.03 L662.39 735.83 L662.23 736.63 L662.08 737.41 L661.93 738.20 L661.78 738.97 L661.64 739.74 L661.50 740.50 L661.37 741.26 L661.24 742.00 L661.11 742.75 L660.99 743.48 L660.87 744.21 L660.76 744.93 L660.66 745.65 L660.55 746.36 L660.45 747.06 L660.36 747.76 L660.27 748.45 L660.18 749.13 L660.10 749.81 L660.02 750.48 L659.95 751.15 L659.88 751.81 L659.82 752.46 L659.76 753.10 L659.70 753.74 L659.65 754.38"/></g>
<g stroke="#fff"><path d="M61.5 80.5 L91.5 50.5"/><path d="M61.5 140.5 L151.5 50.5"/><path d="M61.5 200.5 L211.5 50.5"/><path d="M61.5 260.5 L271.5 50.5"/><path d="M61.5 320.5 L331.5 50.5"/><path d="M61.5 380.5 L391.5 50.5"/><path d="M61.5 440.5 L451.5 50.5"/><path d="M61.5 500.5 L511.5 50.5"/><path d="M61.5 560.5 L571.5 50.5"/><path d="M61.5 620.5 L631.5 50.5"/><path d="M61.5 680.5 L661.5 80.5"/><path d="M61.5 740.5 L661.5 140.5"/><path d="M112.5 749.5 L661.5 200.5"/><path d="M172.5 749.5 L661.5 260.5"/><path d="M232.5 749.5 L661.5 320.5"/><path d="M292.5 749.5 L661.5 380.5"/><path d="M352.5 749.5 L661.5 440.5"/><path d="M412.5 749.5 L661.5 500.5"/><path d="M472.5 749.5 L661.5 560.5"/><path d="M532.5 749.5 L661.5 620.5"/><path d="M592.5 749.5 L661.5 680.5"/><path d="M652.5 749.5 L661.5 740.5"/></g>
</g>
<g stroke="#fff" fill="none">
<path d="M56.5 50.5 H666.5"/>
<path d="M56.5 321.5 H666.5"/>
<path d="M56.5 449.5 H666.5"/>
<path d="M56.5 529.5 H666.5"/>
<path d="M56.5 586.5 H666.5"/>
<path d="M56.5 630.5 H666.5"/>
<path d="M56.5 665.5 H666.5"/>
<path d="M56.5 694.5 H666.5"/>
<path d="M56.5 719.5 H666.5"/>
<path d="M56.5 740.5 H661.5"/>
<path d="M61.5 50.5 V749.5 M661.5 50.5 V749.5 M61.5 749.5 H661.5"/>
<path d="M61.5 749.5 V754"/><path d="M121.5 749.5 V754"/><path d="M181.5 749.5 V754"/><path d="M241.5 749.5 V754"/><path d="M301.5 749.5 V754"/><path d="M361.5 749.5 V754"/><path d="M421.5 749.5 V754"/><path d="M481.5 749.5 V754"/><path d="M541.5 749.5 V754"/><path d="M601.5 749.5 V754"/><path d="M661.5 749.5 V754"/>
<path d="M61.5 788 V792"/><path d="M121.5 788 V792"/><path d="M181.5 788 V792"/><path d="M241.5 788 V792"/><path d="M301.5 788 V792"/><path d="M361.5 788 V792"/><path d="M421.5 788 V792"/><path d="M481.5 788 V792"/><path d="M541.5 788 V792"/><path d="M601.5 788 V792"/><path d="M661.5 788 V792"/>
<path d="M61.5 826 V830"/><path d="M121.5 826 V830"/><path d="M181.5 826 V830"/><path d="M241.5 826 V830"/><path d="M301.5 826 V830"/><path d="M361.5 826 V830"/><path d="M421.5 826 V830"/><path d="M481.5 826 V830"/><path d="M541.5 826 V830"/><path d="M601.5 826 V830"/><path d="M661.5 826 V830"/>
<path d="M61.5 863 V867.5"/><path d="M136.5 863 V867.5"/><path d="M211.5 863 V867.5"/><path d="M286.5 863 V867.5"/><path d="M361.5 863 V867.5"/><path d="M436.5 863 V867.5"/><path d="M511.5 863 V867.5"/><path d="M586.5 863 V867.5"/><path d="M661.5 863 V867.5"/>
</g>
<g clip-path="url(#pc)" stroke-width="1">
<path d="M618.0 146.5h5M620.5 144.0v5M559.0 218.5h5M561.5 216.0v5M487.0 274.5h5M489.5 272.0v5M435.0 321.5h5M437.5 319.0v5M422.0 360.5h5M424.5 358.0v5M422.0 394.5h5M424.5 392.0v5M423.0 423.5h5M425.5 421.0v5M428.0 449.5h5M430.5 447.0v5M430.0 472.5h5M432.5 470.0v5M434.0 493.5h5M436.5 491.0v5M436.0 512.5h5M438.5 510.0v5M441.0 545.5h5M443.5 543.0v5M444.0 560.5h5M446.5 558.0v5M446.0 574.5h5M448.5 572.0v5M451.0 598.5h5M453.5 596.0v5M454.0 610.5h5M456.5 608.0v5M457.0 620.5h5M459.5 618.0v5M464.0 640.5h5M466.5 638.0v5M474.0 647.5h5M476.5 645.0v5M474.0 657.5h5M476.5 655.0v5M484.0 665.5h5M486.5 663.0v5M492.0 673.5h5M494.5 671.0v5M500.0 686.5h5M502.5 684.0v5M509.0 697.5h5M511.5 695.0v5M521.0 708.5h5M523.5 706.0v5M532.0 715.5h5M534.5 713.0v5M540.0 723.5h5M542.5 721.0v5M552.0 729.5h5M554.5 727.0v5M561.0 734.5h5M563.5 732.0v5" stroke="#fff" fill="none"/><path d="M705.00 59.00 L620.50 146.50 L561.30 218.40 L489.20 274.20 L437.90 321.30 L424.90 360.10 L424.20 394.40 L425.70 423.20 L430.00 449.60 L432.80 472.40 L436.20 493.60 L438.50 512.10 L442.30 529.50 L443.80 545.30 L446.50 560.30 L448.40 574.50 L451.40 586.30 L453.70 598.40 L456.50 610.70 L459.80 620.40 L464.80 635.30 L466.70 640.30 L476.20 647.60 L476.20 657.70 L486.10 665.50 L494.90 673.40 L502.20 686.60 L511.70 697.60 L523.40 708.60 L534.40 715.90 L542.50 723.20 L554.20 729.00 L563.00 734.20" stroke="#ff0000" fill="none"/>
<path d="M466.0 146.5h5M468.5 144.0v5M404.0 217.5h5M406.5 215.0v5M431.0 274.5h5M433.5 272.0v5M423.0 321.5h5M425.5 319.0v5M421.0 360.5h5M423.5 358.0v5M417.0 394.5h5M419.5 392.0v5M408.0 423.5h5M410.5 421.0v5M396.0 472.5h5M398.5 470.0v5M400.0 493.5h5M402.5 491.0v5M404.0 512.5h5M406.5 510.0v5M384.0 545.5h5M386.5 543.0v5M367.0 560.5h5M369.5 558.0v5M351.0 574.5h5M353.5 572.0v5M364.0 598.5h5M366.5 596.0v5M374.0 610.5h5M376.5 608.0v5M377.0 620.5h5M379.5 618.0v5M380.0 640.5h5M382.5 638.0v5M394.0 647.5h5M396.5 645.0v5M399.0 657.5h5M401.5 655.0v5M408.0 665.5h5M410.5 663.0v5M421.0 673.5h5M423.5 671.0v5M442.0 686.5h5M444.5 684.0v5M468.0 698.5h5M470.5 696.0v5M484.0 707.5h5M486.5 705.0v5M485.0 714.5h5M487.5 712.0v5M481.0 723.5h5M483.5 721.0v5M478.0 730.5h5M480.5 728.0v5M477.0 733.5h5M479.5 731.0v5" stroke="#fff" fill="none"/><path d="M560.10 50.50 L468.10 146.40 L406.10 217.80 L433.20 274.20 L425.30 321.30 L424.90 340.60 L423.50 360.10 L419.80 394.40 L410.20 423.20 L400.60 448.20 L398.40 472.40 L402.50 493.60 L406.70 512.10 L401.00 530.50 L386.40 545.30 L369.40 560.30 L353.60 574.10 L352.30 586.00 L366.50 598.40 L376.00 610.70 L379.00 620.10 L379.60 631.50 L382.10 640.30 L396.60 647.60 L401.00 657.70 L410.50 665.30 L423.20 673.20 L444.60 686.00 L470.50 698.40 L486.70 707.80 L487.40 714.70 L483.00 723.00 L480.40 730.00 L479.80 733.70" stroke="#00ffff" fill="none"/>
<path d="M501.90 691.40 L506.99 695.29 L512.14 699.18 L517.35 703.07 L522.66 706.96 L528.06 710.85 L533.58 714.75 L539.23 718.64 L545.03 722.53 L551.01 726.42 L557.19 730.31 L563.58 734.20" stroke="#ff00ff" fill="none"/><path d="M503.70 689.50 L508.93 693.50 L514.21 697.50 L519.57 701.50 L525.01 705.50 L530.55 709.50 L536.20 713.50 L541.99 717.50 L547.94 721.50 L554.06 725.50 L560.39 729.50 L566.94 733.50" stroke="#ffb4ff" fill="none"/><path d="M501.90 691.40 L479.50 734.20" stroke="#ff00ff" fill="none"/>
<path d="M506.72 50.50 L505.81 53.50 L504.91 56.50 L504.02 59.50 L503.14 62.50 L502.27 65.50 L501.41 68.50 L500.56 71.50 L499.72 74.50 L498.89 77.50 L498.07 80.50 L497.26 83.50 L496.46 86.50 L495.67 89.50 L494.89 92.50 L494.12 95.50 L493.37 98.50 L492.62 101.50 L491.88 104.50 L491.16 107.50 L490.44 110.50 L489.74 113.50 L489.04 116.50 L488.36 119.50 L487.69 122.50 L487.03 125.50 L486.38 128.50 L485.74 131.50 L485.12 134.50 L484.50 137.50 L483.90 140.50 L483.31 143.50 L482.73 146.50 L482.16 149.50 L481.61 152.50 L481.06 155.50 L480.53 158.50 L480.01 161.50 L479.50 164.50 L479.01 167.50 L478.53 170.50 L478.06 173.50 L477.60 176.50 L477.15 179.50 L476.72 182.50 L476.30 185.50 L475.90 188.50 L475.50 191.50 L475.12 194.50 L474.75 197.50 L474.40 200.50 L474.06 203.50 L473.73 206.50 L473.42 209.50 L473.12 212.50 L472.83 215.50 L472.55 218.50 L472.29 221.50 L472.05 224.50 L471.82 227.50 L471.60 230.50 L471.39 233.50 L471.20 236.50 L471.03 239.50 L470.86 242.50 L470.71 245.50 L470.58 248.50 L470.46 251.50 L470.35 254.50 L470.26 257.50 L470.18 260.50 L470.12 263.50 L470.07 266.50 L470.04 269.50 L470.02 272.50 L470.01 275.50 L470.02 278.50 L470.05 281.50 L470.08 284.50 L470.13 287.50 L470.20 290.50 L470.28 293.50 L470.38 296.50 L470.48 299.50 L470.61 302.50 L470.74 305.50 L470.89 308.50 L471.06 311.50 L471.24 314.50 L471.43 317.50 L471.64 320.50 L471.86 323.50 L472.09 326.50 L472.33 329.50 L472.59 332.50 L472.86 335.50 L473.15 338.50 L473.44 341.50 L473.75 344.50 L474.07 347.50 L474.41 350.50 L474.75 353.50 L475.10 356.50 L475.47 359.50 L475.85 362.50 L476.23 365.50 L476.63 368.50 L477.04 371.50 L477.45 374.50 L477.88 377.50 L478.31 380.50 L478.75 383.50 L479.20 386.50 L479.66 389.50 L480.12 392.50 L480.59 395.50 L481.07 398.50 L481.55 401.50 L482.03 404.50 L482.52 407.50 L483.02 410.50 L483.52 413.50 L484.02 416.50 L484.52 419.50 L485.03 422.50 L485.54 425.50 L486.05 428.50 L486.56 431.50 L487.07 434.50 L487.58 437.50 L488.09 440.50 L488.60 443.50 L489.10 446.50 L489.61 449.50 L490.11 452.50 L490.61 455.50 L491.10 458.50 L491.59 461.50 L492.08 464.50 L492.56 467.50 L493.04 470.50 L493.51 473.50 L493.97 476.50 L494.43 479.50 L494.88 482.50 L495.33 485.50 L495.77 488.50 L496.20 491.50 L496.62 494.50 L497.04 497.50 L497.44 500.50 L497.84 503.50 L498.23 506.50 L498.62 509.50 L498.99 512.50 L499.35 515.50 L499.71 518.50 L500.06 521.50 L500.40 524.50 L500.72 527.50 L501.04 530.50 L501.36 533.50 L501.66 536.50 L501.95 539.50 L502.23 542.50 L502.51 545.50 L502.77 548.50 L503.02 551.50 L503.23 554.50 L503.42 557.50 L503.61 560.50 L503.79 563.50 L503.95 566.50 L504.11 569.50 L504.25 572.50 L504.39 575.50 L504.51 578.50 L504.63 581.50 L504.73 584.50 L504.83 587.50 L504.91 590.50 L504.99 593.50 L505.05 596.50 L505.11 599.50 L505.16 602.50 L505.21 605.50 L505.24 608.50 L505.28 611.50 L505.31 614.50 L505.33 617.50 L505.35 620.50 L505.37 623.50 L505.38 626.50 L505.40 629.50 L505.42 632.50 L505.43 635.50 L505.45 638.50 L505.46 641.50 L505.48 644.50 L505.49 647.50 L505.51 650.50 L505.33 653.50 L505.06 656.50 L504.79 659.50 L504.53 662.50 L504.26 665.50 L504.00 668.50 L503.73 671.50 L503.46 674.50 L503.20 677.50 L502.93 680.50 L502.65 683.50 L502.37 686.50 L502.08 689.50 L503.70 689.50" stroke="#ffb4ff" fill="none"/><path d="M502.92 50.50 L502.01 53.50 L501.11 56.50 L500.22 59.50 L499.34 62.50 L498.47 65.50 L497.61 68.50 L496.76 71.50 L495.92 74.50 L495.09 77.50 L494.27 80.50 L493.46 83.50 L492.66 86.50 L491.87 89.50 L491.09 92.50 L490.32 95.50 L489.57 98.50 L488.82 101.50 L488.08 104.50 L487.36 107.50 L486.64 110.50 L485.94 113.50 L485.24 116.50 L484.56 119.50 L483.89 122.50 L483.23 125.50 L482.58 128.50 L481.94 131.50 L481.32 134.50 L480.70 137.50 L480.10 140.50 L479.51 143.50 L478.93 146.50 L478.36 149.50 L477.81 152.50 L477.26 155.50 L476.73 158.50 L476.21 161.50 L475.70 164.50 L475.21 167.50 L474.73 170.50 L474.26 173.50 L473.80 176.50 L473.35 179.50 L472.92 182.50 L472.50 185.50 L472.10 188.50 L471.70 191.50 L471.32 194.50 L470.95 197.50 L470.60 200.50 L470.26 203.50 L469.93 206.50 L469.62 209.50 L469.32 212.50 L469.03 215.50 L468.75 218.50 L468.49 221.50 L468.25 224.50 L468.02 227.50 L467.80 230.50 L467.59 233.50 L467.40 236.50 L467.23 239.50 L467.06 242.50 L466.91 245.50 L466.78 248.50 L466.66 251.50 L466.55 254.50 L466.46 257.50 L466.38 260.50 L466.32 263.50 L466.27 266.50 L466.24 269.50 L466.22 272.50 L466.21 275.50 L466.22 278.50 L466.25 281.50 L466.28 284.50 L466.33 287.50 L466.40 290.50 L466.48 293.50 L466.58 296.50 L466.68 299.50 L466.81 302.50 L466.94 305.50 L467.09 308.50 L467.26 311.50 L467.44 314.50 L467.63 317.50 L467.84 320.50 L468.06 323.50 L468.29 326.50 L468.53 329.50 L468.79 332.50 L469.06 335.50 L469.35 338.50 L469.64 341.50 L469.95 344.50 L470.27 347.50 L470.61 350.50 L470.95 353.50 L471.30 356.50 L471.67 359.50 L472.05 362.50 L472.43 365.50 L472.83 368.50 L473.24 371.50 L473.65 374.50 L474.08 377.50 L474.51 380.50 L474.95 383.50 L475.40 386.50 L475.86 389.50 L476.32 392.50 L476.79 395.50 L477.27 398.50 L477.75 401.50 L478.23 404.50 L478.72 407.50 L479.22 410.50 L479.72 413.50 L480.22 416.50 L480.72 419.50 L481.23 422.50 L481.74 425.50 L482.25 428.50 L482.76 431.50 L483.27 434.50 L483.78 437.50 L484.29 440.50 L484.80 443.50 L485.30 446.50 L485.81 449.50 L486.31 452.50 L486.81 455.50 L487.30 458.50 L487.79 461.50 L488.28 464.50 L488.76 467.50 L489.24 470.50 L489.71 473.50 L490.17 476.50 L490.63 479.50 L491.08 482.50 L491.53 485.50 L491.97 488.50 L492.40 491.50 L492.82 494.50 L493.24 497.50 L493.64 500.50 L494.04 503.50 L494.43 506.50 L494.82 509.50 L495.19 512.50 L495.55 515.50 L495.91 518.50 L496.26 521.50 L496.60 524.50 L496.92 527.50 L497.24 530.50 L497.56 533.50 L497.86 536.50 L498.15 539.50 L498.43 542.50 L498.71 545.50 L498.97 548.50 L499.22 551.50 L499.43 554.50 L499.62 557.50 L499.81 560.50 L499.99 563.50 L500.15 566.50 L500.31 569.50 L500.45 572.50 L500.59 575.50 L500.71 578.50 L500.83 581.50 L500.93 584.50 L501.03 587.50 L501.11 590.50 L501.19 593.50 L501.25 596.50 L501.31 599.50 L501.36 602.50 L501.41 605.50 L501.44 608.50 L501.48 611.50 L501.51 614.50 L501.53 617.50 L501.55 620.50 L501.57 623.50 L501.58 626.50 L501.60 629.50 L501.62 632.50 L501.63 635.50 L501.65 638.50 L501.66 641.50 L501.68 644.50 L501.69 647.50 L501.71 650.50 L501.73 653.50 L501.74 656.50 L501.76 659.50 L501.78 662.50 L501.80 665.50 L501.82 668.50 L501.84 671.50 L501.86 674.50 L501.88 677.50 L501.89 680.50 L501.90 683.50 L501.91 686.50 L501.90 689.50 L501.90 691.40" stroke="#ff00ff" fill="none"/>
<path d="M62 691.5 H625" stroke="#ff00ff"/>
<path d="M146.0 146.5h5M148.5 144.0v5M163.0 218.5h5M165.5 216.0v5M194.0 274.5h5M196.5 272.0v5M205.0 321.5h5M207.5 319.0v5M175.0 360.5h5M177.5 358.0v5M141.0 394.5h5M143.5 392.0v5M130.0 423.5h5M132.5 421.0v5M132.0 472.5h5M134.5 470.0v5M128.0 493.5h5M130.5 491.0v5M122.0 512.5h5M124.5 510.0v5M136.0 545.5h5M138.5 543.0v5M138.0 560.5h5M140.5 558.0v5M127.0 574.5h5M129.5 572.0v5M112.0 586.5h5M114.5 584.0v5M95.0 598.5h5M97.5 596.0v5M72.0 657.5h5M74.5 655.0v5M77.0 673.5h5M79.5 671.0v5M85.0 698.5h5M87.5 696.0v5M121.0 708.5h5M123.5 706.0v5M115.0 715.5h5M117.5 713.0v5M110.0 722.5h5M112.5 720.0v5M107.0 729.5h5M109.5 727.0v5M107.0 732.5h5M109.5 730.0v5" stroke="#fff" fill="none"/><path d="M121.60 50.50 L148.50 146.10 L165.30 218.50 L196.30 274.10 L207.50 321.30 L177.30 360.20 L143.10 394.40 L132.20 423.20 L132.20 449.50 L134.40 472.50 L130.80 493.30 L124.50 512.20 L132.60 527.60 L138.80 545.30 L140.50 560.80 L129.20 574.20 L114.60 586.00 L97.20 598.30 L88.00 611.00 L80.50 620.50 L77.50 631.00 L76.00 640.00 L75.00 648.50 L74.50 657.30 L76.50 665.50 L79.50 673.50 L85.00 688.00 L87.00 698.50 L100.00 701.50 L110.00 704.50 L123.50 708.50 L117.50 715.50 L112.50 722.50 L109.00 729.00 L109.00 732.00" stroke="#ff0080" fill="none"/>
<path d="M185.0 146.5h5M187.5 144.0v5M209.0 218.5h5M211.5 216.0v5M239.0 274.5h5M241.5 272.0v5M215.0 360.5h5M217.5 358.0v5M185.0 394.5h5M187.5 392.0v5M179.0 423.5h5M181.5 421.0v5M179.0 472.5h5M181.5 470.0v5M173.0 493.5h5M175.5 491.0v5M167.0 512.5h5M169.5 510.0v5M179.0 545.5h5M181.5 543.0v5M179.0 560.5h5M181.5 558.0v5M167.0 574.5h5M169.5 572.0v5M155.0 586.5h5M157.5 584.0v5M143.0 598.5h5M145.5 596.0v5M137.0 611.5h5M139.5 609.0v5M131.0 620.5h5M133.5 618.0v5M125.0 640.5h5M127.5 638.0v5M125.0 648.5h5M127.5 646.0v5M119.0 657.5h5M121.5 655.0v5M113.0 673.5h5M115.5 671.0v5M107.0 686.5h5M109.5 684.0v5M107.0 698.5h5M109.5 696.0v5M102.0 708.5h5M104.5 706.0v5M89.0 715.5h5M91.5 713.0v5M83.0 722.5h5M85.5 720.0v5M71.0 728.5h5M73.5 726.0v5M71.0 732.5h5M73.5 730.0v5" stroke="#fff" fill="none"/><path d="M145.50 50.50 L187.20 146.10 L211.20 218.50 L241.50 274.10 L247.40 321.30 L217.60 360.20 L187.50 394.40 L181.40 423.20 L181.40 449.50 L181.40 472.50 L175.40 493.30 L169.10 512.20 L174.00 529.50 L181.40 545.30 L181.40 560.80 L169.60 574.20 L157.00 586.00 L145.20 598.30 L139.30 611.00 L133.40 620.20 L133.40 630.30 L127.50 640.00 L127.50 648.80 L121.30 657.30 L121.50 666.00 L115.50 673.50 L109.50 686.80 L109.50 698.50 L104.00 708.50 L91.50 715.50 L85.50 722.50 L73.50 728.50 L73.50 732.00" stroke="#00ff00" fill="none"/>
<path d="M59.0 648.5h5M61.5 646.0v5M59.0 657.5h5M61.5 655.0v5M60.0 673.5h5M62.5 671.0v5M62.0 686.5h5M64.5 684.0v5M243.0 698.5h5M245.5 696.0v5M557.0 708.5h5M559.5 706.0v5M630.0 715.5h5M632.5 713.0v5M636.0 722.5h5M638.5 720.0v5M637.0 729.5h5M639.5 727.0v5M645.0 733.5h5M647.5 731.0v5" stroke="#fff" fill="none"/><path d="M61.50 640.30 L61.50 648.30 L61.50 657.30 L62.00 673.50 L64.50 686.80 L245.30 698.70 L559.30 708.60 L632.50 715.20 L638.40 722.50 L639.80 729.80 L647.20 733.70" stroke="#ffff00" fill="none"/>
<path d="M60.0 673.5h5M62.5 671.0v5M142.0 686.5h5M144.5 684.0v5M101.0 698.5h5M103.5 696.0v5M69.0 708.5h5M71.5 706.0v5M64.0 715.5h5M66.5 713.0v5M65.0 722.5h5M67.5 720.0v5M64.0 729.5h5M66.5 727.0v5M67.0 732.5h5M69.5 730.0v5" stroke="#fff" fill="none"/><path d="M61.50 657.30 L62.00 673.50 L144.50 686.80 L103.50 698.50 L71.00 708.50 L66.50 715.50 L67.50 722.50 L66.50 729.00 L69.00 732.00" stroke="#e07818" fill="none"/>
<path d="M239.0 673.5h5M241.5 671.0v5M238.0 687.5h5M240.5 685.0v5M238.0 698.5h5M240.5 696.0v5M234.0 708.5h5M236.5 706.0v5M225.0 714.5h5M227.5 712.0v5M223.0 722.5h5M225.5 720.0v5M215.0 728.5h5M217.5 726.0v5M209.0 733.5h5M211.5 731.0v5" stroke="#fff" fill="none"/><path d="M242.50 658.40 L241.60 673.40 L240.50 687.50 L240.50 698.70 L236.30 708.20 L227.90 714.50 L225.30 722.40 L217.90 728.20 L211.00 733.40" stroke="#c0c000" fill="none"/>
</g>
<rect x="239.0" y="654.9" width="7" height="7" fill="#c0c000"/>
<text x="242.5" y="661.4" font-size="8" fill="#000" text-anchor="middle" font-weight="bold">3</text>
<rect x="237.0" y="684.0" width="7" height="7" fill="#c0c000"/>
<text x="240.5" y="690.5" font-size="8" fill="#000" text-anchor="middle" font-weight="bold">2</text>
<rect x="228.9" y="707.9" width="7" height="7" fill="#c0c000"/>
<text x="232.4" y="714.4" font-size="8" fill="#000" text-anchor="middle" font-weight="bold">1</text>
<rect x="67.5" y="607.5" width="43" height="17" fill="#000" stroke="#ffff00"/>
<text x="71.4" y="621.0" fill="#ffff00" text-anchor="start" font-size="14.0" textLength="35.0" lengthAdjust="spacingAndGlyphs">CAPE</text>
<rect x="67.5" y="636.5" width="57" height="17" fill="#000" stroke="#e07818"/>
<text x="71.4" y="650.0" fill="#e07818" text-anchor="start" font-size="14.0" textLength="49.4" lengthAdjust="spacingAndGlyphs">CINH * 5</text>
<rect x="625.5" y="682.5" width="30" height="17" fill="#000" stroke="#ff00ff"/>
<text x="629.3" y="696.0" fill="#ff00ff" text-anchor="start" font-size="14.0" textLength="22.5" lengthAdjust="spacingAndGlyphs">LCL</text>
<g transform="translate(52.0 55.5) scale(0.905 1)"><text x="0" y="0" fill="#fff" text-anchor="end" font-size="14.0" word-spacing="1.77">100</text></g>
<g transform="translate(671.0 50.5) scale(0.905 1)"><text x="0" y="0" fill="#fff" text-anchor="start" font-size="14.0" word-spacing="1.77">16665m</text></g>
<g transform="translate(52.0 326.5) scale(0.905 1)"><text x="0" y="0" fill="#fff" text-anchor="end" font-size="14.0" word-spacing="1.77">200</text></g>
<g transform="translate(671.0 321.5) scale(0.905 1)"><text x="0" y="0" fill="#fff" text-anchor="start" font-size="14.0" word-spacing="1.77">12252m</text></g>
<g transform="translate(52.0 454.5) scale(0.905 1)"><text x="0" y="0" fill="#fff" text-anchor="end" font-size="14.0" word-spacing="1.77">300</text></g>
<g transform="translate(671.0 449.5) scale(0.905 1)"><text x="0" y="0" fill="#fff" text-anchor="start" font-size="14.0" word-spacing="1.77">9580m</text></g>
<g transform="translate(52.0 534.5) scale(0.905 1)"><text x="0" y="0" fill="#fff" text-anchor="end" font-size="14.0" word-spacing="1.77">400</text></g>
<g transform="translate(671.0 529.5) scale(0.905 1)"><text x="0" y="0" fill="#fff" text-anchor="start" font-size="14.0" word-spacing="1.77">7526m</text></g>
<g transform="translate(52.0 591.5) scale(0.905 1)"><text x="0" y="0" fill="#fff" text-anchor="end" font-size="14.0" word-spacing="1.77">500</text></g>
<g transform="translate(671.0 586.5) scale(0.905 1)"><text x="0" y="0" fill="#fff" text-anchor="start" font-size="14.0" word-spacing="1.77">5847m</text></g>
<g transform="translate(52.0 635.5) scale(0.905 1)"><text x="0" y="0" fill="#fff" text-anchor="end" font-size="14.0" word-spacing="1.77">600</text></g>
<g transform="translate(671.0 630.5) scale(0.905 1)"><text x="0" y="0" fill="#fff" text-anchor="start" font-size="14.0" word-spacing="1.77">4420m</text></g>
<g transform="translate(52.0 670.5) scale(0.905 1)"><text x="0" y="0" fill="#fff" text-anchor="end" font-size="14.0" word-spacing="1.77">700</text></g>
<g transform="translate(671.0 665.5) scale(0.905 1)"><text x="0" y="0" fill="#fff" text-anchor="start" font-size="14.0" word-spacing="1.77">3171m</text></g>
<g transform="translate(52.0 699.5) scale(0.905 1)"><text x="0" y="0" fill="#fff" text-anchor="end" font-size="14.0" word-spacing="1.77">800</text></g>
<g transform="translate(671.0 694.5) scale(0.905 1)"><text x="0" y="0" fill="#fff" text-anchor="start" font-size="14.0" word-spacing="1.77">2173m</text></g>
<g transform="translate(52.0 724.5) scale(0.905 1)"><text x="0" y="0" fill="#fff" text-anchor="end" font-size="14.0" word-spacing="1.77">900</text></g>
<g transform="translate(671.0 719.5) scale(0.905 1)"><text x="0" y="0" fill="#fff" text-anchor="start" font-size="14.0" word-spacing="1.77">1116m</text></g>
<g transform="translate(52.0 745.5) scale(0.905 1)"><text x="0" y="0" fill="#fff" text-anchor="end" font-size="14.0" word-spacing="1.77">1000</text></g>
<g transform="translate(59.0 768.0) scale(0.905 1)"><text x="0" y="0" fill="#fff" text-anchor="middle" font-size="14.0" word-spacing="1.77">-50</text></g>
<g transform="translate(61.5 806.0) scale(0.905 1)"><text x="0" y="0" fill="#fff" text-anchor="middle" font-size="14.0" word-spacing="1.77">0</text></g>
<g transform="translate(61.5 843.0) scale(0.905 1)"><text x="0" y="0" fill="#fff" text-anchor="middle" font-size="14.0" word-spacing="1.77">0</text></g>
<g transform="translate(119.0 768.0) scale(0.905 1)"><text x="0" y="0" fill="#fff" text-anchor="middle" font-size="14.0" word-spacing="1.77">-40</text></g>
<g transform="translate(121.5 806.0) scale(0.905 1)"><text x="0" y="0" fill="#fff" text-anchor="middle" font-size="14.0" word-spacing="1.77">10</text></g>
<g transform="translate(121.5 843.0) scale(0.905 1)"><text x="0" y="0" fill="#fff" text-anchor="middle" font-size="14.0" word-spacing="1.77">300</text></g>
<g transform="translate(179.0 768.0) scale(0.905 1)"><text x="0" y="0" fill="#fff" text-anchor="middle" font-size="14.0" word-spacing="1.77">-30</text></g>
<g transform="translate(181.5 806.0) scale(0.905 1)"><text x="0" y="0" fill="#fff" text-anchor="middle" font-size="14.0" word-spacing="1.77">20</text></g>
<g transform="translate(181.5 843.0) scale(0.905 1)"><text x="0" y="0" fill="#fff" text-anchor="middle" font-size="14.0" word-spacing="1.77">600</text></g>
<g transform="translate(239.0 768.0) scale(0.905 1)"><text x="0" y="0" fill="#fff" text-anchor="middle" font-size="14.0" word-spacing="1.77">-20</text></g>
<g transform="translate(241.5 806.0) scale(0.905 1)"><text x="0" y="0" fill="#fff" text-anchor="middle" font-size="14.0" word-spacing="1.77">30</text></g>
<g transform="translate(241.5 843.0) scale(0.905 1)"><text x="0" y="0" fill="#fff" text-anchor="middle" font-size="14.0" word-spacing="1.77">900</text></g>
<g transform="translate(299.0 768.0) scale(0.905 1)"><text x="0" y="0" fill="#fff" text-anchor="middle" font-size="14.0" word-spacing="1.77">-10</text></g>
<g transform="translate(301.5 806.0) scale(0.905 1)"><text x="0" y="0" fill="#fff" text-anchor="middle" font-size="14.0" word-spacing="1.77">40</text></g>
<g transform="translate(301.5 843.0) scale(0.905 1)"><text x="0" y="0" fill="#fff" text-anchor="middle" font-size="14.0" word-spacing="1.77">1200</text></g>
<g transform="translate(361.5 768.0) scale(0.905 1)"><text x="0" y="0" fill="#fff" text-anchor="middle" font-size="14.0" word-spacing="1.77">0</text></g>
<g transform="translate(361.5 806.0) scale(0.905 1)"><text x="0" y="0" fill="#fff" text-anchor="middle" font-size="14.0" word-spacing="1.77">50</text></g>
<g transform="translate(361.5 843.0) scale(0.905 1)"><text x="0" y="0" fill="#fff" text-anchor="middle" font-size="14.0" word-spacing="1.77">1500</text></g>
<g transform="translate(421.5 768.0) scale(0.905 1)"><text x="0" y="0" fill="#fff" text-anchor="middle" font-size="14.0" word-spacing="1.77">10</text></g>
<g transform="translate(421.5 806.0) scale(0.905 1)"><text x="0" y="0" fill="#fff" text-anchor="middle" font-size="14.0" word-spacing="1.77">60</text></g>
<g transform="translate(421.5 843.0) scale(0.905 1)"><text x="0" y="0" fill="#fff" text-anchor="middle" font-size="14.0" word-spacing="1.77">1800</text></g>
<g transform="translate(481.5 768.0) scale(0.905 1)"><text x="0" y="0" fill="#fff" text-anchor="middle" font-size="14.0" word-spacing="1.77">20</text></g>
<g transform="translate(481.5 806.0) scale(0.905 1)"><text x="0" y="0" fill="#fff" text-anchor="middle" font-size="14.0" word-spacing="1.77">70</text></g>
<g transform="translate(481.5 843.0) scale(0.905 1)"><text x="0" y="0" fill="#fff" text-anchor="middle" font-size="14.0" word-spacing="1.77">2100</text></g>
<g transform="translate(541.5 768.0) scale(0.905 1)"><text x="0" y="0" fill="#fff" text-anchor="middle" font-size="14.0" word-spacing="1.77">30</text></g>
<g transform="translate(541.5 806.0) scale(0.905 1)"><text x="0" y="0" fill="#fff" text-anchor="middle" font-size="14.0" word-spacing="1.77">80</text></g>
<g transform="translate(541.5 843.0) scale(0.905 1)"><text x="0" y="0" fill="#fff" text-anchor="middle" font-size="14.0" word-spacing="1.77">2400</text></g>
<g transform="translate(601.5 768.0) scale(0.905 1)"><text x="0" y="0" fill="#fff" text-anchor="middle" font-size="14.0" word-spacing="1.77">40</text></g>
<g transform="translate(601.5 806.0) scale(0.905 1)"><text x="0" y="0" fill="#fff" text-anchor="middle" font-size="14.0" word-spacing="1.77">90</text></g>
<g transform="translate(601.5 843.0) scale(0.905 1)"><text x="0" y="0" fill="#fff" text-anchor="middle" font-size="14.0" word-spacing="1.77">2700</text></g>
<g transform="translate(661.5 768.0) scale(0.905 1)"><text x="0" y="0" fill="#fff" text-anchor="middle" font-size="14.0" word-spacing="1.77">50</text></g>
<g transform="translate(661.5 806.0) scale(0.905 1)"><text x="0" y="0" fill="#fff" text-anchor="middle" font-size="14.0" word-spacing="1.77">100</text></g>
<g transform="translate(661.5 843.0) scale(0.905 1)"><text x="0" y="0" fill="#fff" text-anchor="middle" font-size="14.0" word-spacing="1.77">3000</text></g>
<g transform="translate(59.0 880.0) scale(0.905 1)"><text x="0" y="0" fill="#fff" text-anchor="middle" font-size="14.0" word-spacing="1.77">-100</text></g>
<g transform="translate(134.0 880.0) scale(0.905 1)"><text x="0" y="0" fill="#fff" text-anchor="middle" font-size="14.0" word-spacing="1.77">-50</text></g>
<g transform="translate(211.5 880.0) scale(0.905 1)"><text x="0" y="0" fill="#fff" text-anchor="middle" font-size="14.0" word-spacing="1.77">0</text></g>
<g transform="translate(286.5 880.0) scale(0.905 1)"><text x="0" y="0" fill="#fff" text-anchor="middle" font-size="14.0" word-spacing="1.77">50</text></g>
<g transform="translate(361.5 880.0) scale(0.905 1)"><text x="0" y="0" fill="#fff" text-anchor="middle" font-size="14.0" word-spacing="1.77">100</text></g>
<g transform="translate(436.5 880.0) scale(0.905 1)"><text x="0" y="0" fill="#fff" text-anchor="middle" font-size="14.0" word-spacing="1.77">150</text></g>
<g transform="translate(511.5 880.0) scale(0.905 1)"><text x="0" y="0" fill="#fff" text-anchor="middle" font-size="14.0" word-spacing="1.77">200</text></g>
<g transform="translate(586.5 880.0) scale(0.905 1)"><text x="0" y="0" fill="#fff" text-anchor="middle" font-size="14.0" word-spacing="1.77">250</text></g>
<g transform="translate(661.5 880.0) scale(0.905 1)"><text x="0" y="0" fill="#fff" text-anchor="middle" font-size="14.0" word-spacing="1.77">300</text></g>
<text x="276.0" y="781.0" fill="#fff" text-anchor="start" font-size="14.0" textLength="171.0" lengthAdjust="spacingAndGlyphs">Temperature, Dewpoint  [ °C ]</text>
<text x="307.0" y="819.0" fill="#fff" text-anchor="start" font-size="14.0" textLength="106.0" lengthAdjust="spacingAndGlyphs">Windspeed  [ knt ]</text>
<text x="292.5" y="857.0" fill="#fff" text-anchor="start" font-size="14.0" textLength="137.0" lengthAdjust="spacingAndGlyphs">CAPE, CINH * 5  [ J/kg ]</text>
<text x="259.5" y="893.0" fill="#fff" text-anchor="start" font-size="14.0" textLength="203.5" lengthAdjust="spacingAndGlyphs">Storm Relative Helicity  [ m^2/s^2 ]</text>
<text x="61.7" y="29.0" fill="#fff" text-anchor="start" font-size="17.4" font-weight="bold" textLength="129.0" lengthAdjust="spacingAndGlyphs">Station: Payerne</text>
<text x="217.6" y="29.0" fill="#fff" text-anchor="start" font-size="17.4" font-weight="bold" textLength="127.0" lengthAdjust="spacingAndGlyphs">Date: 12.07.2010</text>
<text x="366.7" y="29.0" fill="#fff" text-anchor="start" font-size="17.4" font-weight="bold" textLength="92.3" lengthAdjust="spacingAndGlyphs">Time: 1120Z</text>
<text x="747.9" y="32.0" fill="#00ff00" text-anchor="start" font-size="14.5" font-weight="bold" textLength="26.4" lengthAdjust="spacingAndGlyphs">OBS</text>
<text x="817.7" y="32.0" fill="#ff0080" text-anchor="start" font-size="14.5" font-weight="bold" textLength="17.5" lengthAdjust="spacingAndGlyphs">SR</text>
<path stroke="#00ff00" d="M761.5 40 V769 " stroke-width="1" fill="none"/>
<path stroke="#ff0080" d="M826.5 40 V769" fill="none"/>
<path d="M761.5 146.4 L747.1 171.6M761.5 218.5 L744.4 241.9M761.5 274.2 L745.4 298.3M761.5 321.0 L748.5 346.9M761.5 360.1 L747.5 385.5M761.5 394.4 L744.5 417.9M761.5 423.5 L741.3 444.3M761.5 449.7 L741.3 470.5M761.5 472.4 L742.5 494.3M761.5 493.5 L743.5 516.2M761.5 512.5 L743.5 535.2M761.5 529.5 L744.1 552.7M761.5 545.3 L745.2 569.3M761.5 560.4 L745.2 584.4M761.5 574.3 L745.2 598.3M761.5 586.3 L743.5 609.0M761.5 598.6 L740.3 618.4M761.5 610.7 L738.4 628.2M761.5 620.8 L737.5 637.1M761.5 631.0 L736.3 645.4M761.5 640.6 L736.3 655.0M761.5 648.7 L737.2 664.5M761.5 657.6 L737.5 673.9M761.5 665.7 L738.2 683.0M761.5 673.8 L739.2 692.3M761.5 686.3 L741.2 707.0M761.5 698.8 L742.6 720.8M761.5 708.4 L764.7 737.1M761.5 715.7 L763.3 744.7M761.5 722.8 L758.5 750.8M761.5 729.0 L734.5 726.0M761.5 732.5 L735.5 740.5M761.5 735.0 L746.5 751.0M826.5 146.4 L822.0 175.0M826.5 218.5 L815.3 245.2M826.5 274.2 L815.3 300.9M826.5 321.0 L819.5 349.1M826.5 360.1 L820.3 388.4M826.5 394.4 L818.5 422.3M826.5 423.5 L813.5 449.4M826.5 449.7 L813.5 475.6M826.5 472.4 L815.3 499.1M826.5 493.5 L818.5 521.4M826.5 512.5 L819.5 540.6M826.5 529.5 L819.5 557.6M826.5 545.3 L820.5 573.7M826.5 560.4 L821.5 589.0M826.5 574.3 L824.5 603.2M826.5 586.3 L825.5 615.3M826.5 598.6 L823.2 627.4M826.5 610.7 L816.5 637.9M826.5 620.8 L814.5 647.2M826.5 631.0 L812.5 656.4M826.5 640.6 L816.5 667.8M826.5 648.7 L818.5 676.6M826.5 657.6 L821.5 686.2M826.5 661.4 L835.7 691.7M826.5 672.7 L846.1 694.5M826.5 686.5 L850.8 701.6M826.5 698.8 L850.8 713.5M826.5 708.3 L854.2 717.3M826.5 715.4 L855.5 719.7M826.5 722.5 L856.1 723.4M826.5 728.6 L856.1 719.6M826.5 732.9 L853.2 719.6" stroke="#fff" fill="none"/>
<g transform="translate(894.0 40.0) scale(0.905 1)"><text x="0" y="0" fill="#fff" text-anchor="start" font-size="14.0" word-spacing="1.77">Parameter</text></g>
<path d="M894.0 41.5 H954.0" stroke="#fff" fill="none"/>
<g transform="translate(1124.0 40.0) scale(0.905 1)"><text x="0" y="0" fill="#fff" text-anchor="end" font-size="14.0" word-spacing="1.77">Value LCL</text></g>
<path d="M1064.0 41.5 H1124.0" stroke="#fff" fill="none"/>
<g transform="translate(1214.0 40.0) scale(0.905 1)"><text x="0" y="0" fill="#fff" text-anchor="end" font-size="14.0" word-spacing="1.77">Value CCL</text></g>
<path d="M1151.0 41.5 H1214.0" stroke="#fff" fill="none"/>
<g transform="translate(1230.5 40.0) scale(0.905 1)"><text x="0" y="0" fill="#fff" text-anchor="start" font-size="14.0" word-spacing="1.77">Unit</text></g>
<path d="M1230.0 41.5 H1253.0" stroke="#fff" fill="none"/>
<g transform="translate(894.0 62.0) scale(0.905 1)"><text x="0" y="0" fill="#fff" text-anchor="start" font-size="14.0" word-spacing="1.77">Convective Temperature:</text></g>
<g transform="translate(1123.5 62.0) scale(0.905 1)"><text x="0" y="0" fill="#ff0000" text-anchor="end" font-size="14.0" word-spacing="1.77">33.57</text></g>
<g transform="translate(1230.5 62.0) scale(0.905 1)"><text x="0" y="0" fill="#fff" text-anchor="start" font-size="14.0" word-spacing="1.77">[°C]</text></g>
<g transform="translate(894.0 79.0) scale(0.905 1)"><text x="0" y="0" fill="#fff" text-anchor="start" font-size="14.0" word-spacing="1.77">Snowfall Height:</text></g>
<g transform="translate(1123.5 79.0) scale(0.905 1)"><text x="0" y="0" fill="#ffffff" text-anchor="end" font-size="14.0" word-spacing="1.77">3533.49</text></g>
<g transform="translate(1230.5 79.0) scale(0.905 1)"><text x="0" y="0" fill="#fff" text-anchor="start" font-size="14.0" word-spacing="1.77">[m]</text></g>
<g transform="translate(894.0 124.0) scale(0.905 1)"><text x="0" y="0" fill="#fff" text-anchor="start" font-size="14.0" word-spacing="1.77">Lifted Index:</text></g>
<g transform="translate(1123.5 124.0) scale(0.905 1)"><text x="0" y="0" fill="#ff0000" text-anchor="end" font-size="14.0" word-spacing="1.77">-7.97</text></g>
<g transform="translate(1213.5 124.0) scale(0.905 1)"><text x="0" y="0" fill="#ff0000" text-anchor="end" font-size="14.0" word-spacing="1.77">-8.44</text></g>
<g transform="translate(1230.5 124.0) scale(0.905 1)"><text x="0" y="0" fill="#fff" text-anchor="start" font-size="14.0" word-spacing="1.77">[°C]</text></g>
<g transform="translate(894.0 141.0) scale(0.905 1)"><text x="0" y="0" fill="#fff" text-anchor="start" font-size="14.0" word-spacing="1.77">CAPE:</text></g>
<g transform="translate(1123.5 141.0) scale(0.905 1)"><text x="0" y="0" fill="#ff0000" text-anchor="end" font-size="14.0" word-spacing="1.77">2895.21</text></g>
<g transform="translate(1213.5 141.0) scale(0.905 1)"><text x="0" y="0" fill="#ff0000" text-anchor="end" font-size="14.0" word-spacing="1.77">3132.85</text></g>
<g transform="translate(1230.5 141.0) scale(0.905 1)"><text x="0" y="0" fill="#fff" text-anchor="start" font-size="14.0" word-spacing="1.77">[J/kg]</text></g>
<g transform="translate(894.0 158.0) scale(0.905 1)"><text x="0" y="0" fill="#fff" text-anchor="start" font-size="14.0" word-spacing="1.77">CINH:</text></g>
<g transform="translate(1123.5 158.0) scale(0.905 1)"><text x="0" y="0" fill="#ff0000" text-anchor="end" font-size="14.0" word-spacing="1.77">5.63</text></g>
<g transform="translate(1230.5 158.0) scale(0.905 1)"><text x="0" y="0" fill="#fff" text-anchor="start" font-size="14.0" word-spacing="1.77">[J/kg]</text></g>
<g transform="translate(894.0 175.0) scale(0.905 1)"><text x="0" y="0" fill="#fff" text-anchor="start" font-size="14.0" word-spacing="1.77">CAPE Virt.:</text></g>
<g transform="translate(1123.5 175.0) scale(0.905 1)"><text x="0" y="0" fill="#ff0000" text-anchor="end" font-size="14.0" word-spacing="1.77">3108.08</text></g>
<g transform="translate(1213.5 175.0) scale(0.905 1)"><text x="0" y="0" fill="#ff0000" text-anchor="end" font-size="14.0" word-spacing="1.77">3043.71</text></g>
<g transform="translate(1230.5 175.0) scale(0.905 1)"><text x="0" y="0" fill="#fff" text-anchor="start" font-size="14.0" word-spacing="1.77">[J/kg]</text></g>
<g transform="translate(894.0 192.0) scale(0.905 1)"><text x="0" y="0" fill="#fff" text-anchor="start" font-size="14.0" word-spacing="1.77">CINH Virt.:</text></g>
<g transform="translate(1123.5 192.0) scale(0.905 1)"><text x="0" y="0" fill="#ff0000" text-anchor="end" font-size="14.0" word-spacing="1.77">0.25</text></g>
<g transform="translate(1230.5 192.0) scale(0.905 1)"><text x="0" y="0" fill="#fff" text-anchor="start" font-size="14.0" word-spacing="1.77">[J/kg]</text></g>
<g transform="translate(894.0 209.0) scale(0.905 1)"><text x="0" y="0" fill="#fff" text-anchor="start" font-size="14.0" word-spacing="1.77">DCAPE (LFS = 525mB):</text></g>
<g transform="translate(1123.5 209.0) scale(0.905 1)"><text x="0" y="0" fill="#ff0000" text-anchor="end" font-size="14.0" word-spacing="1.77">837.43</text></g>
<g transform="translate(1230.5 209.0) scale(0.905 1)"><text x="0" y="0" fill="#fff" text-anchor="start" font-size="14.0" word-spacing="1.77">[J/kg]</text></g>
<g transform="translate(894.0 226.0) scale(0.905 1)"><text x="0" y="0" fill="#fff" text-anchor="start" font-size="14.0" word-spacing="1.77">850-600 Lapse Rate:</text></g>
<g transform="translate(1123.5 226.0) scale(0.905 1)"><text x="0" y="0" fill="#ff0000" text-anchor="end" font-size="14.0" word-spacing="1.77">22.76</text></g>
<g transform="translate(1230.5 226.0) scale(0.905 1)"><text x="0" y="0" fill="#fff" text-anchor="start" font-size="14.0" word-spacing="1.77">[°C]</text></g>
<g transform="translate(894.0 243.0) scale(0.905 1)"><text x="0" y="0" fill="#fff" text-anchor="start" font-size="14.0" word-spacing="1.77">Fawbush-Miller Hail Size:</text></g>
<g transform="translate(1123.5 243.0) scale(0.905 1)"><text x="0" y="0" fill="#ff0000" text-anchor="end" font-size="14.0" word-spacing="1.77">3.8 - 5.1</text></g>
<g transform="translate(1230.5 243.0) scale(0.905 1)"><text x="0" y="0" fill="#fff" text-anchor="start" font-size="14.0" word-spacing="1.77">[cm]</text></g>
<g transform="translate(894.0 260.0) scale(0.905 1)"><text x="0" y="0" fill="#fff" text-anchor="start" font-size="14.0" word-spacing="1.77">Sig. Hail Param. (SHIP):</text></g>
<g transform="translate(1123.5 260.0) scale(0.905 1)"><text x="0" y="0" fill="#ff0000" text-anchor="end" font-size="14.0" word-spacing="1.77">1.26</text></g>
<g transform="translate(1230.5 260.0) scale(0.905 1)"><text x="0" y="0" fill="#fff" text-anchor="start" font-size="14.0" word-spacing="1.77">[1]</text></g>
<g transform="translate(894.0 277.0) scale(0.905 1)"><text x="0" y="0" fill="#fff" text-anchor="start" font-size="14.0" word-spacing="1.77">Max. Hail Size (new, new2, old):</text></g>
<g transform="translate(1123.5 277.0) scale(0.905 1)"><text x="0" y="0" fill="#ff0000" text-anchor="end" font-size="14.0" word-spacing="1.77">4.60</text></g>
<g transform="translate(1125.5 277.0) scale(0.905 1)"><text x="0" y="0" fill="#ffffff" text-anchor="start" font-size="14.0" word-spacing="1.77">,</text></g>
<g transform="translate(1135.5 277.0) scale(0.905 1)"><text x="0" y="0" fill="#ff0000" text-anchor="start" font-size="14.0" word-spacing="1.77">6.79</text></g>
<g transform="translate(1161.5 277.0) scale(0.905 1)"><text x="0" y="0" fill="#ffffff" text-anchor="start" font-size="14.0" word-spacing="1.77">,</text></g>
<g transform="translate(1173.0 277.0) scale(0.905 1)"><text x="0" y="0" fill="#ff0000" text-anchor="start" font-size="14.0" word-spacing="1.77">4.54</text></g>
<g transform="translate(1230.5 277.0) scale(0.905 1)"><text x="0" y="0" fill="#fff" text-anchor="start" font-size="14.0" word-spacing="1.77">[cm]</text></g>
<g transform="translate(894.0 297.0) scale(0.905 1)"><text x="0" y="0" fill="#fff" text-anchor="start" font-size="14.0" word-spacing="1.77">LCL / CCL (AGL):</text></g>
<g transform="translate(1123.5 297.0) scale(0.905 1)"><text x="0" y="0" fill="#ffff00" text-anchor="end" font-size="14.0" word-spacing="1.77">1844.07</text></g>
<g transform="translate(1213.5 297.0) scale(0.905 1)"><text x="0" y="0" fill="#ffff00" text-anchor="end" font-size="14.0" word-spacing="1.77">1977.45</text></g>
<g transform="translate(1230.5 297.0) scale(0.905 1)"><text x="0" y="0" fill="#fff" text-anchor="start" font-size="14.0" word-spacing="1.77">[m]</text></g>
<g transform="translate(894.0 314.0) scale(0.905 1)"><text x="0" y="0" fill="#fff" text-anchor="start" font-size="14.0" word-spacing="1.77">Convective Height:</text></g>
<g transform="translate(1123.5 314.0) scale(0.905 1)"><text x="0" y="0" fill="#ff0000" text-anchor="end" font-size="14.0" word-spacing="1.77">10.44</text></g>
<g transform="translate(1213.5 314.0) scale(0.905 1)"><text x="0" y="0" fill="#ff0000" text-anchor="end" font-size="14.0" word-spacing="1.77">10.38</text></g>
<g transform="translate(1230.5 314.0) scale(0.905 1)"><text x="0" y="0" fill="#fff" text-anchor="start" font-size="14.0" word-spacing="1.77">[km]</text></g>
<g transform="translate(894.0 359.0) scale(0.905 1)"><text x="0" y="0" fill="#fff" text-anchor="start" font-size="14.0" word-spacing="1.77">Showalter Index:</text></g>
<g transform="translate(1123.5 359.0) scale(0.905 1)"><text x="0" y="0" fill="#ff0000" text-anchor="end" font-size="14.0" word-spacing="1.77">-6.92</text></g>
<g transform="translate(1230.5 359.0) scale(0.905 1)"><text x="0" y="0" fill="#fff" text-anchor="start" font-size="14.0" word-spacing="1.77">[°C]</text></g>
<g transform="translate(894.0 376.0) scale(0.905 1)"><text x="0" y="0" fill="#fff" text-anchor="start" font-size="14.0" word-spacing="1.77">Modified Thompson Index:</text></g>
<g transform="translate(1123.5 376.0) scale(0.905 1)"><text x="0" y="0" fill="#ff0000" text-anchor="end" font-size="14.0" word-spacing="1.77">50.65</text></g>
<g transform="translate(1230.5 376.0) scale(0.905 1)"><text x="0" y="0" fill="#fff" text-anchor="start" font-size="14.0" word-spacing="1.77">[°C]</text></g>
<g transform="translate(894.0 393.0) scale(0.905 1)"><text x="0" y="0" fill="#fff" text-anchor="start" font-size="14.0" word-spacing="1.77">Total Totals Index:</text></g>
<g transform="translate(1123.5 393.0) scale(0.905 1)"><text x="0" y="0" fill="#ff0000" text-anchor="end" font-size="14.0" word-spacing="1.77">57.97</text></g>
<g transform="translate(1230.5 393.0) scale(0.905 1)"><text x="0" y="0" fill="#fff" text-anchor="start" font-size="14.0" word-spacing="1.77">[°C]</text></g>
<g transform="translate(894.0 410.0) scale(0.905 1)"><text x="0" y="0" fill="#fff" text-anchor="start" font-size="14.0" word-spacing="1.77">KO Index:</text></g>
<g transform="translate(1123.5 410.0) scale(0.905 1)"><text x="0" y="0" fill="#ff0000" text-anchor="end" font-size="14.0" word-spacing="1.77">-33.43</text></g>
<g transform="translate(1230.5 410.0) scale(0.905 1)"><text x="0" y="0" fill="#fff" text-anchor="start" font-size="14.0" word-spacing="1.77">[1]</text></g>
<g transform="translate(894.0 427.0) scale(0.905 1)"><text x="0" y="0" fill="#fff" text-anchor="start" font-size="14.0" word-spacing="1.77">Craven SigSvr / 1000:</text></g>
<g transform="translate(1123.5 427.0) scale(0.905 1)"><text x="0" y="0" fill="#ff0000" text-anchor="end" font-size="14.0" word-spacing="1.77">27.15</text></g>
<g transform="translate(1230.5 427.0) scale(0.905 1)"><text x="0" y="0" fill="#fff" text-anchor="start" font-size="14.0" word-spacing="1.77">[m^3/s^3]</text></g>
<g transform="translate(894.0 443.5) scale(0.905 1)"><text x="0" y="0" fill="#fff" text-anchor="start" font-size="14.0" word-spacing="1.77">SCP RM (new, old):</text></g>
<g transform="translate(1123.5 443.5) scale(0.905 1)"><text x="0" y="0" fill="#ffff00" text-anchor="end" font-size="14.0" word-spacing="1.77">0.62</text></g>
<g transform="translate(1125.5 443.5) scale(0.905 1)"><text x="0" y="0" fill="#ffffff" text-anchor="start" font-size="14.0" word-spacing="1.77">,</text></g>
<g transform="translate(1135.5 443.5) scale(0.905 1)"><text x="0" y="0" fill="#00ff00" text-anchor="start" font-size="14.0" word-spacing="1.77">0.10</text></g>
<g transform="translate(1230.5 443.5) scale(0.905 1)"><text x="0" y="0" fill="#fff" text-anchor="start" font-size="14.0" word-spacing="1.77">[1]</text></g>
<g transform="translate(894.0 460.5) scale(0.905 1)"><text x="0" y="0" fill="#fff" text-anchor="start" font-size="14.0" word-spacing="1.77">SCP LM (new, old):</text></g>
<g transform="translate(1123.5 460.5) scale(0.905 1)"><text x="0" y="0" fill="#00ff00" text-anchor="end" font-size="14.0" word-spacing="1.77">0.10</text></g>
<g transform="translate(1125.5 460.5) scale(0.905 1)"><text x="0" y="0" fill="#ffffff" text-anchor="start" font-size="14.0" word-spacing="1.77">,</text></g>
<g transform="translate(1135.5 460.5) scale(0.905 1)"><text x="0" y="0" fill="#00ff00" text-anchor="start" font-size="14.0" word-spacing="1.77">0.00</text></g>
<g transform="translate(1230.5 460.5) scale(0.905 1)"><text x="0" y="0" fill="#fff" text-anchor="start" font-size="14.0" word-spacing="1.77">[1]</text></g>
<g transform="translate(894.0 477.0) scale(0.905 1)"><text x="0" y="0" fill="#fff" text-anchor="start" font-size="14.0" word-spacing="1.77">STP (new, old):</text></g>
<g transform="translate(1123.5 477.0) scale(0.905 1)"><text x="0" y="0" fill="#00ff00" text-anchor="end" font-size="14.0" word-spacing="1.77">0.02</text></g>
<g transform="translate(1125.5 477.0) scale(0.905 1)"><text x="0" y="0" fill="#ffffff" text-anchor="start" font-size="14.0" word-spacing="1.77">,</text></g>
<g transform="translate(1135.5 477.0) scale(0.905 1)"><text x="0" y="0" fill="#00ff00" text-anchor="start" font-size="14.0" word-spacing="1.77">0.02</text></g>
<g transform="translate(1230.5 477.0) scale(0.905 1)"><text x="0" y="0" fill="#fff" text-anchor="start" font-size="14.0" word-spacing="1.77">[1]</text></g>
<g transform="translate(894.0 494.0) scale(0.905 1)"><text x="0" y="0" fill="#fff" text-anchor="start" font-size="14.0" word-spacing="1.77">SB STP (fix):</text></g>
<g transform="translate(1123.5 494.0) scale(0.905 1)"><text x="0" y="0" fill="#00ff00" text-anchor="end" font-size="14.0" word-spacing="1.77">0.03</text></g>
<g transform="translate(1230.5 494.0) scale(0.905 1)"><text x="0" y="0" fill="#fff" text-anchor="start" font-size="14.0" word-spacing="1.77">[1]</text></g>
<g transform="translate(894.0 511.0) scale(0.905 1)"><text x="0" y="0" fill="#fff" text-anchor="start" font-size="14.0" word-spacing="1.77">Derecho Comp Param:</text></g>
<g transform="translate(1123.5 511.0) scale(0.905 1)"><text x="0" y="0" fill="#ff0000" text-anchor="end" font-size="14.0" word-spacing="1.77">0.67</text></g>
<g transform="translate(1230.5 511.0) scale(0.905 1)"><text x="0" y="0" fill="#fff" text-anchor="start" font-size="14.0" word-spacing="1.77">[1]</text></g>
<g transform="translate(894.0 528.0) scale(0.905 1)"><text x="0" y="0" fill="#fff" text-anchor="start" font-size="14.0" word-spacing="1.77">MCS 18m/s (MMP, MSP):</text></g>
<g transform="translate(1123.5 528.0) scale(0.905 1)"><text x="0" y="0" fill="#00ff00" text-anchor="end" font-size="14.0" word-spacing="1.77">28.86</text></g>
<g transform="translate(1125.5 528.0) scale(0.905 1)"><text x="0" y="0" fill="#ffffff" text-anchor="start" font-size="14.0" word-spacing="1.77">,</text></g>
<g transform="translate(1135.5 528.0) scale(0.905 1)"><text x="0" y="0" fill="#ffffff" text-anchor="start" font-size="14.0" word-spacing="1.77">---</text></g>
<g transform="translate(1230.5 528.0) scale(0.905 1)"><text x="0" y="0" fill="#fff" text-anchor="start" font-size="14.0" word-spacing="1.77">[%]</text></g>
<g transform="translate(894.0 545.0) scale(0.905 1)"><text x="0" y="0" fill="#fff" text-anchor="start" font-size="14.0" word-spacing="1.77">Exp. Supercell Index CH:</text></g>
<g transform="translate(1123.5 545.0) scale(0.905 1)"><text x="0" y="0" fill="#ff0000" text-anchor="end" font-size="14.0" word-spacing="1.77">2.45</text></g>
<g transform="translate(1230.5 545.0) scale(0.905 1)"><text x="0" y="0" fill="#fff" text-anchor="start" font-size="14.0" word-spacing="1.77">[1]</text></g>
<g transform="translate(894.0 562.0) scale(0.905 1)"><text x="0" y="0" fill="#fff" text-anchor="start" font-size="14.0" word-spacing="1.77">SWISS 12 Index:</text></g>
<g transform="translate(1123.5 562.0) scale(0.905 1)"><text x="0" y="0" fill="#ff0000" text-anchor="end" font-size="14.0" word-spacing="1.77">-6.67</text></g>
<g transform="translate(1230.5 562.0) scale(0.905 1)"><text x="0" y="0" fill="#fff" text-anchor="start" font-size="14.0" word-spacing="1.77">[1]</text></g>
<g transform="translate(894.0 608.0) scale(0.905 1)"><text x="0" y="0" fill="#fff" text-anchor="start" font-size="14.0" word-spacing="1.77">Storm Direction:</text></g>
<g transform="translate(1123.5 608.0) scale(0.905 1)"><text x="0" y="0" fill="#ffffff" text-anchor="end" font-size="14.0" word-spacing="1.77">247.48</text></g>
<g transform="translate(1230.5 608.0) scale(0.905 1)"><text x="0" y="0" fill="#fff" text-anchor="start" font-size="14.0" word-spacing="1.77">[°]</text></g>
<g transform="translate(894.0 625.0) scale(0.905 1)"><text x="0" y="0" fill="#fff" text-anchor="start" font-size="14.0" word-spacing="1.77">Storm Motion:</text></g>
<g transform="translate(1123.5 625.0) scale(0.905 1)"><text x="0" y="0" fill="#00ff00" text-anchor="end" font-size="14.0" word-spacing="1.77">9.58</text></g>
<g transform="translate(1230.5 625.0) scale(0.905 1)"><text x="0" y="0" fill="#fff" text-anchor="start" font-size="14.0" word-spacing="1.77">[knt]</text></g>
<g transform="translate(894.0 645.0) scale(0.905 1)"><text x="0" y="0" fill="#fff" text-anchor="start" font-size="14.0" word-spacing="1.77">SR Wind Sfc-2km:</text></g>
<g transform="translate(1123.5 645.0) scale(0.905 1)"><text x="0" y="0" fill="#00ff00" text-anchor="end" font-size="14.0" word-spacing="1.77">7.15</text></g>
<g transform="translate(1230.5 645.0) scale(0.905 1)"><text x="0" y="0" fill="#fff" text-anchor="start" font-size="14.0" word-spacing="1.77">[knt]</text></g>
<g transform="translate(894.0 661.5) scale(0.905 1)"><text x="0" y="0" fill="#fff" text-anchor="start" font-size="14.0" word-spacing="1.77">SR Wind 4km-6km:</text></g>
<g transform="translate(1123.5 661.5) scale(0.905 1)"><text x="0" y="0" fill="#00ff00" text-anchor="end" font-size="14.0" word-spacing="1.77">6.40</text></g>
<g transform="translate(1230.5 661.5) scale(0.905 1)"><text x="0" y="0" fill="#fff" text-anchor="start" font-size="14.0" word-spacing="1.77">[knt]</text></g>
<g transform="translate(894.0 679.0) scale(0.905 1)"><text x="0" y="0" fill="#fff" text-anchor="start" font-size="14.0" word-spacing="1.77">SR Wind 9km-11km:</text></g>
<g transform="translate(1123.5 679.0) scale(0.905 1)"><text x="0" y="0" fill="#ff0000" text-anchor="end" font-size="14.0" word-spacing="1.77">13.27</text></g>
<g transform="translate(1230.5 679.0) scale(0.905 1)"><text x="0" y="0" fill="#fff" text-anchor="start" font-size="14.0" word-spacing="1.77">[knt] HP</text></g>
<g transform="translate(894.0 699.0) scale(0.905 1)"><text x="0" y="0" fill="#fff" text-anchor="start" font-size="14.0" word-spacing="1.77">Effective Shear 6000:</text></g>
<g transform="translate(1123.5 699.0) scale(0.905 1)"><text x="0" y="0" fill="#00ff00" text-anchor="end" font-size="14.0" word-spacing="1.77">18.22</text></g>
<g transform="translate(1230.5 699.0) scale(0.905 1)"><text x="0" y="0" fill="#fff" text-anchor="start" font-size="14.0" word-spacing="1.77">[knt]</text></g>
<g transform="translate(894.0 719.0) scale(0.905 1)"><text x="0" y="0" fill="#fff" text-anchor="start" font-size="14.0" word-spacing="1.77">Bulk Richardson Number:</text></g>
<g transform="translate(1123.5 719.0) scale(0.905 1)"><text x="0" y="0" fill="#ffff00" text-anchor="end" font-size="14.0" word-spacing="1.77">453.79</text></g>
<g transform="translate(1213.5 719.0) scale(0.905 1)"><text x="0" y="0" fill="#ffff00" text-anchor="end" font-size="14.0" word-spacing="1.77">491.04</text></g>
<g transform="translate(1230.5 719.0) scale(0.905 1)"><text x="0" y="0" fill="#fff" text-anchor="start" font-size="14.0" word-spacing="1.77">[1]</text></g>
<g transform="translate(894.0 739.0) scale(0.905 1)"><text x="0" y="0" fill="#fff" text-anchor="start" font-size="14.0" word-spacing="1.77">3km Effective SRH:</text></g>
<g transform="translate(1123.5 739.0) scale(0.905 1)"><text x="0" y="0" fill="#00ff00" text-anchor="end" font-size="14.0" word-spacing="1.77">20.69</text></g>
<g transform="translate(1230.5 739.0) scale(0.905 1)"><text x="0" y="0" fill="#fff" text-anchor="start" font-size="14.0" word-spacing="1.77">[m^2/s^2]</text></g>
<g transform="translate(894.0 756.0) scale(0.905 1)"><text x="0" y="0" fill="#fff" text-anchor="start" font-size="14.0" word-spacing="1.77">Max 3km SRH (Sfc-2km):</text></g>
<g transform="translate(1123.5 756.0) scale(0.905 1)"><text x="0" y="0" fill="#00ff00" text-anchor="end" font-size="14.0" word-spacing="1.77">25.31</text></g>
<g transform="translate(1230.5 756.0) scale(0.905 1)"><text x="0" y="0" fill="#fff" text-anchor="start" font-size="14.0" word-spacing="1.77">[m^2/s^2]</text></g>
<g transform="translate(894.0 773.0) scale(0.905 1)"><text x="0" y="0" fill="#fff" text-anchor="start" font-size="14.0" word-spacing="1.77">Max 3km SRH Level AGL:</text></g>
<g transform="translate(1123.5 773.0) scale(0.905 1)"><text x="0" y="0" fill="#00ff00" text-anchor="end" font-size="14.0" word-spacing="1.77">1155.00</text></g>
<g transform="translate(1230.5 773.0) scale(0.905 1)"><text x="0" y="0" fill="#fff" text-anchor="start" font-size="14.0" word-spacing="1.77">[m]</text></g>
<g transform="translate(894.0 793.0) scale(0.905 1)"><text x="0" y="0" fill="#fff" text-anchor="start" font-size="14.0" word-spacing="1.77">3km Energy Helicity Index:</text></g>
<g transform="translate(1123.5 793.0) scale(0.905 1)"><text x="0" y="0" fill="#00ff00" text-anchor="end" font-size="14.0" word-spacing="1.77">0.37</text></g>
<g transform="translate(1213.5 793.0) scale(0.905 1)"><text x="0" y="0" fill="#00ff00" text-anchor="end" font-size="14.0" word-spacing="1.77">0.41</text></g>
<g transform="translate(1230.5 793.0) scale(0.905 1)"><text x="0" y="0" fill="#fff" text-anchor="start" font-size="14.0" word-spacing="1.77">[1]</text></g>
<g transform="translate(894.0 810.0) scale(0.905 1)"><text x="0" y="0" fill="#fff" text-anchor="start" font-size="14.0" word-spacing="1.77">3km Vorticity Gen. Pot.:</text></g>
<g transform="translate(1123.5 810.0) scale(0.905 1)"><text x="0" y="0" fill="#00ff00" text-anchor="end" font-size="14.0" word-spacing="1.77">0.08</text></g>
<g transform="translate(1213.5 810.0) scale(0.905 1)"><text x="0" y="0" fill="#00ff00" text-anchor="end" font-size="14.0" word-spacing="1.77">0.08</text></g>
<g transform="translate(1230.5 810.0) scale(0.905 1)"><text x="0" y="0" fill="#fff" text-anchor="start" font-size="14.0" word-spacing="1.77">[m/s^2]</text></g>
<g transform="translate(894.0 104.0) scale(0.905 1)"><text x="0" y="0" fill="#fff" text-anchor="start" font-size="14.0" word-spacing="1.77">Parcels: Using 50mB mean layer LCL + CCL</text></g>
<path d="M894.0 105.5 H1153.0" stroke="#fff" fill="none"/>
<g transform="translate(894.0 339.0) scale(0.905 1)"><text x="0" y="0" fill="#fff" text-anchor="start" font-size="14.0" word-spacing="1.77">Convective Indices</text></g>
<path d="M894.0 340.5 H1000.0" stroke="#fff" fill="none"/>
<g transform="translate(894.0 588.0) scale(0.905 1)"><text x="0" y="0" fill="#fff" text-anchor="start" font-size="14.0" word-spacing="1.77">Wind Parameters</text></g>
<path d="M894.0 589.5 H995.0" stroke="#fff" fill="none"/>
<rect x="729" y="827" width="15" height="8" fill="#ff0000"/>
<g transform="translate(753.5 836.0) scale(0.905 1)"><text x="0" y="0" fill="#ff0000" text-anchor="start" font-size="14.0" word-spacing="1.77">Temperature Profile</text></g>
<rect x="729" y="847" width="15" height="8" fill="#00ffff"/>
<g transform="translate(753.5 856.0) scale(0.905 1)"><text x="0" y="0" fill="#00ffff" text-anchor="start" font-size="14.0" word-spacing="1.77">Dewpoint Profile</text></g>
<rect x="729" y="867" width="15" height="8" fill="#00ff00"/>
<g transform="translate(753.5 876.0) scale(0.905 1)"><text x="0" y="0" fill="#00ff00" text-anchor="start" font-size="14.0" word-spacing="1.77">OBS Windspeed Profile</text></g>
<rect x="729" y="887" width="15" height="8" fill="#ff0080"/>
<g transform="translate(753.5 896.0) scale(0.905 1)"><text x="0" y="0" fill="#ff0080" text-anchor="start" font-size="14.0" word-spacing="1.77">SR Windspeed Profile</text></g>
<rect x="729" y="907" width="15" height="8" fill="#c0c000"/>
<g transform="translate(753.5 916.0) scale(0.905 1)"><text x="0" y="0" fill="#c0c000" text-anchor="start" font-size="14.0" word-spacing="1.77">Sfc-3km Storm Relative Helicity Profile</text></g>
<rect x="729" y="927" width="15" height="8" fill="#3c3c00"/>
<g transform="translate(753.5 936.0) scale(0.905 1)"><text x="0" y="0" fill="#3c3c00" text-anchor="start" font-size="14.0" word-spacing="1.77">Effective Layer (CAPE &gt;= 100 J/kg)</text></g>
<rect x="1079" y="827" width="15" height="8" fill="#00ff00"/>
<g transform="translate(1103.3 836.0) scale(0.905 1)"><text x="0" y="0" fill="#00ff00" text-anchor="start" font-size="14.0" word-spacing="1.77">No / Non Severe Thunderstorms</text></g>
<rect x="1079" y="847" width="15" height="8" fill="#ffff00"/>
<g transform="translate(1103.3 856.0) scale(0.905 1)"><text x="0" y="0" fill="#ffff00" text-anchor="start" font-size="14.0" word-spacing="1.77">Scattered / Moderate Thunderstorms</text></g>
<rect x="1079" y="867" width="15" height="8" fill="#ff0000"/>
<g transform="translate(1103.3 876.0) scale(0.905 1)"><text x="0" y="0" fill="#ff0000" text-anchor="start" font-size="14.0" word-spacing="1.77">Widespread / Severe Thunderstorms</text></g>

</svg></body></html>
